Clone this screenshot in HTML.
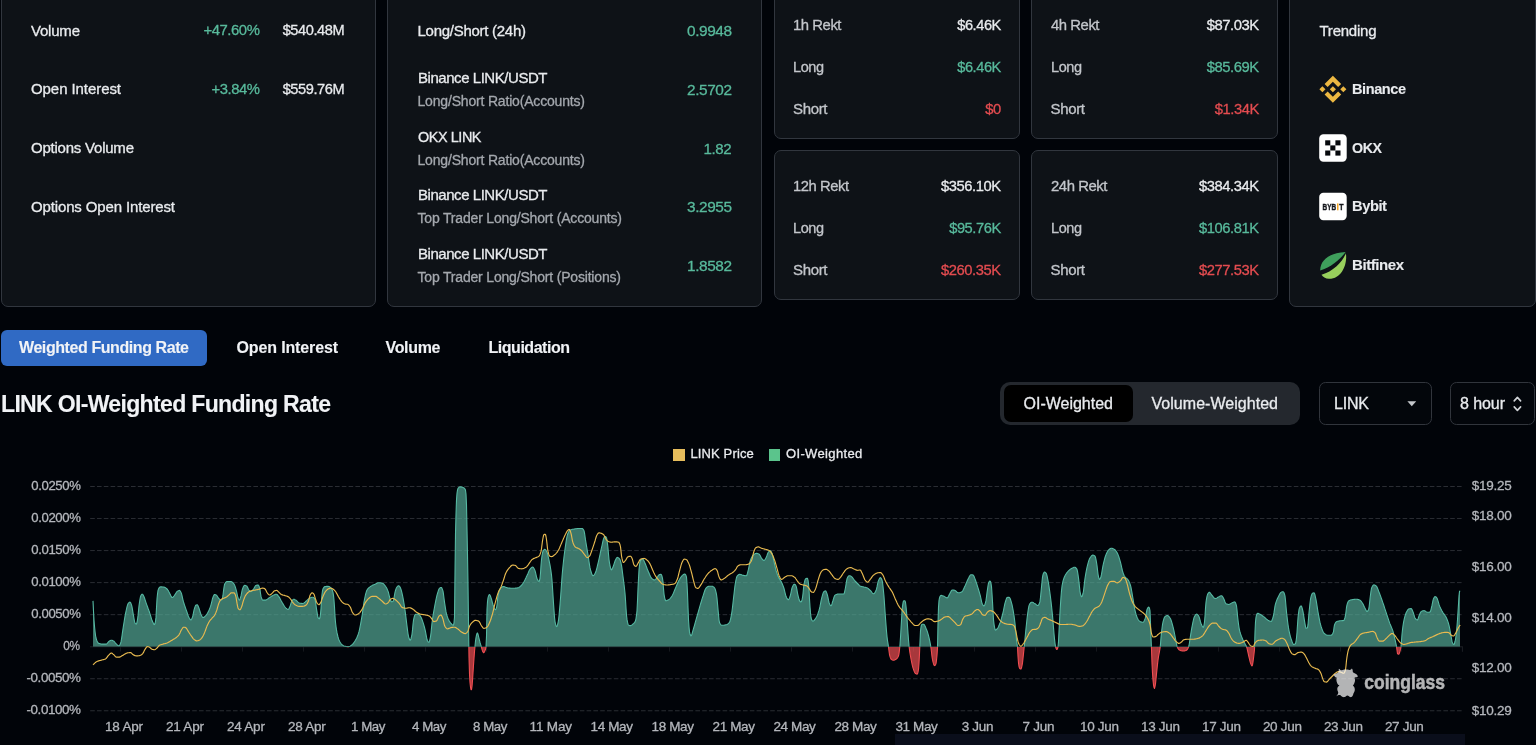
<!DOCTYPE html>
<html>
<head>
<meta charset="utf-8">
<title>LINK OI-Weighted Funding Rate</title>
<style>
html,body{margin:0;padding:0;}
body{width:1536px;height:745px;overflow:hidden;background:#010409;position:relative;
  font-family:"Liberation Sans",sans-serif;color:#e9ebee;}
.card{position:absolute;box-sizing:border-box;background:#0e1217;border:1px solid #31363e;border-radius:7px;}
.t{position:absolute;white-space:nowrap;line-height:20px;height:20px;-webkit-text-stroke:0.3px;}
.b{font-weight:700;-webkit-text-stroke:0.1px;}
.w{color:#f1f3f6;}
.g{color:#58ba9c;}
.r{color:#e34c50;}
.m{color:#a4a8ae;}
.l{color:#c3c6cb;}
.ax{color:#b4b7bc;}
.tab{position:absolute;box-sizing:border-box;border-radius:6px;background:#306ac4;}
svg{position:absolute;left:0;top:0;}
</style>
</head>
<body>

<!-- top cards -->
<div class="card" style="left:1px;top:-40px;width:375px;height:347px;"></div>
<div class="card" style="left:387px;top:-40px;width:375px;height:347px;"></div>
<div class="card" style="left:774px;top:-10px;width:246px;height:149px;"></div>
<div class="card" style="left:1031.4px;top:-10px;width:246.6px;height:149px;"></div>
<div class="card" style="left:774px;top:149.9px;width:246px;height:150.1px;"></div>
<div class="card" style="left:1031.4px;top:149.9px;width:246.6px;height:150.1px;"></div>
<div class="card" style="left:1289px;top:-40px;width:246.5px;height:347px;"></div>

<!-- tab button -->
<div class="tab" style="left:1px;top:329.8px;width:206.3px;height:36px;"></div>

<!-- segmented control -->
<div style="position:absolute;left:1000.4px;top:382.1px;width:300.1px;height:42.9px;border-radius:10px;background:#24282e;"></div>
<div style="position:absolute;left:1003.5px;top:385.2px;width:129.2px;height:36.7px;border-radius:7px;background:#000000;"></div>
<!-- selects -->
<div style="position:absolute;box-sizing:border-box;left:1318.8px;top:382px;width:113px;height:42.9px;border-radius:6.5px;border:1px solid #31353c;background:#03060b;"></div>
<div style="position:absolute;box-sizing:border-box;left:1449.7px;top:382px;width:85.6px;height:42.9px;border-radius:6.5px;border:1px solid #31353c;background:#03060b;"></div>

<!-- legend swatches -->
<div style="position:absolute;left:672.9px;top:448.9px;width:11.7px;height:11.9px;background:#e6bd5c;"></div>
<div style="position:absolute;left:768.6px;top:448.9px;width:11.7px;height:11.9px;background:#5bc48c;"></div>

<!-- bottom slider strip -->
<div style="position:absolute;left:895px;top:734px;width:570.4px;height:11px;background:#0a0e1b;"></div>

<div id="txt" style="position:absolute;left:0;top:0;width:1536px;height:745px;will-change:transform;">
<div class="t" style="font-size:15px;top:20.50px;line-height:20px;height:20px;letter-spacing:-0.209px;left:31.00px;">Volume</div>
<div class="t g" style="font-size:15px;top:20.00px;line-height:20px;height:20px;letter-spacing:-0.450px;transform:scaleX(0.9923);transform-origin:right center;right:1276.45px;">+47.60%</div>
<div class="t" style="font-size:15px;top:20.00px;line-height:20px;height:20px;letter-spacing:-0.450px;transform:scaleX(0.9737);transform-origin:right center;right:1191.44px;">$540.48M</div>
<div class="t" style="font-size:15px;top:79.00px;line-height:20px;height:20px;letter-spacing:-0.074px;left:31.00px;">Open Interest</div>
<div class="t g" style="font-size:15px;top:78.50px;line-height:20px;height:20px;letter-spacing:-0.450px;transform:scaleX(0.9888);transform-origin:right center;right:1276.44px;">+3.84%</div>
<div class="t" style="font-size:15px;top:78.50px;line-height:20px;height:20px;letter-spacing:-0.450px;transform:scaleX(0.9737);transform-origin:right center;right:1191.44px;">$559.76M</div>
<div class="t" style="font-size:15px;top:137.50px;line-height:20px;height:20px;letter-spacing:-0.224px;left:31.00px;">Options Volume</div>
<div class="t" style="font-size:15px;top:196.60px;line-height:20px;height:20px;letter-spacing:-0.138px;left:31.00px;">Options Open Interest</div>
<div class="t" style="font-size:15px;top:20.50px;line-height:20px;height:20px;letter-spacing:-0.272px;left:417.50px;">Long/Short (24h)</div>
<div class="t g" style="font-size:15.4px;top:21.00px;line-height:20px;height:20px;letter-spacing:-0.416px;right:804.42px;">0.9948</div>
<div class="t" style="font-size:15px;top:68.00px;line-height:20px;height:20px;letter-spacing:-0.450px;transform:scaleX(0.9997);transform-origin:left center;left:417.50px;">Binance LINK/USDT</div>
<div class="t m" style="font-size:14px;top:91.00px;line-height:20px;height:20px;letter-spacing:-0.179px;left:417.50px;">Long/Short Ratio(Accounts)</div>
<div class="t g" style="font-size:15.4px;top:80.00px;line-height:20px;height:20px;letter-spacing:-0.416px;right:804.42px;">2.5702</div>
<div class="t" style="font-size:15px;top:126.67px;line-height:20px;height:20px;letter-spacing:-0.450px;transform:scaleX(0.9613);transform-origin:left center;left:417.50px;">OKX LINK</div>
<div class="t m" style="font-size:14px;top:149.67px;line-height:20px;height:20px;letter-spacing:-0.179px;left:417.50px;">Long/Short Ratio(Accounts)</div>
<div class="t g" style="font-size:15.4px;top:138.67px;line-height:20px;height:20px;letter-spacing:-0.462px;transform:scaleX(0.9796);transform-origin:right center;right:804.45px;">1.82</div>
<div class="t" style="font-size:15px;top:185.34px;line-height:20px;height:20px;letter-spacing:-0.450px;transform:scaleX(0.9997);transform-origin:left center;left:417.50px;">Binance LINK/USDT</div>
<div class="t m" style="font-size:14px;top:208.34px;line-height:20px;height:20px;letter-spacing:-0.181px;left:417.50px;">Top Trader Long/Short (Accounts)</div>
<div class="t g" style="font-size:15.4px;top:197.34px;line-height:20px;height:20px;letter-spacing:-0.416px;right:804.42px;">3.2955</div>
<div class="t" style="font-size:15px;top:244.01px;line-height:20px;height:20px;letter-spacing:-0.450px;transform:scaleX(0.9997);transform-origin:left center;left:417.50px;">Binance LINK/USDT</div>
<div class="t m" style="font-size:14px;top:267.01px;line-height:20px;height:20px;letter-spacing:-0.183px;left:417.50px;">Top Trader Long/Short (Positions)</div>
<div class="t g" style="font-size:15.4px;top:256.01px;line-height:20px;height:20px;letter-spacing:-0.416px;right:804.42px;">1.8582</div>
<div class="t l" style="font-size:15px;top:14.50px;line-height:20px;height:20px;letter-spacing:-0.450px;transform:scaleX(0.9897);transform-origin:left center;left:793.00px;">1h Rekt</div>
<div class="t" style="font-size:15px;top:14.50px;line-height:20px;height:20px;letter-spacing:-0.450px;transform:scaleX(0.9714);transform-origin:right center;right:535.44px;">$6.46K</div>
<div class="t l" style="font-size:15px;top:56.50px;line-height:20px;height:20px;letter-spacing:-0.450px;transform:scaleX(0.9680);transform-origin:left center;left:793.00px;">Long</div>
<div class="t g" style="font-size:15px;top:56.50px;line-height:20px;height:20px;letter-spacing:-0.450px;transform:scaleX(0.9714);transform-origin:right center;right:535.44px;">$6.46K</div>
<div class="t l" style="font-size:15px;top:98.50px;line-height:20px;height:20px;letter-spacing:-0.340px;left:793.00px;">Short</div>
<div class="t r" style="font-size:15px;top:98.50px;line-height:20px;height:20px;letter-spacing:-0.450px;transform:scaleX(0.9854);transform-origin:right center;right:535.44px;">$0</div>
<div class="t l" style="font-size:15px;top:14.50px;line-height:20px;height:20px;letter-spacing:-0.450px;transform:scaleX(0.9897);transform-origin:left center;left:1050.50px;">4h Rekt</div>
<div class="t" style="font-size:15px;top:14.50px;line-height:20px;height:20px;letter-spacing:-0.450px;transform:scaleX(0.9870);transform-origin:right center;right:277.44px;">$87.03K</div>
<div class="t l" style="font-size:15px;top:56.50px;line-height:20px;height:20px;letter-spacing:-0.450px;transform:scaleX(0.9680);transform-origin:left center;left:1050.50px;">Long</div>
<div class="t g" style="font-size:15px;top:56.50px;line-height:20px;height:20px;letter-spacing:-0.450px;transform:scaleX(0.9870);transform-origin:right center;right:277.44px;">$85.69K</div>
<div class="t l" style="font-size:15px;top:98.50px;line-height:20px;height:20px;letter-spacing:-0.340px;left:1050.50px;">Short</div>
<div class="t r" style="font-size:15px;top:98.50px;line-height:20px;height:20px;letter-spacing:-0.450px;transform:scaleX(0.9824);transform-origin:right center;right:277.44px;">$1.34K</div>
<div class="t l" style="font-size:15px;top:176.00px;line-height:20px;height:20px;letter-spacing:-0.450px;transform:scaleX(0.9842);transform-origin:left center;left:793.00px;">12h Rekt</div>
<div class="t" style="font-size:15px;top:176.00px;line-height:20px;height:20px;letter-spacing:-0.450px;transform:scaleX(0.9822);transform-origin:right center;right:535.44px;">$356.10K</div>
<div class="t l" style="font-size:15px;top:218.00px;line-height:20px;height:20px;letter-spacing:-0.450px;transform:scaleX(0.9680);transform-origin:left center;left:793.00px;">Long</div>
<div class="t g" style="font-size:15px;top:218.00px;line-height:20px;height:20px;letter-spacing:-0.450px;transform:scaleX(0.9776);transform-origin:right center;right:535.44px;">$95.76K</div>
<div class="t l" style="font-size:15px;top:260.00px;line-height:20px;height:20px;letter-spacing:-0.340px;left:793.00px;">Short</div>
<div class="t r" style="font-size:15px;top:260.00px;line-height:20px;height:20px;letter-spacing:-0.450px;transform:scaleX(0.9822);transform-origin:right center;right:535.44px;">$260.35K</div>
<div class="t l" style="font-size:15px;top:176.00px;line-height:20px;height:20px;letter-spacing:-0.450px;transform:scaleX(0.9930);transform-origin:left center;left:1050.50px;">24h Rekt</div>
<div class="t" style="font-size:15px;top:176.00px;line-height:20px;height:20px;letter-spacing:-0.450px;transform:scaleX(0.9822);transform-origin:right center;right:277.44px;">$384.34K</div>
<div class="t l" style="font-size:15px;top:218.00px;line-height:20px;height:20px;letter-spacing:-0.450px;transform:scaleX(0.9680);transform-origin:left center;left:1050.50px;">Long</div>
<div class="t g" style="font-size:15px;top:218.00px;line-height:20px;height:20px;letter-spacing:-0.450px;transform:scaleX(0.9822);transform-origin:right center;right:277.44px;">$106.81K</div>
<div class="t l" style="font-size:15px;top:260.00px;line-height:20px;height:20px;letter-spacing:-0.340px;left:1050.50px;">Short</div>
<div class="t r" style="font-size:15px;top:260.00px;line-height:20px;height:20px;letter-spacing:-0.450px;transform:scaleX(0.9822);transform-origin:right center;right:277.44px;">$277.53K</div>
<div class="t" style="font-size:15px;top:20.50px;line-height:20px;height:20px;letter-spacing:-0.237px;left:1319.50px;">Trending</div>
<div class="t b" style="font-size:15px;top:79.00px;line-height:20px;height:20px;letter-spacing:-0.450px;transform:scaleX(0.9702);transform-origin:left center;left:1352.00px;">Binance</div>
<div class="t b" style="font-size:15px;top:137.50px;line-height:20px;height:20px;letter-spacing:-0.450px;transform:scaleX(0.9489);transform-origin:left center;left:1352.00px;">OKX</div>
<div class="t b" style="font-size:15px;top:196.00px;line-height:20px;height:20px;letter-spacing:-0.450px;transform:scaleX(0.9804);transform-origin:left center;left:1352.00px;">Bybit</div>
<div class="t b" style="font-size:15px;top:255.00px;line-height:20px;height:20px;letter-spacing:-0.431px;left:1352.00px;">Bitfinex</div>
<div class="t b w" style="font-size:16px;top:337.90px;line-height:20px;height:20px;letter-spacing:-0.418px;left:19.00px;">Weighted Funding Rate</div>
<div class="t b w" style="font-size:16px;top:337.90px;line-height:20px;height:20px;letter-spacing:-0.137px;left:236.50px;">Open Interest</div>
<div class="t b w" style="font-size:16px;top:337.90px;line-height:20px;height:20px;letter-spacing:-0.322px;left:385.50px;">Volume</div>
<div class="t b w" style="font-size:16px;top:337.90px;line-height:20px;height:20px;letter-spacing:-0.470px;left:488.50px;">Liquidation</div>
<div class="t b w" style="font-size:23.3px;top:388.60px;line-height:30px;height:30px;letter-spacing:-0.699px;transform:scaleX(0.9900);transform-origin:left center;left:1.00px;">LINK OI-Weighted Funding Rate</div>
<div class="t" style="font-size:16px;top:393.50px;line-height:20px;height:20px;letter-spacing:-0.003px;left:1023.50px;">OI-Weighted</div>
<div class="t" style="font-size:16px;top:393.50px;line-height:20px;height:20px;letter-spacing:0.036px;left:1151.50px;">Volume-Weighted</div>
<div class="t" style="font-size:16px;top:393.50px;line-height:20px;height:20px;letter-spacing:-0.193px;left:1334.00px;">LINK</div>
<div class="t" style="font-size:16px;top:393.50px;line-height:20px;height:20px;letter-spacing:-0.075px;left:1460.00px;">8 hour</div>
<div class="t" style="font-size:13px;top:444.40px;line-height:20px;height:20px;letter-spacing:0.140px;left:690.40px;">LINK Price</div>
<div class="t" style="font-size:13px;top:444.40px;line-height:20px;height:20px;letter-spacing:0.355px;left:786.00px;">OI-Weighted</div>
<div class="t ax" style="font-size:13.5px;top:475.60px;line-height:20px;height:20px;letter-spacing:-0.405px;transform:scaleX(0.9731);transform-origin:right center;right:1455.89px;">0.0250%</div>
<div class="t ax" style="font-size:13.5px;top:507.70px;line-height:20px;height:20px;letter-spacing:-0.405px;transform:scaleX(0.9731);transform-origin:right center;right:1455.89px;">0.0200%</div>
<div class="t ax" style="font-size:13.5px;top:539.80px;line-height:20px;height:20px;letter-spacing:-0.405px;transform:scaleX(0.9731);transform-origin:right center;right:1455.89px;">0.0150%</div>
<div class="t ax" style="font-size:13.5px;top:571.90px;line-height:20px;height:20px;letter-spacing:-0.405px;transform:scaleX(0.9731);transform-origin:right center;right:1455.89px;">0.0100%</div>
<div class="t ax" style="font-size:13.5px;top:604.00px;line-height:20px;height:20px;letter-spacing:-0.405px;transform:scaleX(0.9731);transform-origin:right center;right:1455.89px;">0.0050%</div>
<div class="t ax" style="font-size:13.5px;top:636.10px;line-height:20px;height:20px;letter-spacing:-0.405px;transform:scaleX(0.8791);transform-origin:right center;right:1455.86px;">0%</div>
<div class="t ax" style="font-size:13.5px;top:668.20px;line-height:20px;height:20px;letter-spacing:-0.405px;transform:scaleX(0.9916);transform-origin:right center;right:1455.90px;">-0.0050%</div>
<div class="t ax" style="font-size:13.5px;top:700.30px;line-height:20px;height:20px;letter-spacing:-0.405px;transform:scaleX(0.9916);transform-origin:right center;right:1455.90px;">-0.0100%</div>
<div class="t ax" style="font-size:13.5px;top:475.60px;line-height:20px;height:20px;letter-spacing:-0.279px;left:1471.80px;">$19.25</div>
<div class="t ax" style="font-size:13.5px;top:506.40px;line-height:20px;height:20px;letter-spacing:-0.279px;left:1471.80px;">$18.00</div>
<div class="t ax" style="font-size:13.5px;top:557.40px;line-height:20px;height:20px;letter-spacing:-0.279px;left:1471.80px;">$16.00</div>
<div class="t ax" style="font-size:13.5px;top:607.70px;line-height:20px;height:20px;letter-spacing:-0.279px;left:1471.80px;">$14.00</div>
<div class="t ax" style="font-size:13.5px;top:657.80px;line-height:20px;height:20px;letter-spacing:-0.279px;left:1471.80px;">$12.00</div>
<div class="t ax" style="font-size:13.5px;top:700.70px;line-height:20px;height:20px;letter-spacing:-0.279px;left:1471.80px;">$10.29</div>
<div class="t ax" style="font-size:13.5px;top:716.50px;line-height:20px;height:20px;letter-spacing:-0.226px;left:123.89px;width:0;display:flex;justify-content:center;"><span>18 Apr</span></div>
<div class="t ax" style="font-size:13.5px;top:716.50px;line-height:20px;height:20px;letter-spacing:-0.226px;left:184.86px;width:0;display:flex;justify-content:center;"><span>21 Apr</span></div>
<div class="t ax" style="font-size:13.5px;top:716.50px;line-height:20px;height:20px;letter-spacing:-0.226px;left:245.83px;width:0;display:flex;justify-content:center;"><span>24 Apr</span></div>
<div class="t ax" style="font-size:13.5px;top:716.50px;line-height:20px;height:20px;letter-spacing:-0.226px;left:306.80px;width:0;display:flex;justify-content:center;"><span>28 Apr</span></div>
<div class="t ax" style="font-size:13.5px;top:716.50px;line-height:20px;height:20px;letter-spacing:-0.405px;transform:scaleX(0.9845);transform-origin:center center;left:367.68px;width:0;display:flex;justify-content:center;"><span>1 May</span></div>
<div class="t ax" style="font-size:13.5px;top:716.50px;line-height:20px;height:20px;letter-spacing:-0.405px;transform:scaleX(0.9845);transform-origin:center center;left:428.65px;width:0;display:flex;justify-content:center;"><span>4 May</span></div>
<div class="t ax" style="font-size:13.5px;top:716.50px;line-height:20px;height:20px;letter-spacing:-0.405px;transform:scaleX(0.9845);transform-origin:center center;left:489.62px;width:0;display:flex;justify-content:center;"><span>8 May</span></div>
<div class="t ax" style="font-size:13.5px;top:716.50px;line-height:20px;height:20px;letter-spacing:-0.176px;left:550.70px;width:0;display:flex;justify-content:center;"><span>11 May</span></div>
<div class="t ax" style="font-size:13.5px;top:716.50px;line-height:20px;height:20px;letter-spacing:-0.376px;left:611.57px;width:0;display:flex;justify-content:center;"><span>14 May</span></div>
<div class="t ax" style="font-size:13.5px;top:716.50px;line-height:20px;height:20px;letter-spacing:-0.376px;left:672.54px;width:0;display:flex;justify-content:center;"><span>18 May</span></div>
<div class="t ax" style="font-size:13.5px;top:716.50px;line-height:20px;height:20px;letter-spacing:-0.376px;left:733.51px;width:0;display:flex;justify-content:center;"><span>21 May</span></div>
<div class="t ax" style="font-size:13.5px;top:716.50px;line-height:20px;height:20px;letter-spacing:-0.376px;left:794.48px;width:0;display:flex;justify-content:center;"><span>24 May</span></div>
<div class="t ax" style="font-size:13.5px;top:716.50px;line-height:20px;height:20px;letter-spacing:-0.376px;left:855.45px;width:0;display:flex;justify-content:center;"><span>28 May</span></div>
<div class="t ax" style="font-size:13.5px;top:716.50px;line-height:20px;height:20px;letter-spacing:-0.376px;left:916.42px;width:0;display:flex;justify-content:center;"><span>31 May</span></div>
<div class="t ax" style="font-size:13.5px;top:716.50px;line-height:20px;height:20px;letter-spacing:-0.283px;left:977.44px;width:0;display:flex;justify-content:center;"><span>3 Jun</span></div>
<div class="t ax" style="font-size:13.5px;top:716.50px;line-height:20px;height:20px;letter-spacing:-0.283px;left:1038.41px;width:0;display:flex;justify-content:center;"><span>7 Jun</span></div>
<div class="t ax" style="font-size:13.5px;top:716.50px;line-height:20px;height:20px;letter-spacing:-0.309px;left:1099.37px;width:0;display:flex;justify-content:center;"><span>10 Jun</span></div>
<div class="t ax" style="font-size:13.5px;top:716.50px;line-height:20px;height:20px;letter-spacing:-0.309px;left:1160.34px;width:0;display:flex;justify-content:center;"><span>13 Jun</span></div>
<div class="t ax" style="font-size:13.5px;top:716.50px;line-height:20px;height:20px;letter-spacing:-0.309px;left:1221.31px;width:0;display:flex;justify-content:center;"><span>17 Jun</span></div>
<div class="t ax" style="font-size:13.5px;top:716.50px;line-height:20px;height:20px;letter-spacing:-0.309px;left:1282.28px;width:0;display:flex;justify-content:center;"><span>20 Jun</span></div>
<div class="t ax" style="font-size:13.5px;top:716.50px;line-height:20px;height:20px;letter-spacing:-0.309px;left:1343.25px;width:0;display:flex;justify-content:center;"><span>23 Jun</span></div>
<div class="t ax" style="font-size:13.5px;top:716.50px;line-height:20px;height:20px;letter-spacing:-0.309px;left:1404.22px;width:0;display:flex;justify-content:center;"><span>27 Jun</span></div>
</div>

<svg width="1536" height="745" viewBox="0 0 1536 745">
  <defs>
    <clipPath id="cpos"><rect x="0" y="0" width="1536" height="646.7"/></clipPath>
    <clipPath id="cneg"><rect x="0" y="647.1" width="1536" height="100"/></clipPath>
  </defs>
  <!-- grid -->
  <g stroke="#2a2d33" stroke-width="1" stroke-dasharray="4.6 2.2" fill="none">
    <path d="M90.2 486.50H1462.4 M90.2 518.54H1462.4 M90.2 550.58H1462.4 M90.2 582.62H1462.4 M90.2 614.66H1462.4 M90.2 678.74H1462.4 M90.2 710.78H1462.4"/>
  </g>
  <path d="M90 646.8H1462" stroke="#1d2025" stroke-width="1" fill="none"/>
  <g stroke="#15181d" stroke-width="1"><path d="M120.5 646.6v5"/><path d="M181.5 646.6v5"/><path d="M242.5 646.6v5"/><path d="M303.5 646.6v5"/><path d="M364.5 646.6v5"/><path d="M425.5 646.6v5"/><path d="M486.5 646.6v5"/><path d="M547.5 646.6v5"/><path d="M608.5 646.6v5"/><path d="M669.5 646.6v5"/><path d="M730.5 646.6v5"/><path d="M791.5 646.6v5"/><path d="M852.5 646.6v5"/><path d="M913.5 646.6v5"/><path d="M974.5 646.6v5"/><path d="M1035.5 646.6v5"/><path d="M1096.5 646.6v5"/><path d="M1157.5 646.6v5"/><path d="M1218.5 646.6v5"/><path d="M1279.5 646.6v5"/><path d="M1340.5 646.6v5"/><path d="M1401.5 646.6v5"/></g>
  <path d="M1462.4 646.3v5.5" stroke="#1d2025" stroke-width="1"/>
  <!-- area -->
  <path d="M93.0 600.9 L93.5 611.3 L94.0 620.0 L94.5 626.2 L95.0 631.3 L95.5 635.3 L96.0 638.0 L96.5 639.6 L97.0 640.9 L97.5 642.0 L98.0 642.8 L98.5 643.2 L99.0 643.4 L99.5 643.6 L100.0 643.8 L100.5 643.9 L101.0 644.0 L101.5 644.1 L102.0 644.1 L102.5 644.1 L103.0 644.1 L103.5 644.1 L104.0 644.1 L104.5 644.1 L105.0 644.1 L105.5 644.1 L106.0 644.1 L106.5 644.0 L107.0 643.6 L107.5 643.0 L108.0 642.3 L108.5 641.8 L109.0 641.4 L109.5 641.0 L110.0 640.7 L110.5 640.4 L111.0 640.2 L111.5 640.2 L112.0 640.3 L112.5 640.5 L113.0 640.8 L113.5 641.0 L114.0 641.3 L114.5 641.8 L115.0 642.5 L115.5 643.1 L116.0 643.7 L116.5 644.2 L117.0 644.7 L117.5 645.1 L118.0 645.5 L118.5 645.7 L119.0 645.8 L119.5 645.4 L120.0 644.5 L120.5 643.5 L121.0 641.9 L121.5 639.2 L122.0 635.8 L122.5 632.2 L123.0 628.8 L123.5 625.7 L124.0 622.5 L124.5 619.3 L125.0 616.3 L125.5 613.6 L126.0 611.3 L126.5 609.0 L127.0 606.8 L127.5 605.1 L128.0 603.8 L128.5 603.1 L129.0 602.6 L129.5 602.2 L130.0 602.1 L130.5 602.6 L131.0 603.6 L131.5 604.9 L132.0 606.8 L132.5 609.7 L133.0 612.8 L133.5 615.7 L134.0 618.7 L134.5 621.4 L135.0 623.0 L135.5 623.6 L136.0 624.0 L136.5 624.0 L137.0 622.3 L137.5 619.7 L138.0 615.9 L138.5 610.8 L139.0 605.9 L139.5 602.4 L140.0 599.2 L140.5 596.7 L141.0 595.4 L141.5 594.7 L142.0 594.2 L142.5 594.2 L143.0 594.8 L143.5 595.8 L144.0 596.8 L144.5 598.0 L145.0 599.6 L145.5 601.2 L146.0 602.7 L146.5 604.1 L147.0 605.4 L147.5 606.8 L148.0 608.2 L148.5 609.5 L149.0 610.9 L149.5 612.3 L150.0 613.9 L150.5 615.5 L151.0 617.2 L151.5 618.8 L152.0 620.3 L152.5 621.6 L153.0 622.6 L153.5 623.6 L154.0 624.4 L154.5 624.6 L155.0 623.6 L155.5 621.3 L156.0 617.4 L156.5 607.7 L157.0 599.1 L157.5 594.0 L158.0 590.5 L158.5 589.1 L159.0 588.1 L159.5 587.4 L160.0 587.0 L160.5 586.9 L161.0 586.9 L161.5 586.9 L162.0 586.9 L162.5 587.0 L163.0 587.0 L163.5 587.0 L164.0 587.1 L164.5 587.2 L165.0 587.5 L165.5 587.8 L166.0 588.1 L166.5 588.5 L167.0 589.0 L167.5 589.5 L168.0 590.2 L168.5 591.1 L169.0 592.1 L169.5 593.0 L170.0 593.9 L170.5 595.0 L171.0 596.1 L171.5 597.0 L172.0 597.5 L172.5 597.5 L173.0 597.2 L173.5 596.6 L174.0 596.0 L174.5 595.3 L175.0 594.7 L175.5 593.9 L176.0 593.0 L176.5 592.2 L177.0 591.5 L177.5 591.2 L178.0 590.9 L178.5 590.7 L179.0 590.5 L179.5 590.4 L180.0 590.7 L180.5 591.5 L181.0 592.4 L181.5 593.6 L182.0 595.6 L182.5 597.9 L183.0 600.1 L183.5 601.9 L184.0 603.5 L184.5 605.1 L185.0 606.5 L185.5 608.0 L186.0 609.4 L186.5 610.8 L187.0 612.2 L187.5 613.7 L188.0 615.2 L188.5 616.5 L189.0 617.6 L189.5 618.5 L190.0 619.2 L190.5 619.8 L191.0 619.9 L191.5 619.3 L192.0 618.3 L192.5 617.1 L193.0 615.3 L193.5 612.7 L194.0 610.2 L194.5 608.5 L195.0 606.9 L195.5 605.7 L196.0 605.1 L196.5 605.0 L197.0 604.8 L197.5 604.9 L198.0 605.8 L198.5 607.0 L199.0 608.2 L199.5 609.8 L200.0 611.5 L200.5 613.2 L201.0 614.5 L201.5 615.5 L202.0 616.5 L202.5 617.2 L203.0 617.5 L203.5 617.4 L204.0 617.2 L204.5 616.8 L205.0 616.4 L205.5 615.9 L206.0 615.4 L206.5 614.7 L207.0 614.0 L207.5 613.1 L208.0 612.3 L208.5 611.3 L209.0 610.3 L209.5 609.1 L210.0 607.8 L210.5 606.4 L211.0 604.8 L211.5 603.0 L212.0 600.8 L212.5 598.6 L213.0 597.2 L213.5 595.9 L214.0 594.9 L214.5 594.5 L215.0 594.6 L215.5 594.7 L216.0 594.9 L216.5 595.2 L217.0 595.8 L217.5 596.5 L218.0 597.4 L218.5 598.1 L219.0 598.6 L219.5 599.2 L220.0 599.6 L220.5 600.0 L221.0 600.1 L221.5 599.9 L222.0 599.3 L222.5 598.4 L223.0 595.2 L223.5 590.8 L224.0 587.4 L224.5 584.6 L225.0 583.5 L225.5 582.7 L226.0 582.1 L226.5 581.7 L227.0 581.5 L227.5 581.5 L228.0 581.5 L228.5 581.5 L229.0 581.5 L229.5 581.5 L230.0 581.5 L230.5 581.5 L231.0 581.5 L231.5 581.7 L232.0 582.0 L232.5 582.4 L233.0 582.9 L233.5 583.4 L234.0 584.0 L234.5 584.9 L235.0 586.1 L235.5 587.6 L236.0 589.3 L236.5 591.1 L237.0 593.4 L237.5 595.8 L238.0 597.8 L238.5 598.9 L239.0 599.8 L239.5 600.1 L240.0 599.2 L240.5 597.6 L241.0 595.9 L241.5 593.4 L242.0 590.9 L242.5 589.0 L243.0 587.7 L243.5 586.5 L244.0 585.7 L244.5 585.4 L245.0 585.4 L245.5 585.5 L246.0 585.7 L246.5 585.9 L247.0 586.3 L247.5 587.2 L248.0 588.3 L248.5 589.3 L249.0 590.1 L249.5 590.6 L250.0 591.1 L250.5 591.5 L251.0 591.6 L251.5 591.4 L252.0 591.0 L252.5 590.4 L253.0 589.7 L253.5 589.1 L254.0 588.3 L254.5 587.4 L255.0 586.5 L255.5 585.7 L256.0 585.4 L256.5 585.2 L257.0 585.1 L257.5 585.1 L258.0 585.0 L258.5 585.3 L259.0 586.3 L259.5 587.6 L260.0 589.5 L260.5 593.2 L261.0 596.4 L261.5 597.9 L262.0 599.2 L262.5 600.0 L263.0 600.1 L263.5 600.1 L264.0 600.1 L264.5 600.1 L265.0 600.1 L265.5 600.1 L266.0 600.0 L266.5 599.8 L267.0 599.4 L267.5 599.1 L268.0 598.7 L268.5 598.3 L269.0 597.9 L269.5 597.6 L270.0 597.3 L270.5 597.0 L271.0 596.6 L271.5 596.3 L272.0 596.0 L272.5 595.7 L273.0 595.4 L273.5 595.1 L274.0 594.9 L274.5 594.7 L275.0 594.5 L275.5 594.3 L276.0 594.2 L276.5 594.2 L277.0 594.4 L277.5 594.9 L278.0 595.6 L278.5 596.2 L279.0 596.9 L279.5 597.6 L280.0 598.5 L280.5 599.4 L281.0 600.4 L281.5 601.3 L282.0 602.2 L282.5 603.0 L283.0 603.9 L283.5 604.7 L284.0 605.6 L284.5 606.3 L285.0 607.0 L285.5 607.6 L286.0 608.1 L286.5 608.5 L287.0 608.9 L287.5 609.2 L288.0 609.4 L288.5 609.3 L289.0 608.6 L289.5 607.6 L290.0 606.6 L290.5 605.0 L291.0 603.3 L291.5 601.9 L292.0 601.0 L292.5 600.2 L293.0 599.5 L293.5 599.3 L294.0 599.3 L294.5 599.4 L295.0 599.7 L295.5 599.9 L296.0 600.2 L296.5 600.6 L297.0 601.1 L297.5 601.7 L298.0 602.2 L298.5 602.6 L299.0 602.9 L299.5 603.1 L300.0 603.2 L300.5 603.3 L301.0 603.4 L301.5 603.4 L302.0 603.5 L302.5 603.5 L303.0 603.4 L303.5 603.2 L304.0 602.9 L304.5 602.5 L305.0 602.1 L305.5 601.6 L306.0 601.2 L306.5 600.8 L307.0 600.4 L307.5 599.9 L308.0 599.4 L308.5 599.0 L309.0 598.6 L309.5 598.3 L310.0 598.1 L310.5 597.8 L311.0 597.6 L311.5 597.4 L312.0 597.3 L312.5 597.2 L313.0 597.3 L313.5 597.5 L314.0 598.0 L314.5 598.6 L315.0 599.4 L315.5 601.7 L316.0 605.3 L316.5 608.8 L317.0 611.8 L317.5 615.1 L318.0 617.6 L318.5 618.3 L319.0 618.6 L319.5 618.7 L320.0 617.3 L320.5 614.1 L321.0 608.6 L321.5 599.9 L322.0 594.5 L322.5 590.6 L323.0 588.8 L323.5 587.9 L324.0 587.2 L324.5 586.8 L325.0 586.6 L325.5 586.5 L326.0 586.5 L326.5 586.4 L327.0 586.4 L327.5 586.4 L328.0 586.4 L328.5 586.4 L329.0 586.6 L329.5 586.8 L330.0 587.1 L330.5 587.5 L331.0 587.9 L331.5 588.5 L332.0 589.5 L332.5 590.8 L333.0 592.4 L333.5 595.4 L334.0 600.3 L334.5 607.0 L335.0 616.4 L335.5 622.3 L336.0 626.6 L336.5 629.9 L337.0 632.7 L337.5 635.0 L338.0 637.0 L338.5 638.7 L339.0 640.0 L339.5 641.1 L340.0 642.0 L340.5 642.8 L341.0 643.5 L341.5 644.1 L342.0 644.6 L342.5 645.0 L343.0 645.4 L343.5 645.7 L344.0 646.0 L344.5 646.2 L345.0 646.3 L345.5 646.4 L346.0 646.5 L346.5 646.5 L347.0 646.6 L347.5 646.6 L348.0 646.6 L348.5 646.6 L349.0 646.6 L349.5 646.4 L350.0 646.2 L350.5 645.9 L351.0 645.5 L351.5 645.2 L352.0 644.8 L352.5 644.4 L353.0 643.8 L353.5 643.2 L354.0 642.5 L354.5 641.8 L355.0 641.0 L355.5 640.2 L356.0 639.3 L356.5 638.4 L357.0 637.3 L357.5 636.1 L358.0 634.8 L358.5 633.4 L359.0 631.7 L359.5 629.6 L360.0 627.2 L360.5 624.6 L361.0 621.8 L361.5 618.9 L362.0 616.0 L362.5 612.8 L363.0 609.2 L363.5 605.5 L364.0 602.1 L364.5 599.3 L365.0 597.0 L365.5 594.7 L366.0 592.8 L366.5 591.2 L367.0 590.0 L367.5 589.3 L368.0 588.6 L368.5 588.1 L369.0 587.6 L369.5 587.2 L370.0 586.9 L370.5 586.5 L371.0 586.2 L371.5 585.9 L372.0 585.6 L372.5 585.3 L373.0 585.1 L373.5 584.9 L374.0 584.6 L374.5 584.4 L375.0 584.2 L375.5 583.9 L376.0 583.7 L376.5 583.4 L377.0 583.2 L377.5 582.9 L378.0 582.8 L378.5 582.7 L379.0 582.7 L379.5 582.7 L380.0 582.7 L380.5 582.8 L381.0 582.9 L381.5 583.0 L382.0 583.1 L382.5 583.2 L383.0 583.5 L383.5 583.9 L384.0 584.4 L384.5 585.0 L385.0 585.6 L385.5 586.3 L386.0 587.0 L386.5 587.8 L387.0 588.8 L387.5 589.9 L388.0 591.1 L388.5 592.6 L389.0 594.8 L389.5 597.0 L390.0 598.7 L390.5 600.0 L391.0 601.2 L391.5 601.8 L392.0 601.7 L392.5 601.5 L393.0 601.2 L393.5 600.5 L394.0 598.1 L394.5 595.0 L395.0 592.4 L395.5 590.5 L396.0 588.9 L396.5 587.7 L397.0 587.0 L397.5 586.4 L398.0 586.0 L398.5 585.7 L399.0 585.8 L399.5 586.3 L400.0 587.1 L400.5 588.1 L401.0 589.3 L401.5 591.1 L402.0 593.2 L402.5 595.4 L403.0 597.8 L403.5 600.6 L404.0 603.6 L404.5 606.8 L405.0 610.2 L405.5 613.8 L406.0 617.9 L406.5 622.1 L407.0 626.0 L407.5 630.0 L408.0 633.8 L408.5 636.4 L409.0 638.0 L409.5 639.4 L410.0 640.1 L410.5 640.0 L411.0 638.7 L411.5 636.7 L412.0 634.3 L412.5 629.9 L413.0 624.4 L413.5 620.1 L414.0 617.8 L414.5 615.9 L415.0 614.7 L415.5 614.4 L416.0 614.3 L416.5 614.2 L417.0 614.2 L417.5 614.1 L418.0 614.2 L418.5 614.3 L419.0 614.7 L419.5 615.2 L420.0 615.7 L420.5 616.3 L421.0 617.2 L421.5 618.3 L422.0 619.5 L422.5 620.9 L423.0 622.4 L423.5 623.9 L424.0 625.6 L424.5 627.5 L425.0 629.5 L425.5 631.6 L426.0 634.3 L426.5 637.2 L427.0 639.5 L427.5 640.7 L428.0 641.6 L428.5 642.3 L429.0 642.3 L429.5 641.2 L430.0 639.1 L430.5 636.6 L431.0 633.0 L431.5 628.0 L432.0 623.0 L432.5 619.3 L433.0 616.0 L433.5 612.9 L434.0 610.1 L434.5 607.4 L435.0 604.7 L435.5 602.1 L436.0 599.6 L436.5 597.3 L437.0 595.2 L437.5 593.5 L438.0 591.8 L438.5 590.2 L439.0 589.0 L439.5 588.2 L440.0 587.9 L440.5 587.6 L441.0 587.4 L441.5 587.6 L442.0 588.4 L442.5 589.6 L443.0 591.2 L443.5 594.2 L444.0 598.3 L444.5 602.1 L445.0 605.4 L445.5 608.7 L446.0 611.7 L446.5 614.1 L447.0 615.7 L447.5 617.2 L448.0 618.5 L448.5 619.6 L449.0 620.6 L449.5 621.4 L450.0 622.1 L450.5 622.8 L451.0 623.4 L451.5 624.0 L452.0 624.5 L452.5 624.9 L453.0 625.1 L453.5 625.1 L454.0 622.8 L454.5 617.2 L455.0 572.5 L455.5 533.3 L456.0 514.6 L456.5 499.7 L457.0 493.3 L457.5 490.1 L458.0 488.4 L458.5 487.8 L459.0 487.3 L459.5 487.0 L460.0 486.9 L460.5 486.9 L461.0 486.9 L461.5 487.0 L462.0 487.1 L462.5 487.3 L463.0 487.5 L463.5 487.7 L464.0 488.0 L464.5 488.4 L465.0 489.0 L465.5 490.3 L466.0 494.1 L466.5 504.9 L467.0 529.5 L467.5 554.4 L468.0 583.7 L468.5 622.6 L469.0 657.2 L469.5 674.2 L470.0 682.5 L470.5 687.1 L471.0 689.7 L471.5 689.6 L472.0 686.4 L472.5 680.4 L473.0 672.8 L473.5 665.2 L474.0 658.1 L474.5 651.7 L475.0 646.0 L475.5 641.0 L476.0 637.6 L476.5 635.2 L477.0 633.5 L477.5 633.0 L478.0 634.2 L478.5 636.3 L479.0 638.4 L479.5 640.4 L480.0 642.4 L480.5 644.2 L481.0 645.7 L481.5 647.3 L482.0 649.3 L482.5 650.9 L483.0 651.9 L483.5 652.6 L484.0 652.6 L484.5 651.7 L485.0 650.6 L485.5 649.3 L486.0 647.0 L486.5 636.6 L487.0 609.5 L487.5 601.5 L488.0 597.9 L488.5 596.1 L489.0 594.9 L489.5 594.5 L490.0 595.1 L490.5 596.3 L491.0 597.7 L491.5 599.2 L492.0 601.1 L492.5 603.0 L493.0 604.7 L493.5 606.1 L494.0 607.5 L494.5 608.7 L495.0 609.5 L495.5 609.7 L496.0 609.0 L496.5 607.8 L497.0 605.0 L497.5 600.1 L498.0 595.5 L498.5 593.1 L499.0 591.3 L499.5 589.9 L500.0 588.8 L500.5 588.2 L501.0 587.7 L501.5 587.3 L502.0 587.0 L502.5 586.7 L503.0 586.6 L503.5 586.6 L504.0 586.6 L504.5 586.8 L505.0 587.0 L505.5 587.2 L506.0 587.4 L506.5 587.6 L507.0 587.8 L507.5 587.9 L508.0 588.0 L508.5 588.0 L509.0 588.1 L509.5 588.1 L510.0 588.1 L510.5 588.2 L511.0 588.2 L511.5 588.2 L512.0 588.2 L512.5 588.2 L513.0 588.2 L513.5 588.2 L514.0 588.2 L514.5 588.2 L515.0 588.2 L515.5 588.1 L516.0 588.1 L516.5 588.0 L517.0 588.0 L517.5 587.9 L518.0 587.8 L518.5 587.7 L519.0 587.4 L519.5 587.0 L520.0 586.7 L520.5 586.2 L521.0 585.8 L521.5 585.3 L522.0 584.7 L522.5 584.0 L523.0 583.3 L523.5 582.5 L524.0 581.7 L524.5 580.8 L525.0 579.8 L525.5 578.7 L526.0 577.7 L526.5 576.6 L527.0 575.6 L527.5 574.5 L528.0 573.4 L528.5 572.2 L529.0 571.1 L529.5 570.1 L530.0 569.3 L530.5 568.7 L531.0 568.1 L531.5 567.6 L532.0 567.3 L532.5 567.1 L533.0 567.2 L533.5 567.7 L534.0 568.5 L534.5 569.4 L535.0 570.6 L535.5 572.4 L536.0 574.7 L536.5 576.8 L537.0 578.5 L537.5 579.6 L538.0 580.6 L538.5 581.3 L539.0 581.4 L539.5 580.3 L540.0 578.3 L540.5 573.3 L541.0 565.2 L541.5 559.5 L542.0 555.9 L542.5 553.0 L543.0 551.2 L543.5 550.4 L544.0 549.7 L544.5 549.4 L545.0 549.4 L545.5 549.7 L546.0 550.4 L546.5 551.3 L547.0 552.2 L547.5 553.7 L548.0 555.7 L548.5 557.9 L549.0 560.2 L549.5 562.6 L550.0 565.1 L550.5 568.0 L551.0 571.2 L551.5 575.1 L552.0 580.4 L552.5 587.6 L553.0 595.6 L553.5 603.2 L554.0 610.3 L554.5 617.3 L555.0 621.6 L555.5 623.9 L556.0 625.7 L556.5 626.6 L557.0 626.3 L557.5 624.9 L558.0 622.8 L558.5 620.2 L559.0 616.0 L559.5 610.4 L560.0 604.5 L560.5 598.3 L561.0 591.3 L561.5 584.1 L562.0 577.1 L562.5 571.1 L563.0 566.0 L563.5 561.2 L564.0 556.8 L564.5 552.8 L565.0 549.1 L565.5 545.7 L566.0 542.3 L566.5 539.2 L567.0 536.6 L567.5 534.6 L568.0 533.3 L568.5 532.2 L569.0 531.3 L569.5 530.6 L570.0 530.1 L570.5 529.9 L571.0 529.7 L571.5 529.6 L572.0 529.4 L572.5 529.3 L573.0 529.3 L573.5 529.2 L574.0 529.1 L574.5 529.0 L575.0 528.9 L575.5 528.8 L576.0 528.7 L576.5 528.7 L577.0 528.6 L577.5 528.5 L578.0 528.5 L578.5 528.5 L579.0 528.5 L579.5 528.5 L580.0 528.5 L580.5 528.5 L581.0 528.5 L581.5 528.5 L582.0 528.5 L582.5 528.6 L583.0 529.1 L583.5 529.8 L584.0 530.7 L584.5 532.8 L585.0 536.4 L585.5 539.9 L586.0 542.9 L586.5 545.9 L587.0 548.9 L587.5 551.9 L588.0 554.9 L588.5 558.1 L589.0 561.5 L589.5 564.8 L590.0 567.7 L590.5 569.8 L591.0 571.5 L591.5 573.1 L592.0 574.4 L592.5 575.3 L593.0 575.7 L593.5 575.5 L594.0 575.1 L594.5 574.4 L595.0 573.6 L595.5 572.6 L596.0 571.3 L596.5 569.5 L597.0 567.6 L597.5 565.5 L598.0 563.4 L598.5 561.4 L599.0 559.2 L599.5 556.9 L600.0 554.6 L600.5 552.2 L601.0 549.9 L601.5 547.7 L602.0 545.5 L602.5 543.1 L603.0 540.8 L603.5 538.9 L604.0 537.7 L604.5 536.9 L605.0 536.5 L605.5 536.5 L606.0 537.0 L606.5 537.7 L607.0 540.0 L607.5 543.9 L608.0 548.4 L608.5 554.1 L609.0 559.5 L609.5 563.0 L610.0 565.6 L610.5 567.9 L611.0 569.4 L611.5 569.8 L612.0 569.2 L612.5 568.2 L613.0 567.0 L613.5 565.8 L614.0 564.2 L614.5 562.6 L615.0 561.1 L615.5 560.0 L616.0 559.0 L616.5 558.1 L617.0 557.5 L617.5 557.4 L618.0 557.6 L618.5 557.9 L619.0 558.3 L619.5 558.8 L620.0 559.6 L620.5 561.1 L621.0 563.0 L621.5 565.3 L622.0 568.7 L622.5 572.6 L623.0 576.5 L623.5 580.3 L624.0 584.2 L624.5 588.5 L625.0 593.3 L625.5 599.7 L626.0 608.0 L626.5 615.3 L627.0 619.4 L627.5 622.2 L628.0 624.2 L628.5 625.1 L629.0 625.4 L629.5 625.5 L630.0 625.6 L630.5 625.6 L631.0 625.5 L631.5 625.3 L632.0 624.9 L632.5 624.4 L633.0 624.0 L633.5 623.6 L634.0 623.1 L634.5 622.6 L635.0 621.9 L635.5 620.8 L636.0 618.5 L636.5 615.2 L637.0 610.7 L637.5 600.8 L638.0 588.5 L638.5 578.7 L639.0 569.9 L639.5 565.1 L640.0 562.1 L640.5 560.4 L641.0 559.8 L641.5 559.5 L642.0 559.2 L642.5 559.1 L643.0 559.2 L643.5 559.9 L644.0 560.9 L644.5 562.1 L645.0 563.2 L645.5 564.3 L646.0 565.6 L646.5 566.9 L647.0 568.3 L647.5 569.6 L648.0 570.8 L648.5 572.0 L649.0 573.1 L649.5 574.3 L650.0 575.4 L650.5 576.5 L651.0 577.4 L651.5 578.1 L652.0 578.6 L652.5 579.0 L653.0 579.4 L653.5 579.8 L654.0 579.9 L654.5 579.9 L655.0 579.7 L655.5 579.4 L656.0 578.9 L656.5 578.5 L657.0 577.9 L657.5 577.1 L658.0 576.1 L658.5 575.3 L659.0 574.8 L659.5 574.6 L660.0 574.5 L660.5 574.4 L661.0 574.3 L661.5 574.9 L662.0 576.3 L662.5 578.3 L663.0 581.8 L663.5 588.6 L664.0 594.1 L664.5 597.0 L665.0 599.3 L665.5 600.6 L666.0 600.7 L666.5 600.7 L667.0 600.5 L667.5 600.3 L668.0 600.1 L668.5 599.8 L669.0 599.5 L669.5 599.1 L670.0 598.6 L670.5 598.0 L671.0 597.4 L671.5 596.7 L672.0 596.0 L672.5 595.1 L673.0 594.1 L673.5 593.0 L674.0 591.7 L674.5 590.5 L675.0 589.3 L675.5 588.1 L676.0 586.9 L676.5 585.7 L677.0 584.5 L677.5 583.4 L678.0 582.3 L678.5 581.3 L679.0 580.3 L679.5 579.5 L680.0 578.6 L680.5 577.8 L681.0 577.0 L681.5 576.4 L682.0 575.8 L682.5 575.4 L683.0 574.9 L683.5 574.5 L684.0 574.2 L684.5 574.0 L685.0 574.1 L685.5 574.6 L686.0 575.6 L686.5 577.2 L687.0 583.5 L687.5 593.2 L688.0 607.2 L688.5 619.6 L689.0 626.9 L689.5 631.9 L690.0 634.0 L690.5 635.2 L691.0 635.8 L691.5 635.4 L692.0 634.1 L692.5 632.2 L693.0 630.3 L693.5 628.7 L694.0 627.0 L694.5 625.3 L695.0 623.5 L695.5 621.7 L696.0 619.9 L696.5 618.1 L697.0 616.4 L697.5 614.6 L698.0 612.8 L698.5 611.1 L699.0 609.3 L699.5 607.6 L700.0 605.9 L700.5 604.2 L701.0 602.5 L701.5 600.8 L702.0 599.2 L702.5 597.6 L703.0 596.1 L703.5 594.6 L704.0 593.0 L704.5 591.5 L705.0 590.0 L705.5 588.9 L706.0 588.2 L706.5 587.6 L707.0 587.1 L707.5 586.7 L708.0 586.5 L708.5 586.4 L709.0 586.3 L709.5 586.3 L710.0 586.2 L710.5 586.2 L711.0 586.2 L711.5 586.2 L712.0 586.2 L712.5 586.3 L713.0 586.6 L713.5 586.9 L714.0 587.3 L714.5 587.8 L715.0 588.7 L715.5 590.2 L716.0 592.1 L716.5 594.3 L717.0 598.1 L717.5 603.5 L718.0 609.3 L718.5 614.5 L719.0 620.0 L719.5 622.5 L720.0 623.5 L720.5 624.3 L721.0 624.9 L721.5 625.2 L722.0 625.3 L722.5 625.3 L723.0 625.3 L723.5 625.2 L724.0 625.2 L724.5 625.1 L725.0 625.0 L725.5 624.9 L726.0 624.8 L726.5 624.7 L727.0 624.5 L727.5 624.2 L728.0 623.9 L728.5 623.4 L729.0 622.9 L729.5 622.3 L730.0 621.2 L730.5 619.4 L731.0 617.0 L731.5 614.3 L732.0 611.3 L732.5 607.4 L733.0 602.9 L733.5 598.3 L734.0 594.1 L734.5 589.6 L735.0 585.5 L735.5 582.3 L736.0 579.8 L736.5 577.7 L737.0 576.3 L737.5 575.6 L738.0 575.2 L738.5 574.8 L739.0 574.5 L739.5 574.4 L740.0 574.4 L740.5 574.5 L741.0 574.6 L741.5 574.8 L742.0 575.0 L742.5 575.2 L743.0 575.4 L743.5 575.4 L744.0 575.5 L744.5 575.6 L745.0 575.6 L745.5 575.7 L746.0 575.7 L746.5 575.7 L747.0 574.9 L747.5 573.2 L748.0 571.2 L748.5 569.2 L749.0 566.7 L749.5 564.0 L750.0 561.7 L750.5 560.1 L751.0 558.8 L751.5 557.7 L752.0 556.7 L752.5 555.9 L753.0 555.3 L753.5 554.8 L754.0 554.5 L754.5 554.1 L755.0 553.8 L755.5 553.6 L756.0 553.4 L756.5 553.4 L757.0 553.4 L757.5 553.5 L758.0 553.6 L758.5 553.9 L759.0 554.1 L759.5 554.5 L760.0 555.3 L760.5 556.3 L761.0 557.3 L761.5 558.2 L762.0 558.8 L762.5 559.4 L763.0 560.0 L763.5 560.4 L764.0 560.5 L764.5 560.1 L765.0 559.5 L765.5 558.7 L766.0 557.8 L766.5 556.7 L767.0 555.4 L767.5 554.0 L768.0 552.8 L768.5 552.0 L769.0 551.4 L769.5 550.9 L770.0 550.7 L770.5 550.8 L771.0 551.3 L771.5 552.2 L772.0 553.2 L772.5 554.9 L773.0 557.2 L773.5 559.4 L774.0 561.6 L774.5 563.9 L775.0 566.2 L775.5 568.4 L776.0 570.3 L776.5 571.9 L777.0 573.4 L777.5 574.8 L778.0 576.0 L778.5 577.1 L779.0 578.1 L779.5 578.9 L780.0 579.7 L780.5 580.5 L781.0 581.3 L781.5 582.3 L782.0 583.3 L782.5 584.5 L783.0 585.7 L783.5 587.0 L784.0 588.5 L784.5 590.5 L785.0 592.6 L785.5 594.6 L786.0 596.3 L786.5 597.4 L787.0 598.4 L787.5 599.2 L788.0 599.7 L788.5 599.7 L789.0 599.0 L789.5 598.0 L790.0 596.8 L790.5 595.0 L791.0 592.5 L791.5 590.0 L792.0 588.0 L792.5 586.8 L793.0 585.7 L793.5 584.9 L794.0 584.3 L794.5 584.2 L795.0 584.5 L795.5 585.0 L796.0 585.8 L796.5 587.3 L797.0 590.2 L797.5 593.1 L798.0 595.3 L798.5 597.4 L799.0 599.3 L799.5 600.7 L800.0 601.3 L800.5 601.7 L801.0 601.9 L801.5 601.5 L802.0 599.9 L802.5 597.7 L803.0 593.7 L803.5 588.3 L804.0 584.2 L804.5 582.0 L805.0 580.1 L805.5 579.0 L806.0 578.6 L806.5 578.4 L807.0 578.3 L807.5 578.3 L808.0 580.1 L808.5 583.5 L809.0 589.5 L809.5 599.1 L810.0 606.9 L810.5 612.9 L811.0 617.5 L811.5 619.3 L812.0 620.3 L812.5 620.9 L813.0 621.1 L813.5 620.9 L814.0 620.5 L814.5 620.0 L815.0 619.3 L815.5 618.6 L816.0 617.8 L816.5 616.9 L817.0 615.9 L817.5 614.7 L818.0 613.4 L818.5 611.9 L819.0 610.4 L819.5 608.6 L820.0 606.4 L820.5 603.8 L821.0 601.2 L821.5 598.8 L822.0 596.9 L822.5 595.1 L823.0 593.4 L823.5 592.2 L824.0 591.6 L824.5 591.3 L825.0 591.0 L825.5 590.9 L826.0 591.3 L826.5 592.4 L827.0 593.8 L827.5 595.3 L828.0 597.6 L828.5 600.2 L829.0 602.4 L829.5 603.8 L830.0 604.7 L830.5 605.5 L831.0 605.8 L831.5 605.4 L832.0 603.9 L832.5 602.0 L833.0 600.5 L833.5 598.8 L834.0 597.2 L834.5 595.9 L835.0 595.2 L835.5 594.9 L836.0 594.6 L836.5 594.4 L837.0 594.2 L837.5 594.1 L838.0 594.0 L838.5 594.0 L839.0 594.0 L839.5 594.0 L840.0 594.0 L840.5 594.0 L841.0 594.0 L841.5 594.0 L842.0 594.0 L842.5 594.0 L843.0 594.0 L843.5 594.0 L844.0 593.8 L844.5 592.3 L845.0 590.0 L845.5 587.5 L846.0 584.6 L846.5 581.3 L847.0 578.8 L847.5 577.6 L848.0 576.7 L848.5 576.1 L849.0 575.7 L849.5 575.7 L850.0 575.8 L850.5 576.1 L851.0 576.3 L851.5 576.6 L852.0 577.0 L852.5 577.6 L853.0 578.3 L853.5 579.0 L854.0 579.7 L854.5 580.4 L855.0 581.0 L855.5 581.5 L856.0 582.0 L856.5 582.5 L857.0 583.0 L857.5 583.5 L858.0 584.0 L858.5 584.5 L859.0 585.0 L859.5 585.6 L860.0 586.1 L860.5 586.3 L861.0 586.4 L861.5 586.5 L862.0 586.6 L862.5 586.7 L863.0 586.8 L863.5 586.9 L864.0 587.1 L864.5 587.2 L865.0 587.3 L865.5 587.4 L866.0 587.5 L866.5 587.7 L867.0 587.8 L867.5 588.1 L868.0 588.4 L868.5 588.8 L869.0 589.3 L869.5 589.7 L870.0 590.1 L870.5 590.6 L871.0 591.2 L871.5 591.8 L872.0 592.5 L872.5 593.1 L873.0 593.5 L873.5 593.7 L874.0 593.6 L874.5 593.1 L875.0 592.4 L875.5 591.6 L876.0 590.6 L876.5 589.2 L877.0 586.9 L877.5 584.3 L878.0 582.0 L878.5 580.6 L879.0 579.4 L879.5 578.4 L880.0 577.8 L880.5 577.6 L881.0 578.1 L881.5 578.9 L882.0 580.0 L882.5 582.2 L883.0 586.2 L883.5 591.2 L884.0 596.6 L884.5 603.6 L885.0 611.2 L885.5 618.2 L886.0 624.9 L886.5 631.2 L887.0 636.6 L887.5 640.5 L888.0 643.6 L888.5 646.8 L889.0 650.9 L889.5 654.7 L890.0 656.6 L890.5 658.0 L891.0 659.0 L891.5 659.5 L892.0 659.8 L892.5 660.0 L893.0 660.2 L893.5 660.2 L894.0 660.2 L894.5 660.0 L895.0 659.8 L895.5 659.5 L896.0 659.2 L896.5 658.8 L897.0 658.4 L897.5 657.8 L898.0 657.0 L898.5 655.8 L899.0 653.8 L899.5 649.8 L900.0 644.7 L900.5 637.2 L901.0 628.7 L901.5 620.3 L902.0 611.5 L902.5 606.2 L903.0 603.0 L903.5 601.0 L904.0 600.8 L904.5 600.8 L905.0 600.8 L905.5 602.3 L906.0 606.4 L906.5 611.4 L907.0 618.1 L907.5 626.0 L908.0 633.3 L908.5 639.8 L909.0 645.4 L909.5 649.7 L910.0 653.2 L910.5 656.2 L911.0 658.9 L911.5 661.5 L912.0 663.9 L912.5 666.1 L913.0 667.9 L913.5 669.4 L914.0 670.8 L914.5 672.0 L915.0 673.0 L915.5 673.6 L916.0 673.8 L916.5 674.0 L917.0 674.1 L917.5 673.9 L918.0 672.2 L918.5 669.5 L919.0 663.0 L919.5 653.6 L920.0 641.9 L920.5 630.8 L921.0 627.0 L921.5 625.0 L922.0 624.4 L922.5 624.3 L923.0 624.2 L923.5 624.2 L924.0 624.4 L924.5 625.1 L925.0 626.0 L925.5 627.1 L926.0 628.3 L926.5 629.4 L927.0 630.7 L927.5 632.2 L928.0 633.9 L928.5 635.6 L929.0 637.6 L929.5 639.8 L930.0 642.2 L930.5 644.9 L931.0 648.0 L931.5 652.2 L932.0 656.6 L932.5 659.7 L933.0 661.9 L933.5 663.7 L934.0 665.1 L934.5 665.6 L935.0 665.4 L935.5 664.7 L936.0 663.6 L936.5 660.3 L937.0 655.3 L937.5 648.2 L938.0 623.6 L938.5 607.3 L939.0 600.5 L939.5 597.9 L940.0 596.5 L940.5 595.7 L941.0 595.4 L941.5 595.4 L942.0 595.6 L942.5 595.7 L943.0 595.9 L943.5 596.1 L944.0 596.3 L944.5 596.6 L945.0 596.9 L945.5 597.2 L946.0 597.5 L946.5 597.8 L947.0 597.9 L947.5 597.8 L948.0 597.2 L948.5 596.3 L949.0 595.2 L949.5 594.1 L950.0 593.3 L950.5 592.3 L951.0 591.4 L951.5 590.6 L952.0 590.1 L952.5 590.0 L953.0 590.0 L953.5 590.1 L954.0 590.1 L954.5 590.2 L955.0 590.4 L955.5 590.7 L956.0 591.1 L956.5 591.6 L957.0 592.2 L957.5 592.6 L958.0 592.8 L958.5 592.8 L959.0 592.8 L959.5 592.7 L960.0 592.6 L960.5 592.4 L961.0 592.3 L961.5 592.1 L962.0 591.7 L962.5 591.1 L963.0 590.3 L963.5 589.3 L964.0 588.2 L964.5 587.1 L965.0 586.1 L965.5 585.0 L966.0 583.8 L966.5 582.6 L967.0 581.4 L967.5 580.2 L968.0 579.2 L968.5 578.2 L969.0 577.3 L969.5 576.3 L970.0 575.5 L970.5 574.9 L971.0 574.7 L971.5 574.8 L972.0 574.8 L972.5 574.9 L973.0 575.0 L973.5 575.4 L974.0 576.3 L974.5 577.6 L975.0 578.9 L975.5 580.2 L976.0 581.6 L976.5 583.1 L977.0 584.7 L977.5 586.3 L978.0 587.9 L978.5 589.5 L979.0 591.1 L979.5 592.8 L980.0 594.6 L980.5 596.5 L981.0 598.9 L981.5 601.3 L982.0 603.2 L982.5 604.3 L983.0 605.1 L983.5 605.7 L984.0 605.9 L984.5 605.4 L985.0 604.2 L985.5 602.6 L986.0 600.4 L986.5 596.8 L987.0 592.7 L987.5 589.3 L988.0 585.9 L988.5 583.2 L989.0 582.1 L989.5 581.3 L990.0 581.0 L990.5 581.6 L991.0 583.4 L991.5 586.6 L992.0 593.8 L992.5 601.8 L993.0 611.0 L993.5 619.6 L994.0 624.1 L994.5 627.2 L995.0 629.4 L995.5 630.1 L996.0 629.9 L996.5 629.5 L997.0 629.0 L997.5 628.4 L998.0 627.7 L998.5 626.7 L999.0 625.6 L999.5 624.3 L1000.0 623.0 L1000.5 621.6 L1001.0 620.1 L1001.5 618.4 L1002.0 616.5 L1002.5 614.6 L1003.0 612.6 L1003.5 610.4 L1004.0 607.9 L1004.5 605.4 L1005.0 603.1 L1005.5 601.5 L1006.0 599.9 L1006.5 598.5 L1007.0 597.6 L1007.5 597.4 L1008.0 597.4 L1008.5 597.4 L1009.0 597.4 L1009.5 597.5 L1010.0 598.2 L1010.5 599.5 L1011.0 601.1 L1011.5 602.9 L1012.0 604.7 L1012.5 607.0 L1013.0 609.6 L1013.5 612.5 L1014.0 615.7 L1014.5 619.4 L1015.0 623.6 L1015.5 628.2 L1016.0 634.2 L1016.5 640.0 L1017.0 643.5 L1017.5 647.0 L1018.0 656.5 L1018.5 663.0 L1019.0 666.5 L1019.5 668.2 L1020.0 668.7 L1020.5 669.0 L1021.0 668.9 L1021.5 667.8 L1022.0 665.7 L1022.5 662.9 L1023.0 658.4 L1023.5 653.6 L1024.0 649.0 L1024.5 644.0 L1025.0 638.8 L1025.5 633.5 L1026.0 628.6 L1026.5 623.7 L1027.0 619.0 L1027.5 614.9 L1028.0 611.4 L1028.5 608.1 L1029.0 605.6 L1029.5 604.4 L1030.0 603.6 L1030.5 603.0 L1031.0 602.5 L1031.5 602.2 L1032.0 602.2 L1032.5 602.3 L1033.0 602.5 L1033.5 602.7 L1034.0 603.1 L1034.5 603.4 L1035.0 603.7 L1035.5 604.0 L1036.0 604.4 L1036.5 604.9 L1037.0 605.3 L1037.5 605.5 L1038.0 605.5 L1038.5 605.0 L1039.0 604.2 L1039.5 603.0 L1040.0 601.4 L1040.5 597.4 L1041.0 592.1 L1041.5 587.0 L1042.0 581.9 L1042.5 577.1 L1043.0 574.6 L1043.5 573.3 L1044.0 572.4 L1044.5 572.0 L1045.0 572.2 L1045.5 572.5 L1046.0 573.1 L1046.5 573.9 L1047.0 575.6 L1047.5 578.0 L1048.0 580.5 L1048.5 583.2 L1049.0 586.3 L1049.5 589.8 L1050.0 593.5 L1050.5 597.3 L1051.0 601.4 L1051.5 605.8 L1052.0 610.6 L1052.5 615.6 L1053.0 621.1 L1053.5 627.6 L1054.0 633.8 L1054.5 638.9 L1055.0 643.3 L1055.5 646.5 L1056.0 648.2 L1056.5 649.4 L1057.0 649.4 L1057.5 648.6 L1058.0 647.0 L1058.5 641.6 L1059.0 631.6 L1059.5 622.0 L1060.0 612.2 L1060.5 604.1 L1061.0 596.8 L1061.5 590.6 L1062.0 586.2 L1062.5 583.5 L1063.0 581.2 L1063.5 579.4 L1064.0 578.0 L1064.5 576.7 L1065.0 575.7 L1065.5 574.8 L1066.0 574.0 L1066.5 573.2 L1067.0 572.6 L1067.5 572.0 L1068.0 571.4 L1068.5 570.9 L1069.0 570.4 L1069.5 570.0 L1070.0 569.5 L1070.5 569.1 L1071.0 568.8 L1071.5 568.5 L1072.0 568.2 L1072.5 568.0 L1073.0 567.7 L1073.5 567.5 L1074.0 567.3 L1074.5 567.3 L1075.0 567.3 L1075.5 567.5 L1076.0 568.0 L1076.5 568.6 L1077.0 569.4 L1077.5 571.3 L1078.0 574.5 L1078.5 578.1 L1079.0 582.1 L1079.5 587.1 L1080.0 591.6 L1080.5 594.1 L1081.0 595.8 L1081.5 596.8 L1082.0 596.6 L1082.5 595.4 L1083.0 593.5 L1083.5 591.0 L1084.0 586.9 L1084.5 582.2 L1085.0 578.4 L1085.5 575.3 L1086.0 572.4 L1086.5 569.8 L1087.0 567.4 L1087.5 565.3 L1088.0 563.4 L1088.5 561.7 L1089.0 560.1 L1089.5 558.8 L1090.0 557.9 L1090.5 557.2 L1091.0 556.5 L1091.5 555.9 L1092.0 555.4 L1092.5 555.1 L1093.0 555.1 L1093.5 555.2 L1094.0 555.4 L1094.5 555.7 L1095.0 556.2 L1095.5 557.3 L1096.0 559.6 L1096.5 562.4 L1097.0 565.5 L1097.5 569.8 L1098.0 574.0 L1098.5 576.8 L1099.0 578.4 L1099.5 579.4 L1100.0 579.1 L1100.5 578.0 L1101.0 576.5 L1101.5 574.4 L1102.0 571.4 L1102.5 568.3 L1103.0 565.6 L1103.5 563.4 L1104.0 561.3 L1104.5 559.3 L1105.0 557.5 L1105.5 556.0 L1106.0 554.7 L1106.5 553.5 L1107.0 552.4 L1107.5 551.5 L1108.0 550.7 L1108.5 550.1 L1109.0 549.6 L1109.5 549.2 L1110.0 548.8 L1110.5 548.5 L1111.0 548.3 L1111.5 548.3 L1112.0 548.3 L1112.5 548.5 L1113.0 548.6 L1113.5 548.9 L1114.0 549.2 L1114.5 549.5 L1115.0 549.8 L1115.5 550.4 L1116.0 551.0 L1116.5 551.8 L1117.0 552.6 L1117.5 553.6 L1118.0 554.6 L1118.5 555.9 L1119.0 557.3 L1119.5 558.9 L1120.0 560.6 L1120.5 562.3 L1121.0 564.4 L1121.5 566.7 L1122.0 569.0 L1122.5 571.0 L1123.0 572.6 L1123.5 574.0 L1124.0 575.3 L1124.5 576.3 L1125.0 577.0 L1125.5 577.5 L1126.0 578.0 L1126.5 578.4 L1127.0 578.8 L1127.5 579.2 L1128.0 579.8 L1128.5 580.6 L1129.0 581.6 L1129.5 582.7 L1130.0 584.0 L1130.5 585.5 L1131.0 587.4 L1131.5 590.0 L1132.0 592.9 L1132.5 595.9 L1133.0 598.8 L1133.5 601.9 L1134.0 605.1 L1134.5 607.9 L1135.0 610.3 L1135.5 612.3 L1136.0 614.2 L1136.5 615.8 L1137.0 617.2 L1137.5 618.3 L1138.0 619.2 L1138.5 620.0 L1139.0 620.6 L1139.5 621.1 L1140.0 621.4 L1140.5 621.7 L1141.0 621.9 L1141.5 622.0 L1142.0 622.2 L1142.5 622.2 L1143.0 622.3 L1143.5 622.0 L1144.0 621.2 L1144.5 620.2 L1145.0 618.9 L1145.5 617.4 L1146.0 614.8 L1146.5 611.8 L1147.0 609.6 L1147.5 608.5 L1148.0 607.6 L1148.5 607.1 L1149.0 607.2 L1149.5 608.4 L1150.0 610.8 L1150.5 623.2 L1151.0 637.4 L1151.5 648.9 L1152.0 663.6 L1152.5 673.3 L1153.0 679.9 L1153.5 684.8 L1154.0 687.4 L1154.5 688.4 L1155.0 686.7 L1155.5 683.7 L1156.0 679.0 L1156.5 673.9 L1157.0 669.2 L1157.5 664.4 L1158.0 660.1 L1158.5 656.7 L1159.0 654.0 L1159.5 651.5 L1160.0 648.5 L1160.5 644.0 L1161.0 637.6 L1161.5 632.6 L1162.0 628.2 L1162.5 624.5 L1163.0 622.0 L1163.5 620.1 L1164.0 618.5 L1164.5 617.3 L1165.0 616.6 L1165.5 616.2 L1166.0 615.9 L1166.5 615.7 L1167.0 615.5 L1167.5 615.5 L1168.0 615.7 L1168.5 616.1 L1169.0 616.6 L1169.5 617.3 L1170.0 618.0 L1170.5 618.8 L1171.0 620.0 L1171.5 621.5 L1172.0 623.2 L1172.5 625.0 L1173.0 626.8 L1173.5 628.8 L1174.0 631.1 L1174.5 633.5 L1175.0 636.1 L1175.5 638.5 L1176.0 641.3 L1176.5 644.2 L1177.0 646.4 L1177.5 647.5 L1178.0 648.4 L1178.5 649.1 L1179.0 649.7 L1179.5 650.1 L1180.0 650.3 L1180.5 650.5 L1181.0 650.7 L1181.5 650.8 L1182.0 650.9 L1182.5 651.0 L1183.0 651.0 L1183.5 651.0 L1184.0 651.0 L1184.5 650.9 L1185.0 650.7 L1185.5 650.6 L1186.0 650.4 L1186.5 650.2 L1187.0 649.8 L1187.5 649.2 L1188.0 648.3 L1188.5 647.2 L1189.0 645.5 L1189.5 642.5 L1190.0 639.0 L1190.5 635.8 L1191.0 632.7 L1191.5 629.6 L1192.0 626.8 L1192.5 624.3 L1193.0 621.8 L1193.5 619.6 L1194.0 617.7 L1194.5 616.5 L1195.0 615.7 L1195.5 614.9 L1196.0 614.4 L1196.5 614.1 L1197.0 614.2 L1197.5 614.6 L1198.0 615.1 L1198.5 615.8 L1199.0 616.7 L1199.5 618.1 L1200.0 620.0 L1200.5 621.9 L1201.0 623.5 L1201.5 624.6 L1202.0 625.7 L1202.5 626.6 L1203.0 627.2 L1203.5 627.3 L1204.0 625.3 L1204.5 622.0 L1205.0 616.3 L1205.5 608.0 L1206.0 602.3 L1206.5 598.9 L1207.0 596.3 L1207.5 594.6 L1208.0 593.6 L1208.5 592.9 L1209.0 592.4 L1209.5 592.3 L1210.0 592.7 L1210.5 593.3 L1211.0 594.0 L1211.5 594.7 L1212.0 595.3 L1212.5 595.9 L1213.0 596.6 L1213.5 597.3 L1214.0 597.8 L1214.5 598.3 L1215.0 598.5 L1215.5 598.5 L1216.0 598.4 L1216.5 598.2 L1217.0 597.9 L1217.5 597.5 L1218.0 597.2 L1218.5 596.9 L1219.0 596.7 L1219.5 596.4 L1220.0 596.1 L1220.5 595.9 L1221.0 595.7 L1221.5 595.7 L1222.0 595.9 L1222.5 596.5 L1223.0 597.3 L1223.5 598.2 L1224.0 599.2 L1224.5 600.5 L1225.0 602.0 L1225.5 603.1 L1226.0 603.7 L1226.5 603.9 L1227.0 604.1 L1227.5 604.3 L1228.0 604.4 L1228.5 604.5 L1229.0 604.5 L1229.5 604.3 L1230.0 604.1 L1230.5 603.8 L1231.0 603.4 L1231.5 603.1 L1232.0 602.9 L1232.5 602.6 L1233.0 602.4 L1233.5 602.2 L1234.0 602.0 L1234.5 601.9 L1235.0 602.1 L1235.5 602.8 L1236.0 604.1 L1236.5 605.8 L1237.0 610.0 L1237.5 615.6 L1238.0 620.0 L1238.5 624.0 L1239.0 627.5 L1239.5 630.1 L1240.0 632.0 L1240.5 633.7 L1241.0 635.1 L1241.5 636.4 L1242.0 637.6 L1242.5 638.8 L1243.0 639.9 L1243.5 640.9 L1244.0 641.9 L1244.5 642.8 L1245.0 643.7 L1245.5 644.7 L1246.0 645.6 L1246.5 646.7 L1247.0 648.2 L1247.5 650.3 L1248.0 652.7 L1248.5 654.9 L1249.0 657.0 L1249.5 659.2 L1250.0 661.3 L1250.5 663.0 L1251.0 664.2 L1251.5 665.3 L1252.0 665.9 L1252.5 664.9 L1253.0 662.0 L1253.5 658.2 L1254.0 653.9 L1254.5 649.5 L1255.0 632.1 L1255.5 621.7 L1256.0 617.3 L1256.5 615.2 L1257.0 613.8 L1257.5 613.3 L1258.0 613.3 L1258.5 613.5 L1259.0 613.7 L1259.5 614.0 L1260.0 614.2 L1260.5 614.5 L1261.0 614.8 L1261.5 615.1 L1262.0 615.5 L1262.5 615.8 L1263.0 616.2 L1263.5 616.6 L1264.0 616.9 L1264.5 617.3 L1265.0 617.7 L1265.5 618.2 L1266.0 618.6 L1266.5 619.1 L1267.0 619.5 L1267.5 619.9 L1268.0 620.3 L1268.5 620.5 L1269.0 620.8 L1269.5 621.0 L1270.0 621.2 L1270.5 621.3 L1271.0 621.4 L1271.5 621.2 L1272.0 620.3 L1272.5 618.9 L1273.0 617.3 L1273.5 615.5 L1274.0 612.7 L1274.5 609.3 L1275.0 606.1 L1275.5 603.8 L1276.0 602.3 L1276.5 600.9 L1277.0 599.6 L1277.5 598.5 L1278.0 597.4 L1278.5 596.4 L1279.0 595.4 L1279.5 594.5 L1280.0 593.6 L1280.5 592.9 L1281.0 592.4 L1281.5 592.1 L1282.0 591.9 L1282.5 591.8 L1283.0 591.7 L1283.5 591.9 L1284.0 592.8 L1284.5 594.2 L1285.0 596.1 L1285.5 600.5 L1286.0 606.5 L1286.5 612.0 L1287.0 616.3 L1287.5 620.6 L1288.0 624.5 L1288.5 627.9 L1289.0 630.6 L1289.5 633.0 L1290.0 635.1 L1290.5 637.0 L1291.0 638.6 L1291.5 640.0 L1292.0 641.4 L1292.5 642.7 L1293.0 643.7 L1293.5 644.4 L1294.0 644.5 L1294.5 644.3 L1295.0 644.1 L1295.5 643.6 L1296.0 641.7 L1296.5 637.7 L1297.0 632.5 L1297.5 624.7 L1298.0 617.9 L1298.5 613.4 L1299.0 609.7 L1299.5 607.9 L1300.0 606.9 L1300.5 606.2 L1301.0 605.9 L1301.5 606.3 L1302.0 607.6 L1302.5 609.5 L1303.0 611.6 L1303.5 614.5 L1304.0 617.9 L1304.5 620.9 L1305.0 623.8 L1305.5 626.6 L1306.0 628.3 L1306.5 628.3 L1307.0 628.1 L1307.5 627.6 L1308.0 624.7 L1308.5 618.8 L1309.0 612.8 L1309.5 608.0 L1310.0 603.1 L1310.5 599.2 L1311.0 596.9 L1311.5 595.2 L1312.0 593.9 L1312.5 593.3 L1313.0 593.1 L1313.5 592.9 L1314.0 592.9 L1314.5 593.3 L1315.0 595.0 L1315.5 597.3 L1316.0 599.6 L1316.5 602.3 L1317.0 605.5 L1317.5 608.8 L1318.0 612.0 L1318.5 614.7 L1319.0 617.4 L1319.5 620.0 L1320.0 622.4 L1320.5 624.5 L1321.0 626.2 L1321.5 627.7 L1322.0 629.1 L1322.5 630.4 L1323.0 631.5 L1323.5 632.5 L1324.0 633.2 L1324.5 633.6 L1325.0 634.0 L1325.5 634.4 L1326.0 634.7 L1326.5 634.9 L1327.0 635.1 L1327.5 635.2 L1328.0 635.2 L1328.5 635.2 L1329.0 635.2 L1329.5 635.2 L1330.0 635.2 L1330.5 635.2 L1331.0 635.2 L1331.5 635.1 L1332.0 634.7 L1332.5 634.0 L1333.0 633.1 L1333.5 631.6 L1334.0 627.7 L1334.5 624.9 L1335.0 623.7 L1335.5 622.8 L1336.0 622.1 L1336.5 621.7 L1337.0 621.5 L1337.5 621.3 L1338.0 621.2 L1338.5 621.1 L1339.0 621.0 L1339.5 620.9 L1340.0 620.8 L1340.5 620.8 L1341.0 620.7 L1341.5 620.7 L1342.0 620.6 L1342.5 620.6 L1343.0 620.6 L1343.5 620.5 L1344.0 620.3 L1344.5 619.2 L1345.0 617.5 L1345.5 615.5 L1346.0 611.7 L1346.5 607.3 L1347.0 604.8 L1347.5 603.2 L1348.0 602.0 L1348.5 601.1 L1349.0 600.7 L1349.5 600.4 L1350.0 600.2 L1350.5 600.0 L1351.0 599.9 L1351.5 599.7 L1352.0 599.7 L1352.5 599.6 L1353.0 599.5 L1353.5 599.5 L1354.0 599.4 L1354.5 599.4 L1355.0 599.3 L1355.5 599.3 L1356.0 599.3 L1356.5 599.3 L1357.0 599.3 L1357.5 599.4 L1358.0 599.5 L1358.5 599.6 L1359.0 599.8 L1359.5 600.0 L1360.0 600.2 L1360.5 600.6 L1361.0 601.1 L1361.5 601.8 L1362.0 602.5 L1362.5 603.2 L1363.0 604.1 L1363.5 605.1 L1364.0 606.2 L1364.5 607.3 L1365.0 608.2 L1365.5 609.2 L1366.0 610.2 L1366.5 611.0 L1367.0 611.5 L1367.5 611.3 L1368.0 610.7 L1368.5 609.7 L1369.0 608.0 L1369.5 603.5 L1370.0 598.7 L1370.5 594.8 L1371.0 591.0 L1371.5 588.3 L1372.0 587.1 L1372.5 586.2 L1373.0 585.4 L1373.5 585.0 L1374.0 584.9 L1374.5 585.0 L1375.0 585.2 L1375.5 585.5 L1376.0 585.9 L1376.5 586.3 L1377.0 587.1 L1377.5 588.2 L1378.0 589.4 L1378.5 590.8 L1379.0 592.1 L1379.5 593.3 L1380.0 594.6 L1380.5 596.0 L1381.0 597.4 L1381.5 598.8 L1382.0 600.2 L1382.5 601.6 L1383.0 603.1 L1383.5 604.5 L1384.0 606.0 L1384.5 607.6 L1385.0 609.1 L1385.5 610.6 L1386.0 612.1 L1386.5 613.6 L1387.0 615.2 L1387.5 616.7 L1388.0 618.2 L1388.5 619.7 L1389.0 621.2 L1389.5 622.6 L1390.0 623.9 L1390.5 625.1 L1391.0 626.2 L1391.5 627.4 L1392.0 628.6 L1392.5 629.9 L1393.0 631.4 L1393.5 633.2 L1394.0 635.2 L1394.5 637.3 L1395.0 639.4 L1395.5 641.6 L1396.0 643.8 L1396.5 646.3 L1397.0 650.2 L1397.5 653.6 L1398.0 654.1 L1398.5 654.3 L1399.0 654.1 L1399.5 652.8 L1400.0 651.1 L1400.5 649.2 L1401.0 646.4 L1401.5 640.8 L1402.0 634.2 L1402.5 629.6 L1403.0 625.8 L1403.5 622.6 L1404.0 620.1 L1404.5 617.9 L1405.0 616.1 L1405.5 614.5 L1406.0 613.1 L1406.5 612.1 L1407.0 611.2 L1407.5 610.3 L1408.0 609.6 L1408.5 609.1 L1409.0 608.9 L1409.5 608.8 L1410.0 608.7 L1410.5 608.6 L1411.0 608.6 L1411.5 608.8 L1412.0 609.6 L1412.5 610.7 L1413.0 612.0 L1413.5 613.3 L1414.0 614.9 L1414.5 616.7 L1415.0 618.0 L1415.5 618.6 L1416.0 619.2 L1416.5 619.6 L1417.0 619.9 L1417.5 619.9 L1418.0 619.0 L1418.5 617.4 L1419.0 615.9 L1419.5 614.7 L1420.0 613.5 L1420.5 612.5 L1421.0 611.7 L1421.5 611.4 L1422.0 611.1 L1422.5 610.9 L1423.0 610.8 L1423.5 610.7 L1424.0 610.6 L1424.5 610.7 L1425.0 610.9 L1425.5 611.2 L1426.0 611.6 L1426.5 611.9 L1427.0 612.2 L1427.5 612.3 L1428.0 612.3 L1428.5 612.3 L1429.0 612.2 L1429.5 612.1 L1430.0 612.0 L1430.5 611.4 L1431.0 609.6 L1431.5 607.5 L1432.0 605.4 L1432.5 602.8 L1433.0 600.3 L1433.5 598.7 L1434.0 597.8 L1434.5 597.0 L1435.0 596.6 L1435.5 596.7 L1436.0 597.0 L1436.5 597.5 L1437.0 598.1 L1437.5 599.3 L1438.0 600.9 L1438.5 602.7 L1439.0 604.4 L1439.5 605.8 L1440.0 607.0 L1440.5 608.0 L1441.0 609.1 L1441.5 610.0 L1442.0 611.0 L1442.5 611.8 L1443.0 612.7 L1443.5 613.4 L1444.0 614.1 L1444.5 614.8 L1445.0 615.5 L1445.5 616.2 L1446.0 617.1 L1446.5 618.1 L1447.0 619.2 L1447.5 620.5 L1448.0 621.9 L1448.5 623.5 L1449.0 625.3 L1449.5 627.7 L1450.0 630.4 L1450.5 633.1 L1451.0 635.8 L1451.5 638.7 L1452.0 641.4 L1452.5 642.9 L1453.0 643.8 L1453.5 644.4 L1454.0 644.4 L1454.5 643.3 L1455.0 641.5 L1455.5 639.3 L1456.0 636.0 L1456.5 631.4 L1457.0 626.0 L1457.5 619.8 L1458.0 612.0 L1458.5 604.1 L1459.0 595.8 L1459.5 591.6 L1460.0 590.7 L1460.0 590.7 L1460.0 646.7 L93.0 646.7 Z" fill="#54a895" fill-opacity="0.7" clip-path="url(#cpos)"/>
  <path d="M93.0 600.9 L93.5 611.3 L94.0 620.0 L94.5 626.2 L95.0 631.3 L95.5 635.3 L96.0 638.0 L96.5 639.6 L97.0 640.9 L97.5 642.0 L98.0 642.8 L98.5 643.2 L99.0 643.4 L99.5 643.6 L100.0 643.8 L100.5 643.9 L101.0 644.0 L101.5 644.1 L102.0 644.1 L102.5 644.1 L103.0 644.1 L103.5 644.1 L104.0 644.1 L104.5 644.1 L105.0 644.1 L105.5 644.1 L106.0 644.1 L106.5 644.0 L107.0 643.6 L107.5 643.0 L108.0 642.3 L108.5 641.8 L109.0 641.4 L109.5 641.0 L110.0 640.7 L110.5 640.4 L111.0 640.2 L111.5 640.2 L112.0 640.3 L112.5 640.5 L113.0 640.8 L113.5 641.0 L114.0 641.3 L114.5 641.8 L115.0 642.5 L115.5 643.1 L116.0 643.7 L116.5 644.2 L117.0 644.7 L117.5 645.1 L118.0 645.5 L118.5 645.7 L119.0 645.8 L119.5 645.4 L120.0 644.5 L120.5 643.5 L121.0 641.9 L121.5 639.2 L122.0 635.8 L122.5 632.2 L123.0 628.8 L123.5 625.7 L124.0 622.5 L124.5 619.3 L125.0 616.3 L125.5 613.6 L126.0 611.3 L126.5 609.0 L127.0 606.8 L127.5 605.1 L128.0 603.8 L128.5 603.1 L129.0 602.6 L129.5 602.2 L130.0 602.1 L130.5 602.6 L131.0 603.6 L131.5 604.9 L132.0 606.8 L132.5 609.7 L133.0 612.8 L133.5 615.7 L134.0 618.7 L134.5 621.4 L135.0 623.0 L135.5 623.6 L136.0 624.0 L136.5 624.0 L137.0 622.3 L137.5 619.7 L138.0 615.9 L138.5 610.8 L139.0 605.9 L139.5 602.4 L140.0 599.2 L140.5 596.7 L141.0 595.4 L141.5 594.7 L142.0 594.2 L142.5 594.2 L143.0 594.8 L143.5 595.8 L144.0 596.8 L144.5 598.0 L145.0 599.6 L145.5 601.2 L146.0 602.7 L146.5 604.1 L147.0 605.4 L147.5 606.8 L148.0 608.2 L148.5 609.5 L149.0 610.9 L149.5 612.3 L150.0 613.9 L150.5 615.5 L151.0 617.2 L151.5 618.8 L152.0 620.3 L152.5 621.6 L153.0 622.6 L153.5 623.6 L154.0 624.4 L154.5 624.6 L155.0 623.6 L155.5 621.3 L156.0 617.4 L156.5 607.7 L157.0 599.1 L157.5 594.0 L158.0 590.5 L158.5 589.1 L159.0 588.1 L159.5 587.4 L160.0 587.0 L160.5 586.9 L161.0 586.9 L161.5 586.9 L162.0 586.9 L162.5 587.0 L163.0 587.0 L163.5 587.0 L164.0 587.1 L164.5 587.2 L165.0 587.5 L165.5 587.8 L166.0 588.1 L166.5 588.5 L167.0 589.0 L167.5 589.5 L168.0 590.2 L168.5 591.1 L169.0 592.1 L169.5 593.0 L170.0 593.9 L170.5 595.0 L171.0 596.1 L171.5 597.0 L172.0 597.5 L172.5 597.5 L173.0 597.2 L173.5 596.6 L174.0 596.0 L174.5 595.3 L175.0 594.7 L175.5 593.9 L176.0 593.0 L176.5 592.2 L177.0 591.5 L177.5 591.2 L178.0 590.9 L178.5 590.7 L179.0 590.5 L179.5 590.4 L180.0 590.7 L180.5 591.5 L181.0 592.4 L181.5 593.6 L182.0 595.6 L182.5 597.9 L183.0 600.1 L183.5 601.9 L184.0 603.5 L184.5 605.1 L185.0 606.5 L185.5 608.0 L186.0 609.4 L186.5 610.8 L187.0 612.2 L187.5 613.7 L188.0 615.2 L188.5 616.5 L189.0 617.6 L189.5 618.5 L190.0 619.2 L190.5 619.8 L191.0 619.9 L191.5 619.3 L192.0 618.3 L192.5 617.1 L193.0 615.3 L193.5 612.7 L194.0 610.2 L194.5 608.5 L195.0 606.9 L195.5 605.7 L196.0 605.1 L196.5 605.0 L197.0 604.8 L197.5 604.9 L198.0 605.8 L198.5 607.0 L199.0 608.2 L199.5 609.8 L200.0 611.5 L200.5 613.2 L201.0 614.5 L201.5 615.5 L202.0 616.5 L202.5 617.2 L203.0 617.5 L203.5 617.4 L204.0 617.2 L204.5 616.8 L205.0 616.4 L205.5 615.9 L206.0 615.4 L206.5 614.7 L207.0 614.0 L207.5 613.1 L208.0 612.3 L208.5 611.3 L209.0 610.3 L209.5 609.1 L210.0 607.8 L210.5 606.4 L211.0 604.8 L211.5 603.0 L212.0 600.8 L212.5 598.6 L213.0 597.2 L213.5 595.9 L214.0 594.9 L214.5 594.5 L215.0 594.6 L215.5 594.7 L216.0 594.9 L216.5 595.2 L217.0 595.8 L217.5 596.5 L218.0 597.4 L218.5 598.1 L219.0 598.6 L219.5 599.2 L220.0 599.6 L220.5 600.0 L221.0 600.1 L221.5 599.9 L222.0 599.3 L222.5 598.4 L223.0 595.2 L223.5 590.8 L224.0 587.4 L224.5 584.6 L225.0 583.5 L225.5 582.7 L226.0 582.1 L226.5 581.7 L227.0 581.5 L227.5 581.5 L228.0 581.5 L228.5 581.5 L229.0 581.5 L229.5 581.5 L230.0 581.5 L230.5 581.5 L231.0 581.5 L231.5 581.7 L232.0 582.0 L232.5 582.4 L233.0 582.9 L233.5 583.4 L234.0 584.0 L234.5 584.9 L235.0 586.1 L235.5 587.6 L236.0 589.3 L236.5 591.1 L237.0 593.4 L237.5 595.8 L238.0 597.8 L238.5 598.9 L239.0 599.8 L239.5 600.1 L240.0 599.2 L240.5 597.6 L241.0 595.9 L241.5 593.4 L242.0 590.9 L242.5 589.0 L243.0 587.7 L243.5 586.5 L244.0 585.7 L244.5 585.4 L245.0 585.4 L245.5 585.5 L246.0 585.7 L246.5 585.9 L247.0 586.3 L247.5 587.2 L248.0 588.3 L248.5 589.3 L249.0 590.1 L249.5 590.6 L250.0 591.1 L250.5 591.5 L251.0 591.6 L251.5 591.4 L252.0 591.0 L252.5 590.4 L253.0 589.7 L253.5 589.1 L254.0 588.3 L254.5 587.4 L255.0 586.5 L255.5 585.7 L256.0 585.4 L256.5 585.2 L257.0 585.1 L257.5 585.1 L258.0 585.0 L258.5 585.3 L259.0 586.3 L259.5 587.6 L260.0 589.5 L260.5 593.2 L261.0 596.4 L261.5 597.9 L262.0 599.2 L262.5 600.0 L263.0 600.1 L263.5 600.1 L264.0 600.1 L264.5 600.1 L265.0 600.1 L265.5 600.1 L266.0 600.0 L266.5 599.8 L267.0 599.4 L267.5 599.1 L268.0 598.7 L268.5 598.3 L269.0 597.9 L269.5 597.6 L270.0 597.3 L270.5 597.0 L271.0 596.6 L271.5 596.3 L272.0 596.0 L272.5 595.7 L273.0 595.4 L273.5 595.1 L274.0 594.9 L274.5 594.7 L275.0 594.5 L275.5 594.3 L276.0 594.2 L276.5 594.2 L277.0 594.4 L277.5 594.9 L278.0 595.6 L278.5 596.2 L279.0 596.9 L279.5 597.6 L280.0 598.5 L280.5 599.4 L281.0 600.4 L281.5 601.3 L282.0 602.2 L282.5 603.0 L283.0 603.9 L283.5 604.7 L284.0 605.6 L284.5 606.3 L285.0 607.0 L285.5 607.6 L286.0 608.1 L286.5 608.5 L287.0 608.9 L287.5 609.2 L288.0 609.4 L288.5 609.3 L289.0 608.6 L289.5 607.6 L290.0 606.6 L290.5 605.0 L291.0 603.3 L291.5 601.9 L292.0 601.0 L292.5 600.2 L293.0 599.5 L293.5 599.3 L294.0 599.3 L294.5 599.4 L295.0 599.7 L295.5 599.9 L296.0 600.2 L296.5 600.6 L297.0 601.1 L297.5 601.7 L298.0 602.2 L298.5 602.6 L299.0 602.9 L299.5 603.1 L300.0 603.2 L300.5 603.3 L301.0 603.4 L301.5 603.4 L302.0 603.5 L302.5 603.5 L303.0 603.4 L303.5 603.2 L304.0 602.9 L304.5 602.5 L305.0 602.1 L305.5 601.6 L306.0 601.2 L306.5 600.8 L307.0 600.4 L307.5 599.9 L308.0 599.4 L308.5 599.0 L309.0 598.6 L309.5 598.3 L310.0 598.1 L310.5 597.8 L311.0 597.6 L311.5 597.4 L312.0 597.3 L312.5 597.2 L313.0 597.3 L313.5 597.5 L314.0 598.0 L314.5 598.6 L315.0 599.4 L315.5 601.7 L316.0 605.3 L316.5 608.8 L317.0 611.8 L317.5 615.1 L318.0 617.6 L318.5 618.3 L319.0 618.6 L319.5 618.7 L320.0 617.3 L320.5 614.1 L321.0 608.6 L321.5 599.9 L322.0 594.5 L322.5 590.6 L323.0 588.8 L323.5 587.9 L324.0 587.2 L324.5 586.8 L325.0 586.6 L325.5 586.5 L326.0 586.5 L326.5 586.4 L327.0 586.4 L327.5 586.4 L328.0 586.4 L328.5 586.4 L329.0 586.6 L329.5 586.8 L330.0 587.1 L330.5 587.5 L331.0 587.9 L331.5 588.5 L332.0 589.5 L332.5 590.8 L333.0 592.4 L333.5 595.4 L334.0 600.3 L334.5 607.0 L335.0 616.4 L335.5 622.3 L336.0 626.6 L336.5 629.9 L337.0 632.7 L337.5 635.0 L338.0 637.0 L338.5 638.7 L339.0 640.0 L339.5 641.1 L340.0 642.0 L340.5 642.8 L341.0 643.5 L341.5 644.1 L342.0 644.6 L342.5 645.0 L343.0 645.4 L343.5 645.7 L344.0 646.0 L344.5 646.2 L345.0 646.3 L345.5 646.4 L346.0 646.5 L346.5 646.5 L347.0 646.6 L347.5 646.6 L348.0 646.6 L348.5 646.6 L349.0 646.6 L349.5 646.4 L350.0 646.2 L350.5 645.9 L351.0 645.5 L351.5 645.2 L352.0 644.8 L352.5 644.4 L353.0 643.8 L353.5 643.2 L354.0 642.5 L354.5 641.8 L355.0 641.0 L355.5 640.2 L356.0 639.3 L356.5 638.4 L357.0 637.3 L357.5 636.1 L358.0 634.8 L358.5 633.4 L359.0 631.7 L359.5 629.6 L360.0 627.2 L360.5 624.6 L361.0 621.8 L361.5 618.9 L362.0 616.0 L362.5 612.8 L363.0 609.2 L363.5 605.5 L364.0 602.1 L364.5 599.3 L365.0 597.0 L365.5 594.7 L366.0 592.8 L366.5 591.2 L367.0 590.0 L367.5 589.3 L368.0 588.6 L368.5 588.1 L369.0 587.6 L369.5 587.2 L370.0 586.9 L370.5 586.5 L371.0 586.2 L371.5 585.9 L372.0 585.6 L372.5 585.3 L373.0 585.1 L373.5 584.9 L374.0 584.6 L374.5 584.4 L375.0 584.2 L375.5 583.9 L376.0 583.7 L376.5 583.4 L377.0 583.2 L377.5 582.9 L378.0 582.8 L378.5 582.7 L379.0 582.7 L379.5 582.7 L380.0 582.7 L380.5 582.8 L381.0 582.9 L381.5 583.0 L382.0 583.1 L382.5 583.2 L383.0 583.5 L383.5 583.9 L384.0 584.4 L384.5 585.0 L385.0 585.6 L385.5 586.3 L386.0 587.0 L386.5 587.8 L387.0 588.8 L387.5 589.9 L388.0 591.1 L388.5 592.6 L389.0 594.8 L389.5 597.0 L390.0 598.7 L390.5 600.0 L391.0 601.2 L391.5 601.8 L392.0 601.7 L392.5 601.5 L393.0 601.2 L393.5 600.5 L394.0 598.1 L394.5 595.0 L395.0 592.4 L395.5 590.5 L396.0 588.9 L396.5 587.7 L397.0 587.0 L397.5 586.4 L398.0 586.0 L398.5 585.7 L399.0 585.8 L399.5 586.3 L400.0 587.1 L400.5 588.1 L401.0 589.3 L401.5 591.1 L402.0 593.2 L402.5 595.4 L403.0 597.8 L403.5 600.6 L404.0 603.6 L404.5 606.8 L405.0 610.2 L405.5 613.8 L406.0 617.9 L406.5 622.1 L407.0 626.0 L407.5 630.0 L408.0 633.8 L408.5 636.4 L409.0 638.0 L409.5 639.4 L410.0 640.1 L410.5 640.0 L411.0 638.7 L411.5 636.7 L412.0 634.3 L412.5 629.9 L413.0 624.4 L413.5 620.1 L414.0 617.8 L414.5 615.9 L415.0 614.7 L415.5 614.4 L416.0 614.3 L416.5 614.2 L417.0 614.2 L417.5 614.1 L418.0 614.2 L418.5 614.3 L419.0 614.7 L419.5 615.2 L420.0 615.7 L420.5 616.3 L421.0 617.2 L421.5 618.3 L422.0 619.5 L422.5 620.9 L423.0 622.4 L423.5 623.9 L424.0 625.6 L424.5 627.5 L425.0 629.5 L425.5 631.6 L426.0 634.3 L426.5 637.2 L427.0 639.5 L427.5 640.7 L428.0 641.6 L428.5 642.3 L429.0 642.3 L429.5 641.2 L430.0 639.1 L430.5 636.6 L431.0 633.0 L431.5 628.0 L432.0 623.0 L432.5 619.3 L433.0 616.0 L433.5 612.9 L434.0 610.1 L434.5 607.4 L435.0 604.7 L435.5 602.1 L436.0 599.6 L436.5 597.3 L437.0 595.2 L437.5 593.5 L438.0 591.8 L438.5 590.2 L439.0 589.0 L439.5 588.2 L440.0 587.9 L440.5 587.6 L441.0 587.4 L441.5 587.6 L442.0 588.4 L442.5 589.6 L443.0 591.2 L443.5 594.2 L444.0 598.3 L444.5 602.1 L445.0 605.4 L445.5 608.7 L446.0 611.7 L446.5 614.1 L447.0 615.7 L447.5 617.2 L448.0 618.5 L448.5 619.6 L449.0 620.6 L449.5 621.4 L450.0 622.1 L450.5 622.8 L451.0 623.4 L451.5 624.0 L452.0 624.5 L452.5 624.9 L453.0 625.1 L453.5 625.1 L454.0 622.8 L454.5 617.2 L455.0 572.5 L455.5 533.3 L456.0 514.6 L456.5 499.7 L457.0 493.3 L457.5 490.1 L458.0 488.4 L458.5 487.8 L459.0 487.3 L459.5 487.0 L460.0 486.9 L460.5 486.9 L461.0 486.9 L461.5 487.0 L462.0 487.1 L462.5 487.3 L463.0 487.5 L463.5 487.7 L464.0 488.0 L464.5 488.4 L465.0 489.0 L465.5 490.3 L466.0 494.1 L466.5 504.9 L467.0 529.5 L467.5 554.4 L468.0 583.7 L468.5 622.6 L469.0 657.2 L469.5 674.2 L470.0 682.5 L470.5 687.1 L471.0 689.7 L471.5 689.6 L472.0 686.4 L472.5 680.4 L473.0 672.8 L473.5 665.2 L474.0 658.1 L474.5 651.7 L475.0 646.0 L475.5 641.0 L476.0 637.6 L476.5 635.2 L477.0 633.5 L477.5 633.0 L478.0 634.2 L478.5 636.3 L479.0 638.4 L479.5 640.4 L480.0 642.4 L480.5 644.2 L481.0 645.7 L481.5 647.3 L482.0 649.3 L482.5 650.9 L483.0 651.9 L483.5 652.6 L484.0 652.6 L484.5 651.7 L485.0 650.6 L485.5 649.3 L486.0 647.0 L486.5 636.6 L487.0 609.5 L487.5 601.5 L488.0 597.9 L488.5 596.1 L489.0 594.9 L489.5 594.5 L490.0 595.1 L490.5 596.3 L491.0 597.7 L491.5 599.2 L492.0 601.1 L492.5 603.0 L493.0 604.7 L493.5 606.1 L494.0 607.5 L494.5 608.7 L495.0 609.5 L495.5 609.7 L496.0 609.0 L496.5 607.8 L497.0 605.0 L497.5 600.1 L498.0 595.5 L498.5 593.1 L499.0 591.3 L499.5 589.9 L500.0 588.8 L500.5 588.2 L501.0 587.7 L501.5 587.3 L502.0 587.0 L502.5 586.7 L503.0 586.6 L503.5 586.6 L504.0 586.6 L504.5 586.8 L505.0 587.0 L505.5 587.2 L506.0 587.4 L506.5 587.6 L507.0 587.8 L507.5 587.9 L508.0 588.0 L508.5 588.0 L509.0 588.1 L509.5 588.1 L510.0 588.1 L510.5 588.2 L511.0 588.2 L511.5 588.2 L512.0 588.2 L512.5 588.2 L513.0 588.2 L513.5 588.2 L514.0 588.2 L514.5 588.2 L515.0 588.2 L515.5 588.1 L516.0 588.1 L516.5 588.0 L517.0 588.0 L517.5 587.9 L518.0 587.8 L518.5 587.7 L519.0 587.4 L519.5 587.0 L520.0 586.7 L520.5 586.2 L521.0 585.8 L521.5 585.3 L522.0 584.7 L522.5 584.0 L523.0 583.3 L523.5 582.5 L524.0 581.7 L524.5 580.8 L525.0 579.8 L525.5 578.7 L526.0 577.7 L526.5 576.6 L527.0 575.6 L527.5 574.5 L528.0 573.4 L528.5 572.2 L529.0 571.1 L529.5 570.1 L530.0 569.3 L530.5 568.7 L531.0 568.1 L531.5 567.6 L532.0 567.3 L532.5 567.1 L533.0 567.2 L533.5 567.7 L534.0 568.5 L534.5 569.4 L535.0 570.6 L535.5 572.4 L536.0 574.7 L536.5 576.8 L537.0 578.5 L537.5 579.6 L538.0 580.6 L538.5 581.3 L539.0 581.4 L539.5 580.3 L540.0 578.3 L540.5 573.3 L541.0 565.2 L541.5 559.5 L542.0 555.9 L542.5 553.0 L543.0 551.2 L543.5 550.4 L544.0 549.7 L544.5 549.4 L545.0 549.4 L545.5 549.7 L546.0 550.4 L546.5 551.3 L547.0 552.2 L547.5 553.7 L548.0 555.7 L548.5 557.9 L549.0 560.2 L549.5 562.6 L550.0 565.1 L550.5 568.0 L551.0 571.2 L551.5 575.1 L552.0 580.4 L552.5 587.6 L553.0 595.6 L553.5 603.2 L554.0 610.3 L554.5 617.3 L555.0 621.6 L555.5 623.9 L556.0 625.7 L556.5 626.6 L557.0 626.3 L557.5 624.9 L558.0 622.8 L558.5 620.2 L559.0 616.0 L559.5 610.4 L560.0 604.5 L560.5 598.3 L561.0 591.3 L561.5 584.1 L562.0 577.1 L562.5 571.1 L563.0 566.0 L563.5 561.2 L564.0 556.8 L564.5 552.8 L565.0 549.1 L565.5 545.7 L566.0 542.3 L566.5 539.2 L567.0 536.6 L567.5 534.6 L568.0 533.3 L568.5 532.2 L569.0 531.3 L569.5 530.6 L570.0 530.1 L570.5 529.9 L571.0 529.7 L571.5 529.6 L572.0 529.4 L572.5 529.3 L573.0 529.3 L573.5 529.2 L574.0 529.1 L574.5 529.0 L575.0 528.9 L575.5 528.8 L576.0 528.7 L576.5 528.7 L577.0 528.6 L577.5 528.5 L578.0 528.5 L578.5 528.5 L579.0 528.5 L579.5 528.5 L580.0 528.5 L580.5 528.5 L581.0 528.5 L581.5 528.5 L582.0 528.5 L582.5 528.6 L583.0 529.1 L583.5 529.8 L584.0 530.7 L584.5 532.8 L585.0 536.4 L585.5 539.9 L586.0 542.9 L586.5 545.9 L587.0 548.9 L587.5 551.9 L588.0 554.9 L588.5 558.1 L589.0 561.5 L589.5 564.8 L590.0 567.7 L590.5 569.8 L591.0 571.5 L591.5 573.1 L592.0 574.4 L592.5 575.3 L593.0 575.7 L593.5 575.5 L594.0 575.1 L594.5 574.4 L595.0 573.6 L595.5 572.6 L596.0 571.3 L596.5 569.5 L597.0 567.6 L597.5 565.5 L598.0 563.4 L598.5 561.4 L599.0 559.2 L599.5 556.9 L600.0 554.6 L600.5 552.2 L601.0 549.9 L601.5 547.7 L602.0 545.5 L602.5 543.1 L603.0 540.8 L603.5 538.9 L604.0 537.7 L604.5 536.9 L605.0 536.5 L605.5 536.5 L606.0 537.0 L606.5 537.7 L607.0 540.0 L607.5 543.9 L608.0 548.4 L608.5 554.1 L609.0 559.5 L609.5 563.0 L610.0 565.6 L610.5 567.9 L611.0 569.4 L611.5 569.8 L612.0 569.2 L612.5 568.2 L613.0 567.0 L613.5 565.8 L614.0 564.2 L614.5 562.6 L615.0 561.1 L615.5 560.0 L616.0 559.0 L616.5 558.1 L617.0 557.5 L617.5 557.4 L618.0 557.6 L618.5 557.9 L619.0 558.3 L619.5 558.8 L620.0 559.6 L620.5 561.1 L621.0 563.0 L621.5 565.3 L622.0 568.7 L622.5 572.6 L623.0 576.5 L623.5 580.3 L624.0 584.2 L624.5 588.5 L625.0 593.3 L625.5 599.7 L626.0 608.0 L626.5 615.3 L627.0 619.4 L627.5 622.2 L628.0 624.2 L628.5 625.1 L629.0 625.4 L629.5 625.5 L630.0 625.6 L630.5 625.6 L631.0 625.5 L631.5 625.3 L632.0 624.9 L632.5 624.4 L633.0 624.0 L633.5 623.6 L634.0 623.1 L634.5 622.6 L635.0 621.9 L635.5 620.8 L636.0 618.5 L636.5 615.2 L637.0 610.7 L637.5 600.8 L638.0 588.5 L638.5 578.7 L639.0 569.9 L639.5 565.1 L640.0 562.1 L640.5 560.4 L641.0 559.8 L641.5 559.5 L642.0 559.2 L642.5 559.1 L643.0 559.2 L643.5 559.9 L644.0 560.9 L644.5 562.1 L645.0 563.2 L645.5 564.3 L646.0 565.6 L646.5 566.9 L647.0 568.3 L647.5 569.6 L648.0 570.8 L648.5 572.0 L649.0 573.1 L649.5 574.3 L650.0 575.4 L650.5 576.5 L651.0 577.4 L651.5 578.1 L652.0 578.6 L652.5 579.0 L653.0 579.4 L653.5 579.8 L654.0 579.9 L654.5 579.9 L655.0 579.7 L655.5 579.4 L656.0 578.9 L656.5 578.5 L657.0 577.9 L657.5 577.1 L658.0 576.1 L658.5 575.3 L659.0 574.8 L659.5 574.6 L660.0 574.5 L660.5 574.4 L661.0 574.3 L661.5 574.9 L662.0 576.3 L662.5 578.3 L663.0 581.8 L663.5 588.6 L664.0 594.1 L664.5 597.0 L665.0 599.3 L665.5 600.6 L666.0 600.7 L666.5 600.7 L667.0 600.5 L667.5 600.3 L668.0 600.1 L668.5 599.8 L669.0 599.5 L669.5 599.1 L670.0 598.6 L670.5 598.0 L671.0 597.4 L671.5 596.7 L672.0 596.0 L672.5 595.1 L673.0 594.1 L673.5 593.0 L674.0 591.7 L674.5 590.5 L675.0 589.3 L675.5 588.1 L676.0 586.9 L676.5 585.7 L677.0 584.5 L677.5 583.4 L678.0 582.3 L678.5 581.3 L679.0 580.3 L679.5 579.5 L680.0 578.6 L680.5 577.8 L681.0 577.0 L681.5 576.4 L682.0 575.8 L682.5 575.4 L683.0 574.9 L683.5 574.5 L684.0 574.2 L684.5 574.0 L685.0 574.1 L685.5 574.6 L686.0 575.6 L686.5 577.2 L687.0 583.5 L687.5 593.2 L688.0 607.2 L688.5 619.6 L689.0 626.9 L689.5 631.9 L690.0 634.0 L690.5 635.2 L691.0 635.8 L691.5 635.4 L692.0 634.1 L692.5 632.2 L693.0 630.3 L693.5 628.7 L694.0 627.0 L694.5 625.3 L695.0 623.5 L695.5 621.7 L696.0 619.9 L696.5 618.1 L697.0 616.4 L697.5 614.6 L698.0 612.8 L698.5 611.1 L699.0 609.3 L699.5 607.6 L700.0 605.9 L700.5 604.2 L701.0 602.5 L701.5 600.8 L702.0 599.2 L702.5 597.6 L703.0 596.1 L703.5 594.6 L704.0 593.0 L704.5 591.5 L705.0 590.0 L705.5 588.9 L706.0 588.2 L706.5 587.6 L707.0 587.1 L707.5 586.7 L708.0 586.5 L708.5 586.4 L709.0 586.3 L709.5 586.3 L710.0 586.2 L710.5 586.2 L711.0 586.2 L711.5 586.2 L712.0 586.2 L712.5 586.3 L713.0 586.6 L713.5 586.9 L714.0 587.3 L714.5 587.8 L715.0 588.7 L715.5 590.2 L716.0 592.1 L716.5 594.3 L717.0 598.1 L717.5 603.5 L718.0 609.3 L718.5 614.5 L719.0 620.0 L719.5 622.5 L720.0 623.5 L720.5 624.3 L721.0 624.9 L721.5 625.2 L722.0 625.3 L722.5 625.3 L723.0 625.3 L723.5 625.2 L724.0 625.2 L724.5 625.1 L725.0 625.0 L725.5 624.9 L726.0 624.8 L726.5 624.7 L727.0 624.5 L727.5 624.2 L728.0 623.9 L728.5 623.4 L729.0 622.9 L729.5 622.3 L730.0 621.2 L730.5 619.4 L731.0 617.0 L731.5 614.3 L732.0 611.3 L732.5 607.4 L733.0 602.9 L733.5 598.3 L734.0 594.1 L734.5 589.6 L735.0 585.5 L735.5 582.3 L736.0 579.8 L736.5 577.7 L737.0 576.3 L737.5 575.6 L738.0 575.2 L738.5 574.8 L739.0 574.5 L739.5 574.4 L740.0 574.4 L740.5 574.5 L741.0 574.6 L741.5 574.8 L742.0 575.0 L742.5 575.2 L743.0 575.4 L743.5 575.4 L744.0 575.5 L744.5 575.6 L745.0 575.6 L745.5 575.7 L746.0 575.7 L746.5 575.7 L747.0 574.9 L747.5 573.2 L748.0 571.2 L748.5 569.2 L749.0 566.7 L749.5 564.0 L750.0 561.7 L750.5 560.1 L751.0 558.8 L751.5 557.7 L752.0 556.7 L752.5 555.9 L753.0 555.3 L753.5 554.8 L754.0 554.5 L754.5 554.1 L755.0 553.8 L755.5 553.6 L756.0 553.4 L756.5 553.4 L757.0 553.4 L757.5 553.5 L758.0 553.6 L758.5 553.9 L759.0 554.1 L759.5 554.5 L760.0 555.3 L760.5 556.3 L761.0 557.3 L761.5 558.2 L762.0 558.8 L762.5 559.4 L763.0 560.0 L763.5 560.4 L764.0 560.5 L764.5 560.1 L765.0 559.5 L765.5 558.7 L766.0 557.8 L766.5 556.7 L767.0 555.4 L767.5 554.0 L768.0 552.8 L768.5 552.0 L769.0 551.4 L769.5 550.9 L770.0 550.7 L770.5 550.8 L771.0 551.3 L771.5 552.2 L772.0 553.2 L772.5 554.9 L773.0 557.2 L773.5 559.4 L774.0 561.6 L774.5 563.9 L775.0 566.2 L775.5 568.4 L776.0 570.3 L776.5 571.9 L777.0 573.4 L777.5 574.8 L778.0 576.0 L778.5 577.1 L779.0 578.1 L779.5 578.9 L780.0 579.7 L780.5 580.5 L781.0 581.3 L781.5 582.3 L782.0 583.3 L782.5 584.5 L783.0 585.7 L783.5 587.0 L784.0 588.5 L784.5 590.5 L785.0 592.6 L785.5 594.6 L786.0 596.3 L786.5 597.4 L787.0 598.4 L787.5 599.2 L788.0 599.7 L788.5 599.7 L789.0 599.0 L789.5 598.0 L790.0 596.8 L790.5 595.0 L791.0 592.5 L791.5 590.0 L792.0 588.0 L792.5 586.8 L793.0 585.7 L793.5 584.9 L794.0 584.3 L794.5 584.2 L795.0 584.5 L795.5 585.0 L796.0 585.8 L796.5 587.3 L797.0 590.2 L797.5 593.1 L798.0 595.3 L798.5 597.4 L799.0 599.3 L799.5 600.7 L800.0 601.3 L800.5 601.7 L801.0 601.9 L801.5 601.5 L802.0 599.9 L802.5 597.7 L803.0 593.7 L803.5 588.3 L804.0 584.2 L804.5 582.0 L805.0 580.1 L805.5 579.0 L806.0 578.6 L806.5 578.4 L807.0 578.3 L807.5 578.3 L808.0 580.1 L808.5 583.5 L809.0 589.5 L809.5 599.1 L810.0 606.9 L810.5 612.9 L811.0 617.5 L811.5 619.3 L812.0 620.3 L812.5 620.9 L813.0 621.1 L813.5 620.9 L814.0 620.5 L814.5 620.0 L815.0 619.3 L815.5 618.6 L816.0 617.8 L816.5 616.9 L817.0 615.9 L817.5 614.7 L818.0 613.4 L818.5 611.9 L819.0 610.4 L819.5 608.6 L820.0 606.4 L820.5 603.8 L821.0 601.2 L821.5 598.8 L822.0 596.9 L822.5 595.1 L823.0 593.4 L823.5 592.2 L824.0 591.6 L824.5 591.3 L825.0 591.0 L825.5 590.9 L826.0 591.3 L826.5 592.4 L827.0 593.8 L827.5 595.3 L828.0 597.6 L828.5 600.2 L829.0 602.4 L829.5 603.8 L830.0 604.7 L830.5 605.5 L831.0 605.8 L831.5 605.4 L832.0 603.9 L832.5 602.0 L833.0 600.5 L833.5 598.8 L834.0 597.2 L834.5 595.9 L835.0 595.2 L835.5 594.9 L836.0 594.6 L836.5 594.4 L837.0 594.2 L837.5 594.1 L838.0 594.0 L838.5 594.0 L839.0 594.0 L839.5 594.0 L840.0 594.0 L840.5 594.0 L841.0 594.0 L841.5 594.0 L842.0 594.0 L842.5 594.0 L843.0 594.0 L843.5 594.0 L844.0 593.8 L844.5 592.3 L845.0 590.0 L845.5 587.5 L846.0 584.6 L846.5 581.3 L847.0 578.8 L847.5 577.6 L848.0 576.7 L848.5 576.1 L849.0 575.7 L849.5 575.7 L850.0 575.8 L850.5 576.1 L851.0 576.3 L851.5 576.6 L852.0 577.0 L852.5 577.6 L853.0 578.3 L853.5 579.0 L854.0 579.7 L854.5 580.4 L855.0 581.0 L855.5 581.5 L856.0 582.0 L856.5 582.5 L857.0 583.0 L857.5 583.5 L858.0 584.0 L858.5 584.5 L859.0 585.0 L859.5 585.6 L860.0 586.1 L860.5 586.3 L861.0 586.4 L861.5 586.5 L862.0 586.6 L862.5 586.7 L863.0 586.8 L863.5 586.9 L864.0 587.1 L864.5 587.2 L865.0 587.3 L865.5 587.4 L866.0 587.5 L866.5 587.7 L867.0 587.8 L867.5 588.1 L868.0 588.4 L868.5 588.8 L869.0 589.3 L869.5 589.7 L870.0 590.1 L870.5 590.6 L871.0 591.2 L871.5 591.8 L872.0 592.5 L872.5 593.1 L873.0 593.5 L873.5 593.7 L874.0 593.6 L874.5 593.1 L875.0 592.4 L875.5 591.6 L876.0 590.6 L876.5 589.2 L877.0 586.9 L877.5 584.3 L878.0 582.0 L878.5 580.6 L879.0 579.4 L879.5 578.4 L880.0 577.8 L880.5 577.6 L881.0 578.1 L881.5 578.9 L882.0 580.0 L882.5 582.2 L883.0 586.2 L883.5 591.2 L884.0 596.6 L884.5 603.6 L885.0 611.2 L885.5 618.2 L886.0 624.9 L886.5 631.2 L887.0 636.6 L887.5 640.5 L888.0 643.6 L888.5 646.8 L889.0 650.9 L889.5 654.7 L890.0 656.6 L890.5 658.0 L891.0 659.0 L891.5 659.5 L892.0 659.8 L892.5 660.0 L893.0 660.2 L893.5 660.2 L894.0 660.2 L894.5 660.0 L895.0 659.8 L895.5 659.5 L896.0 659.2 L896.5 658.8 L897.0 658.4 L897.5 657.8 L898.0 657.0 L898.5 655.8 L899.0 653.8 L899.5 649.8 L900.0 644.7 L900.5 637.2 L901.0 628.7 L901.5 620.3 L902.0 611.5 L902.5 606.2 L903.0 603.0 L903.5 601.0 L904.0 600.8 L904.5 600.8 L905.0 600.8 L905.5 602.3 L906.0 606.4 L906.5 611.4 L907.0 618.1 L907.5 626.0 L908.0 633.3 L908.5 639.8 L909.0 645.4 L909.5 649.7 L910.0 653.2 L910.5 656.2 L911.0 658.9 L911.5 661.5 L912.0 663.9 L912.5 666.1 L913.0 667.9 L913.5 669.4 L914.0 670.8 L914.5 672.0 L915.0 673.0 L915.5 673.6 L916.0 673.8 L916.5 674.0 L917.0 674.1 L917.5 673.9 L918.0 672.2 L918.5 669.5 L919.0 663.0 L919.5 653.6 L920.0 641.9 L920.5 630.8 L921.0 627.0 L921.5 625.0 L922.0 624.4 L922.5 624.3 L923.0 624.2 L923.5 624.2 L924.0 624.4 L924.5 625.1 L925.0 626.0 L925.5 627.1 L926.0 628.3 L926.5 629.4 L927.0 630.7 L927.5 632.2 L928.0 633.9 L928.5 635.6 L929.0 637.6 L929.5 639.8 L930.0 642.2 L930.5 644.9 L931.0 648.0 L931.5 652.2 L932.0 656.6 L932.5 659.7 L933.0 661.9 L933.5 663.7 L934.0 665.1 L934.5 665.6 L935.0 665.4 L935.5 664.7 L936.0 663.6 L936.5 660.3 L937.0 655.3 L937.5 648.2 L938.0 623.6 L938.5 607.3 L939.0 600.5 L939.5 597.9 L940.0 596.5 L940.5 595.7 L941.0 595.4 L941.5 595.4 L942.0 595.6 L942.5 595.7 L943.0 595.9 L943.5 596.1 L944.0 596.3 L944.5 596.6 L945.0 596.9 L945.5 597.2 L946.0 597.5 L946.5 597.8 L947.0 597.9 L947.5 597.8 L948.0 597.2 L948.5 596.3 L949.0 595.2 L949.5 594.1 L950.0 593.3 L950.5 592.3 L951.0 591.4 L951.5 590.6 L952.0 590.1 L952.5 590.0 L953.0 590.0 L953.5 590.1 L954.0 590.1 L954.5 590.2 L955.0 590.4 L955.5 590.7 L956.0 591.1 L956.5 591.6 L957.0 592.2 L957.5 592.6 L958.0 592.8 L958.5 592.8 L959.0 592.8 L959.5 592.7 L960.0 592.6 L960.5 592.4 L961.0 592.3 L961.5 592.1 L962.0 591.7 L962.5 591.1 L963.0 590.3 L963.5 589.3 L964.0 588.2 L964.5 587.1 L965.0 586.1 L965.5 585.0 L966.0 583.8 L966.5 582.6 L967.0 581.4 L967.5 580.2 L968.0 579.2 L968.5 578.2 L969.0 577.3 L969.5 576.3 L970.0 575.5 L970.5 574.9 L971.0 574.7 L971.5 574.8 L972.0 574.8 L972.5 574.9 L973.0 575.0 L973.5 575.4 L974.0 576.3 L974.5 577.6 L975.0 578.9 L975.5 580.2 L976.0 581.6 L976.5 583.1 L977.0 584.7 L977.5 586.3 L978.0 587.9 L978.5 589.5 L979.0 591.1 L979.5 592.8 L980.0 594.6 L980.5 596.5 L981.0 598.9 L981.5 601.3 L982.0 603.2 L982.5 604.3 L983.0 605.1 L983.5 605.7 L984.0 605.9 L984.5 605.4 L985.0 604.2 L985.5 602.6 L986.0 600.4 L986.5 596.8 L987.0 592.7 L987.5 589.3 L988.0 585.9 L988.5 583.2 L989.0 582.1 L989.5 581.3 L990.0 581.0 L990.5 581.6 L991.0 583.4 L991.5 586.6 L992.0 593.8 L992.5 601.8 L993.0 611.0 L993.5 619.6 L994.0 624.1 L994.5 627.2 L995.0 629.4 L995.5 630.1 L996.0 629.9 L996.5 629.5 L997.0 629.0 L997.5 628.4 L998.0 627.7 L998.5 626.7 L999.0 625.6 L999.5 624.3 L1000.0 623.0 L1000.5 621.6 L1001.0 620.1 L1001.5 618.4 L1002.0 616.5 L1002.5 614.6 L1003.0 612.6 L1003.5 610.4 L1004.0 607.9 L1004.5 605.4 L1005.0 603.1 L1005.5 601.5 L1006.0 599.9 L1006.5 598.5 L1007.0 597.6 L1007.5 597.4 L1008.0 597.4 L1008.5 597.4 L1009.0 597.4 L1009.5 597.5 L1010.0 598.2 L1010.5 599.5 L1011.0 601.1 L1011.5 602.9 L1012.0 604.7 L1012.5 607.0 L1013.0 609.6 L1013.5 612.5 L1014.0 615.7 L1014.5 619.4 L1015.0 623.6 L1015.5 628.2 L1016.0 634.2 L1016.5 640.0 L1017.0 643.5 L1017.5 647.0 L1018.0 656.5 L1018.5 663.0 L1019.0 666.5 L1019.5 668.2 L1020.0 668.7 L1020.5 669.0 L1021.0 668.9 L1021.5 667.8 L1022.0 665.7 L1022.5 662.9 L1023.0 658.4 L1023.5 653.6 L1024.0 649.0 L1024.5 644.0 L1025.0 638.8 L1025.5 633.5 L1026.0 628.6 L1026.5 623.7 L1027.0 619.0 L1027.5 614.9 L1028.0 611.4 L1028.5 608.1 L1029.0 605.6 L1029.5 604.4 L1030.0 603.6 L1030.5 603.0 L1031.0 602.5 L1031.5 602.2 L1032.0 602.2 L1032.5 602.3 L1033.0 602.5 L1033.5 602.7 L1034.0 603.1 L1034.5 603.4 L1035.0 603.7 L1035.5 604.0 L1036.0 604.4 L1036.5 604.9 L1037.0 605.3 L1037.5 605.5 L1038.0 605.5 L1038.5 605.0 L1039.0 604.2 L1039.5 603.0 L1040.0 601.4 L1040.5 597.4 L1041.0 592.1 L1041.5 587.0 L1042.0 581.9 L1042.5 577.1 L1043.0 574.6 L1043.5 573.3 L1044.0 572.4 L1044.5 572.0 L1045.0 572.2 L1045.5 572.5 L1046.0 573.1 L1046.5 573.9 L1047.0 575.6 L1047.5 578.0 L1048.0 580.5 L1048.5 583.2 L1049.0 586.3 L1049.5 589.8 L1050.0 593.5 L1050.5 597.3 L1051.0 601.4 L1051.5 605.8 L1052.0 610.6 L1052.5 615.6 L1053.0 621.1 L1053.5 627.6 L1054.0 633.8 L1054.5 638.9 L1055.0 643.3 L1055.5 646.5 L1056.0 648.2 L1056.5 649.4 L1057.0 649.4 L1057.5 648.6 L1058.0 647.0 L1058.5 641.6 L1059.0 631.6 L1059.5 622.0 L1060.0 612.2 L1060.5 604.1 L1061.0 596.8 L1061.5 590.6 L1062.0 586.2 L1062.5 583.5 L1063.0 581.2 L1063.5 579.4 L1064.0 578.0 L1064.5 576.7 L1065.0 575.7 L1065.5 574.8 L1066.0 574.0 L1066.5 573.2 L1067.0 572.6 L1067.5 572.0 L1068.0 571.4 L1068.5 570.9 L1069.0 570.4 L1069.5 570.0 L1070.0 569.5 L1070.5 569.1 L1071.0 568.8 L1071.5 568.5 L1072.0 568.2 L1072.5 568.0 L1073.0 567.7 L1073.5 567.5 L1074.0 567.3 L1074.5 567.3 L1075.0 567.3 L1075.5 567.5 L1076.0 568.0 L1076.5 568.6 L1077.0 569.4 L1077.5 571.3 L1078.0 574.5 L1078.5 578.1 L1079.0 582.1 L1079.5 587.1 L1080.0 591.6 L1080.5 594.1 L1081.0 595.8 L1081.5 596.8 L1082.0 596.6 L1082.5 595.4 L1083.0 593.5 L1083.5 591.0 L1084.0 586.9 L1084.5 582.2 L1085.0 578.4 L1085.5 575.3 L1086.0 572.4 L1086.5 569.8 L1087.0 567.4 L1087.5 565.3 L1088.0 563.4 L1088.5 561.7 L1089.0 560.1 L1089.5 558.8 L1090.0 557.9 L1090.5 557.2 L1091.0 556.5 L1091.5 555.9 L1092.0 555.4 L1092.5 555.1 L1093.0 555.1 L1093.5 555.2 L1094.0 555.4 L1094.5 555.7 L1095.0 556.2 L1095.5 557.3 L1096.0 559.6 L1096.5 562.4 L1097.0 565.5 L1097.5 569.8 L1098.0 574.0 L1098.5 576.8 L1099.0 578.4 L1099.5 579.4 L1100.0 579.1 L1100.5 578.0 L1101.0 576.5 L1101.5 574.4 L1102.0 571.4 L1102.5 568.3 L1103.0 565.6 L1103.5 563.4 L1104.0 561.3 L1104.5 559.3 L1105.0 557.5 L1105.5 556.0 L1106.0 554.7 L1106.5 553.5 L1107.0 552.4 L1107.5 551.5 L1108.0 550.7 L1108.5 550.1 L1109.0 549.6 L1109.5 549.2 L1110.0 548.8 L1110.5 548.5 L1111.0 548.3 L1111.5 548.3 L1112.0 548.3 L1112.5 548.5 L1113.0 548.6 L1113.5 548.9 L1114.0 549.2 L1114.5 549.5 L1115.0 549.8 L1115.5 550.4 L1116.0 551.0 L1116.5 551.8 L1117.0 552.6 L1117.5 553.6 L1118.0 554.6 L1118.5 555.9 L1119.0 557.3 L1119.5 558.9 L1120.0 560.6 L1120.5 562.3 L1121.0 564.4 L1121.5 566.7 L1122.0 569.0 L1122.5 571.0 L1123.0 572.6 L1123.5 574.0 L1124.0 575.3 L1124.5 576.3 L1125.0 577.0 L1125.5 577.5 L1126.0 578.0 L1126.5 578.4 L1127.0 578.8 L1127.5 579.2 L1128.0 579.8 L1128.5 580.6 L1129.0 581.6 L1129.5 582.7 L1130.0 584.0 L1130.5 585.5 L1131.0 587.4 L1131.5 590.0 L1132.0 592.9 L1132.5 595.9 L1133.0 598.8 L1133.5 601.9 L1134.0 605.1 L1134.5 607.9 L1135.0 610.3 L1135.5 612.3 L1136.0 614.2 L1136.5 615.8 L1137.0 617.2 L1137.5 618.3 L1138.0 619.2 L1138.5 620.0 L1139.0 620.6 L1139.5 621.1 L1140.0 621.4 L1140.5 621.7 L1141.0 621.9 L1141.5 622.0 L1142.0 622.2 L1142.5 622.2 L1143.0 622.3 L1143.5 622.0 L1144.0 621.2 L1144.5 620.2 L1145.0 618.9 L1145.5 617.4 L1146.0 614.8 L1146.5 611.8 L1147.0 609.6 L1147.5 608.5 L1148.0 607.6 L1148.5 607.1 L1149.0 607.2 L1149.5 608.4 L1150.0 610.8 L1150.5 623.2 L1151.0 637.4 L1151.5 648.9 L1152.0 663.6 L1152.5 673.3 L1153.0 679.9 L1153.5 684.8 L1154.0 687.4 L1154.5 688.4 L1155.0 686.7 L1155.5 683.7 L1156.0 679.0 L1156.5 673.9 L1157.0 669.2 L1157.5 664.4 L1158.0 660.1 L1158.5 656.7 L1159.0 654.0 L1159.5 651.5 L1160.0 648.5 L1160.5 644.0 L1161.0 637.6 L1161.5 632.6 L1162.0 628.2 L1162.5 624.5 L1163.0 622.0 L1163.5 620.1 L1164.0 618.5 L1164.5 617.3 L1165.0 616.6 L1165.5 616.2 L1166.0 615.9 L1166.5 615.7 L1167.0 615.5 L1167.5 615.5 L1168.0 615.7 L1168.5 616.1 L1169.0 616.6 L1169.5 617.3 L1170.0 618.0 L1170.5 618.8 L1171.0 620.0 L1171.5 621.5 L1172.0 623.2 L1172.5 625.0 L1173.0 626.8 L1173.5 628.8 L1174.0 631.1 L1174.5 633.5 L1175.0 636.1 L1175.5 638.5 L1176.0 641.3 L1176.5 644.2 L1177.0 646.4 L1177.5 647.5 L1178.0 648.4 L1178.5 649.1 L1179.0 649.7 L1179.5 650.1 L1180.0 650.3 L1180.5 650.5 L1181.0 650.7 L1181.5 650.8 L1182.0 650.9 L1182.5 651.0 L1183.0 651.0 L1183.5 651.0 L1184.0 651.0 L1184.5 650.9 L1185.0 650.7 L1185.5 650.6 L1186.0 650.4 L1186.5 650.2 L1187.0 649.8 L1187.5 649.2 L1188.0 648.3 L1188.5 647.2 L1189.0 645.5 L1189.5 642.5 L1190.0 639.0 L1190.5 635.8 L1191.0 632.7 L1191.5 629.6 L1192.0 626.8 L1192.5 624.3 L1193.0 621.8 L1193.5 619.6 L1194.0 617.7 L1194.5 616.5 L1195.0 615.7 L1195.5 614.9 L1196.0 614.4 L1196.5 614.1 L1197.0 614.2 L1197.5 614.6 L1198.0 615.1 L1198.5 615.8 L1199.0 616.7 L1199.5 618.1 L1200.0 620.0 L1200.5 621.9 L1201.0 623.5 L1201.5 624.6 L1202.0 625.7 L1202.5 626.6 L1203.0 627.2 L1203.5 627.3 L1204.0 625.3 L1204.5 622.0 L1205.0 616.3 L1205.5 608.0 L1206.0 602.3 L1206.5 598.9 L1207.0 596.3 L1207.5 594.6 L1208.0 593.6 L1208.5 592.9 L1209.0 592.4 L1209.5 592.3 L1210.0 592.7 L1210.5 593.3 L1211.0 594.0 L1211.5 594.7 L1212.0 595.3 L1212.5 595.9 L1213.0 596.6 L1213.5 597.3 L1214.0 597.8 L1214.5 598.3 L1215.0 598.5 L1215.5 598.5 L1216.0 598.4 L1216.5 598.2 L1217.0 597.9 L1217.5 597.5 L1218.0 597.2 L1218.5 596.9 L1219.0 596.7 L1219.5 596.4 L1220.0 596.1 L1220.5 595.9 L1221.0 595.7 L1221.5 595.7 L1222.0 595.9 L1222.5 596.5 L1223.0 597.3 L1223.5 598.2 L1224.0 599.2 L1224.5 600.5 L1225.0 602.0 L1225.5 603.1 L1226.0 603.7 L1226.5 603.9 L1227.0 604.1 L1227.5 604.3 L1228.0 604.4 L1228.5 604.5 L1229.0 604.5 L1229.5 604.3 L1230.0 604.1 L1230.5 603.8 L1231.0 603.4 L1231.5 603.1 L1232.0 602.9 L1232.5 602.6 L1233.0 602.4 L1233.5 602.2 L1234.0 602.0 L1234.5 601.9 L1235.0 602.1 L1235.5 602.8 L1236.0 604.1 L1236.5 605.8 L1237.0 610.0 L1237.5 615.6 L1238.0 620.0 L1238.5 624.0 L1239.0 627.5 L1239.5 630.1 L1240.0 632.0 L1240.5 633.7 L1241.0 635.1 L1241.5 636.4 L1242.0 637.6 L1242.5 638.8 L1243.0 639.9 L1243.5 640.9 L1244.0 641.9 L1244.5 642.8 L1245.0 643.7 L1245.5 644.7 L1246.0 645.6 L1246.5 646.7 L1247.0 648.2 L1247.5 650.3 L1248.0 652.7 L1248.5 654.9 L1249.0 657.0 L1249.5 659.2 L1250.0 661.3 L1250.5 663.0 L1251.0 664.2 L1251.5 665.3 L1252.0 665.9 L1252.5 664.9 L1253.0 662.0 L1253.5 658.2 L1254.0 653.9 L1254.5 649.5 L1255.0 632.1 L1255.5 621.7 L1256.0 617.3 L1256.5 615.2 L1257.0 613.8 L1257.5 613.3 L1258.0 613.3 L1258.5 613.5 L1259.0 613.7 L1259.5 614.0 L1260.0 614.2 L1260.5 614.5 L1261.0 614.8 L1261.5 615.1 L1262.0 615.5 L1262.5 615.8 L1263.0 616.2 L1263.5 616.6 L1264.0 616.9 L1264.5 617.3 L1265.0 617.7 L1265.5 618.2 L1266.0 618.6 L1266.5 619.1 L1267.0 619.5 L1267.5 619.9 L1268.0 620.3 L1268.5 620.5 L1269.0 620.8 L1269.5 621.0 L1270.0 621.2 L1270.5 621.3 L1271.0 621.4 L1271.5 621.2 L1272.0 620.3 L1272.5 618.9 L1273.0 617.3 L1273.5 615.5 L1274.0 612.7 L1274.5 609.3 L1275.0 606.1 L1275.5 603.8 L1276.0 602.3 L1276.5 600.9 L1277.0 599.6 L1277.5 598.5 L1278.0 597.4 L1278.5 596.4 L1279.0 595.4 L1279.5 594.5 L1280.0 593.6 L1280.5 592.9 L1281.0 592.4 L1281.5 592.1 L1282.0 591.9 L1282.5 591.8 L1283.0 591.7 L1283.5 591.9 L1284.0 592.8 L1284.5 594.2 L1285.0 596.1 L1285.5 600.5 L1286.0 606.5 L1286.5 612.0 L1287.0 616.3 L1287.5 620.6 L1288.0 624.5 L1288.5 627.9 L1289.0 630.6 L1289.5 633.0 L1290.0 635.1 L1290.5 637.0 L1291.0 638.6 L1291.5 640.0 L1292.0 641.4 L1292.5 642.7 L1293.0 643.7 L1293.5 644.4 L1294.0 644.5 L1294.5 644.3 L1295.0 644.1 L1295.5 643.6 L1296.0 641.7 L1296.5 637.7 L1297.0 632.5 L1297.5 624.7 L1298.0 617.9 L1298.5 613.4 L1299.0 609.7 L1299.5 607.9 L1300.0 606.9 L1300.5 606.2 L1301.0 605.9 L1301.5 606.3 L1302.0 607.6 L1302.5 609.5 L1303.0 611.6 L1303.5 614.5 L1304.0 617.9 L1304.5 620.9 L1305.0 623.8 L1305.5 626.6 L1306.0 628.3 L1306.5 628.3 L1307.0 628.1 L1307.5 627.6 L1308.0 624.7 L1308.5 618.8 L1309.0 612.8 L1309.5 608.0 L1310.0 603.1 L1310.5 599.2 L1311.0 596.9 L1311.5 595.2 L1312.0 593.9 L1312.5 593.3 L1313.0 593.1 L1313.5 592.9 L1314.0 592.9 L1314.5 593.3 L1315.0 595.0 L1315.5 597.3 L1316.0 599.6 L1316.5 602.3 L1317.0 605.5 L1317.5 608.8 L1318.0 612.0 L1318.5 614.7 L1319.0 617.4 L1319.5 620.0 L1320.0 622.4 L1320.5 624.5 L1321.0 626.2 L1321.5 627.7 L1322.0 629.1 L1322.5 630.4 L1323.0 631.5 L1323.5 632.5 L1324.0 633.2 L1324.5 633.6 L1325.0 634.0 L1325.5 634.4 L1326.0 634.7 L1326.5 634.9 L1327.0 635.1 L1327.5 635.2 L1328.0 635.2 L1328.5 635.2 L1329.0 635.2 L1329.5 635.2 L1330.0 635.2 L1330.5 635.2 L1331.0 635.2 L1331.5 635.1 L1332.0 634.7 L1332.5 634.0 L1333.0 633.1 L1333.5 631.6 L1334.0 627.7 L1334.5 624.9 L1335.0 623.7 L1335.5 622.8 L1336.0 622.1 L1336.5 621.7 L1337.0 621.5 L1337.5 621.3 L1338.0 621.2 L1338.5 621.1 L1339.0 621.0 L1339.5 620.9 L1340.0 620.8 L1340.5 620.8 L1341.0 620.7 L1341.5 620.7 L1342.0 620.6 L1342.5 620.6 L1343.0 620.6 L1343.5 620.5 L1344.0 620.3 L1344.5 619.2 L1345.0 617.5 L1345.5 615.5 L1346.0 611.7 L1346.5 607.3 L1347.0 604.8 L1347.5 603.2 L1348.0 602.0 L1348.5 601.1 L1349.0 600.7 L1349.5 600.4 L1350.0 600.2 L1350.5 600.0 L1351.0 599.9 L1351.5 599.7 L1352.0 599.7 L1352.5 599.6 L1353.0 599.5 L1353.5 599.5 L1354.0 599.4 L1354.5 599.4 L1355.0 599.3 L1355.5 599.3 L1356.0 599.3 L1356.5 599.3 L1357.0 599.3 L1357.5 599.4 L1358.0 599.5 L1358.5 599.6 L1359.0 599.8 L1359.5 600.0 L1360.0 600.2 L1360.5 600.6 L1361.0 601.1 L1361.5 601.8 L1362.0 602.5 L1362.5 603.2 L1363.0 604.1 L1363.5 605.1 L1364.0 606.2 L1364.5 607.3 L1365.0 608.2 L1365.5 609.2 L1366.0 610.2 L1366.5 611.0 L1367.0 611.5 L1367.5 611.3 L1368.0 610.7 L1368.5 609.7 L1369.0 608.0 L1369.5 603.5 L1370.0 598.7 L1370.5 594.8 L1371.0 591.0 L1371.5 588.3 L1372.0 587.1 L1372.5 586.2 L1373.0 585.4 L1373.5 585.0 L1374.0 584.9 L1374.5 585.0 L1375.0 585.2 L1375.5 585.5 L1376.0 585.9 L1376.5 586.3 L1377.0 587.1 L1377.5 588.2 L1378.0 589.4 L1378.5 590.8 L1379.0 592.1 L1379.5 593.3 L1380.0 594.6 L1380.5 596.0 L1381.0 597.4 L1381.5 598.8 L1382.0 600.2 L1382.5 601.6 L1383.0 603.1 L1383.5 604.5 L1384.0 606.0 L1384.5 607.6 L1385.0 609.1 L1385.5 610.6 L1386.0 612.1 L1386.5 613.6 L1387.0 615.2 L1387.5 616.7 L1388.0 618.2 L1388.5 619.7 L1389.0 621.2 L1389.5 622.6 L1390.0 623.9 L1390.5 625.1 L1391.0 626.2 L1391.5 627.4 L1392.0 628.6 L1392.5 629.9 L1393.0 631.4 L1393.5 633.2 L1394.0 635.2 L1394.5 637.3 L1395.0 639.4 L1395.5 641.6 L1396.0 643.8 L1396.5 646.3 L1397.0 650.2 L1397.5 653.6 L1398.0 654.1 L1398.5 654.3 L1399.0 654.1 L1399.5 652.8 L1400.0 651.1 L1400.5 649.2 L1401.0 646.4 L1401.5 640.8 L1402.0 634.2 L1402.5 629.6 L1403.0 625.8 L1403.5 622.6 L1404.0 620.1 L1404.5 617.9 L1405.0 616.1 L1405.5 614.5 L1406.0 613.1 L1406.5 612.1 L1407.0 611.2 L1407.5 610.3 L1408.0 609.6 L1408.5 609.1 L1409.0 608.9 L1409.5 608.8 L1410.0 608.7 L1410.5 608.6 L1411.0 608.6 L1411.5 608.8 L1412.0 609.6 L1412.5 610.7 L1413.0 612.0 L1413.5 613.3 L1414.0 614.9 L1414.5 616.7 L1415.0 618.0 L1415.5 618.6 L1416.0 619.2 L1416.5 619.6 L1417.0 619.9 L1417.5 619.9 L1418.0 619.0 L1418.5 617.4 L1419.0 615.9 L1419.5 614.7 L1420.0 613.5 L1420.5 612.5 L1421.0 611.7 L1421.5 611.4 L1422.0 611.1 L1422.5 610.9 L1423.0 610.8 L1423.5 610.7 L1424.0 610.6 L1424.5 610.7 L1425.0 610.9 L1425.5 611.2 L1426.0 611.6 L1426.5 611.9 L1427.0 612.2 L1427.5 612.3 L1428.0 612.3 L1428.5 612.3 L1429.0 612.2 L1429.5 612.1 L1430.0 612.0 L1430.5 611.4 L1431.0 609.6 L1431.5 607.5 L1432.0 605.4 L1432.5 602.8 L1433.0 600.3 L1433.5 598.7 L1434.0 597.8 L1434.5 597.0 L1435.0 596.6 L1435.5 596.7 L1436.0 597.0 L1436.5 597.5 L1437.0 598.1 L1437.5 599.3 L1438.0 600.9 L1438.5 602.7 L1439.0 604.4 L1439.5 605.8 L1440.0 607.0 L1440.5 608.0 L1441.0 609.1 L1441.5 610.0 L1442.0 611.0 L1442.5 611.8 L1443.0 612.7 L1443.5 613.4 L1444.0 614.1 L1444.5 614.8 L1445.0 615.5 L1445.5 616.2 L1446.0 617.1 L1446.5 618.1 L1447.0 619.2 L1447.5 620.5 L1448.0 621.9 L1448.5 623.5 L1449.0 625.3 L1449.5 627.7 L1450.0 630.4 L1450.5 633.1 L1451.0 635.8 L1451.5 638.7 L1452.0 641.4 L1452.5 642.9 L1453.0 643.8 L1453.5 644.4 L1454.0 644.4 L1454.5 643.3 L1455.0 641.5 L1455.5 639.3 L1456.0 636.0 L1456.5 631.4 L1457.0 626.0 L1457.5 619.8 L1458.0 612.0 L1458.5 604.1 L1459.0 595.8 L1459.5 591.6 L1460.0 590.7 L1460.0 590.7 L1460.0 646.7 L93.0 646.7 Z" fill="#f04e52" fill-opacity="0.7" clip-path="url(#cneg)"/>
  <path d="M93.0 600.9 L93.5 611.3 L94.0 620.0 L94.5 626.2 L95.0 631.3 L95.5 635.3 L96.0 638.0 L96.5 639.6 L97.0 640.9 L97.5 642.0 L98.0 642.8 L98.5 643.2 L99.0 643.4 L99.5 643.6 L100.0 643.8 L100.5 643.9 L101.0 644.0 L101.5 644.1 L102.0 644.1 L102.5 644.1 L103.0 644.1 L103.5 644.1 L104.0 644.1 L104.5 644.1 L105.0 644.1 L105.5 644.1 L106.0 644.1 L106.5 644.0 L107.0 643.6 L107.5 643.0 L108.0 642.3 L108.5 641.8 L109.0 641.4 L109.5 641.0 L110.0 640.7 L110.5 640.4 L111.0 640.2 L111.5 640.2 L112.0 640.3 L112.5 640.5 L113.0 640.8 L113.5 641.0 L114.0 641.3 L114.5 641.8 L115.0 642.5 L115.5 643.1 L116.0 643.7 L116.5 644.2 L117.0 644.7 L117.5 645.1 L118.0 645.5 L118.5 645.7 L119.0 645.8 L119.5 645.4 L120.0 644.5 L120.5 643.5 L121.0 641.9 L121.5 639.2 L122.0 635.8 L122.5 632.2 L123.0 628.8 L123.5 625.7 L124.0 622.5 L124.5 619.3 L125.0 616.3 L125.5 613.6 L126.0 611.3 L126.5 609.0 L127.0 606.8 L127.5 605.1 L128.0 603.8 L128.5 603.1 L129.0 602.6 L129.5 602.2 L130.0 602.1 L130.5 602.6 L131.0 603.6 L131.5 604.9 L132.0 606.8 L132.5 609.7 L133.0 612.8 L133.5 615.7 L134.0 618.7 L134.5 621.4 L135.0 623.0 L135.5 623.6 L136.0 624.0 L136.5 624.0 L137.0 622.3 L137.5 619.7 L138.0 615.9 L138.5 610.8 L139.0 605.9 L139.5 602.4 L140.0 599.2 L140.5 596.7 L141.0 595.4 L141.5 594.7 L142.0 594.2 L142.5 594.2 L143.0 594.8 L143.5 595.8 L144.0 596.8 L144.5 598.0 L145.0 599.6 L145.5 601.2 L146.0 602.7 L146.5 604.1 L147.0 605.4 L147.5 606.8 L148.0 608.2 L148.5 609.5 L149.0 610.9 L149.5 612.3 L150.0 613.9 L150.5 615.5 L151.0 617.2 L151.5 618.8 L152.0 620.3 L152.5 621.6 L153.0 622.6 L153.5 623.6 L154.0 624.4 L154.5 624.6 L155.0 623.6 L155.5 621.3 L156.0 617.4 L156.5 607.7 L157.0 599.1 L157.5 594.0 L158.0 590.5 L158.5 589.1 L159.0 588.1 L159.5 587.4 L160.0 587.0 L160.5 586.9 L161.0 586.9 L161.5 586.9 L162.0 586.9 L162.5 587.0 L163.0 587.0 L163.5 587.0 L164.0 587.1 L164.5 587.2 L165.0 587.5 L165.5 587.8 L166.0 588.1 L166.5 588.5 L167.0 589.0 L167.5 589.5 L168.0 590.2 L168.5 591.1 L169.0 592.1 L169.5 593.0 L170.0 593.9 L170.5 595.0 L171.0 596.1 L171.5 597.0 L172.0 597.5 L172.5 597.5 L173.0 597.2 L173.5 596.6 L174.0 596.0 L174.5 595.3 L175.0 594.7 L175.5 593.9 L176.0 593.0 L176.5 592.2 L177.0 591.5 L177.5 591.2 L178.0 590.9 L178.5 590.7 L179.0 590.5 L179.5 590.4 L180.0 590.7 L180.5 591.5 L181.0 592.4 L181.5 593.6 L182.0 595.6 L182.5 597.9 L183.0 600.1 L183.5 601.9 L184.0 603.5 L184.5 605.1 L185.0 606.5 L185.5 608.0 L186.0 609.4 L186.5 610.8 L187.0 612.2 L187.5 613.7 L188.0 615.2 L188.5 616.5 L189.0 617.6 L189.5 618.5 L190.0 619.2 L190.5 619.8 L191.0 619.9 L191.5 619.3 L192.0 618.3 L192.5 617.1 L193.0 615.3 L193.5 612.7 L194.0 610.2 L194.5 608.5 L195.0 606.9 L195.5 605.7 L196.0 605.1 L196.5 605.0 L197.0 604.8 L197.5 604.9 L198.0 605.8 L198.5 607.0 L199.0 608.2 L199.5 609.8 L200.0 611.5 L200.5 613.2 L201.0 614.5 L201.5 615.5 L202.0 616.5 L202.5 617.2 L203.0 617.5 L203.5 617.4 L204.0 617.2 L204.5 616.8 L205.0 616.4 L205.5 615.9 L206.0 615.4 L206.5 614.7 L207.0 614.0 L207.5 613.1 L208.0 612.3 L208.5 611.3 L209.0 610.3 L209.5 609.1 L210.0 607.8 L210.5 606.4 L211.0 604.8 L211.5 603.0 L212.0 600.8 L212.5 598.6 L213.0 597.2 L213.5 595.9 L214.0 594.9 L214.5 594.5 L215.0 594.6 L215.5 594.7 L216.0 594.9 L216.5 595.2 L217.0 595.8 L217.5 596.5 L218.0 597.4 L218.5 598.1 L219.0 598.6 L219.5 599.2 L220.0 599.6 L220.5 600.0 L221.0 600.1 L221.5 599.9 L222.0 599.3 L222.5 598.4 L223.0 595.2 L223.5 590.8 L224.0 587.4 L224.5 584.6 L225.0 583.5 L225.5 582.7 L226.0 582.1 L226.5 581.7 L227.0 581.5 L227.5 581.5 L228.0 581.5 L228.5 581.5 L229.0 581.5 L229.5 581.5 L230.0 581.5 L230.5 581.5 L231.0 581.5 L231.5 581.7 L232.0 582.0 L232.5 582.4 L233.0 582.9 L233.5 583.4 L234.0 584.0 L234.5 584.9 L235.0 586.1 L235.5 587.6 L236.0 589.3 L236.5 591.1 L237.0 593.4 L237.5 595.8 L238.0 597.8 L238.5 598.9 L239.0 599.8 L239.5 600.1 L240.0 599.2 L240.5 597.6 L241.0 595.9 L241.5 593.4 L242.0 590.9 L242.5 589.0 L243.0 587.7 L243.5 586.5 L244.0 585.7 L244.5 585.4 L245.0 585.4 L245.5 585.5 L246.0 585.7 L246.5 585.9 L247.0 586.3 L247.5 587.2 L248.0 588.3 L248.5 589.3 L249.0 590.1 L249.5 590.6 L250.0 591.1 L250.5 591.5 L251.0 591.6 L251.5 591.4 L252.0 591.0 L252.5 590.4 L253.0 589.7 L253.5 589.1 L254.0 588.3 L254.5 587.4 L255.0 586.5 L255.5 585.7 L256.0 585.4 L256.5 585.2 L257.0 585.1 L257.5 585.1 L258.0 585.0 L258.5 585.3 L259.0 586.3 L259.5 587.6 L260.0 589.5 L260.5 593.2 L261.0 596.4 L261.5 597.9 L262.0 599.2 L262.5 600.0 L263.0 600.1 L263.5 600.1 L264.0 600.1 L264.5 600.1 L265.0 600.1 L265.5 600.1 L266.0 600.0 L266.5 599.8 L267.0 599.4 L267.5 599.1 L268.0 598.7 L268.5 598.3 L269.0 597.9 L269.5 597.6 L270.0 597.3 L270.5 597.0 L271.0 596.6 L271.5 596.3 L272.0 596.0 L272.5 595.7 L273.0 595.4 L273.5 595.1 L274.0 594.9 L274.5 594.7 L275.0 594.5 L275.5 594.3 L276.0 594.2 L276.5 594.2 L277.0 594.4 L277.5 594.9 L278.0 595.6 L278.5 596.2 L279.0 596.9 L279.5 597.6 L280.0 598.5 L280.5 599.4 L281.0 600.4 L281.5 601.3 L282.0 602.2 L282.5 603.0 L283.0 603.9 L283.5 604.7 L284.0 605.6 L284.5 606.3 L285.0 607.0 L285.5 607.6 L286.0 608.1 L286.5 608.5 L287.0 608.9 L287.5 609.2 L288.0 609.4 L288.5 609.3 L289.0 608.6 L289.5 607.6 L290.0 606.6 L290.5 605.0 L291.0 603.3 L291.5 601.9 L292.0 601.0 L292.5 600.2 L293.0 599.5 L293.5 599.3 L294.0 599.3 L294.5 599.4 L295.0 599.7 L295.5 599.9 L296.0 600.2 L296.5 600.6 L297.0 601.1 L297.5 601.7 L298.0 602.2 L298.5 602.6 L299.0 602.9 L299.5 603.1 L300.0 603.2 L300.5 603.3 L301.0 603.4 L301.5 603.4 L302.0 603.5 L302.5 603.5 L303.0 603.4 L303.5 603.2 L304.0 602.9 L304.5 602.5 L305.0 602.1 L305.5 601.6 L306.0 601.2 L306.5 600.8 L307.0 600.4 L307.5 599.9 L308.0 599.4 L308.5 599.0 L309.0 598.6 L309.5 598.3 L310.0 598.1 L310.5 597.8 L311.0 597.6 L311.5 597.4 L312.0 597.3 L312.5 597.2 L313.0 597.3 L313.5 597.5 L314.0 598.0 L314.5 598.6 L315.0 599.4 L315.5 601.7 L316.0 605.3 L316.5 608.8 L317.0 611.8 L317.5 615.1 L318.0 617.6 L318.5 618.3 L319.0 618.6 L319.5 618.7 L320.0 617.3 L320.5 614.1 L321.0 608.6 L321.5 599.9 L322.0 594.5 L322.5 590.6 L323.0 588.8 L323.5 587.9 L324.0 587.2 L324.5 586.8 L325.0 586.6 L325.5 586.5 L326.0 586.5 L326.5 586.4 L327.0 586.4 L327.5 586.4 L328.0 586.4 L328.5 586.4 L329.0 586.6 L329.5 586.8 L330.0 587.1 L330.5 587.5 L331.0 587.9 L331.5 588.5 L332.0 589.5 L332.5 590.8 L333.0 592.4 L333.5 595.4 L334.0 600.3 L334.5 607.0 L335.0 616.4 L335.5 622.3 L336.0 626.6 L336.5 629.9 L337.0 632.7 L337.5 635.0 L338.0 637.0 L338.5 638.7 L339.0 640.0 L339.5 641.1 L340.0 642.0 L340.5 642.8 L341.0 643.5 L341.5 644.1 L342.0 644.6 L342.5 645.0 L343.0 645.4 L343.5 645.7 L344.0 646.0 L344.5 646.2 L345.0 646.3 L345.5 646.4 L346.0 646.5 L346.5 646.5 L347.0 646.6 L347.5 646.6 L348.0 646.6 L348.5 646.6 L349.0 646.6 L349.5 646.4 L350.0 646.2 L350.5 645.9 L351.0 645.5 L351.5 645.2 L352.0 644.8 L352.5 644.4 L353.0 643.8 L353.5 643.2 L354.0 642.5 L354.5 641.8 L355.0 641.0 L355.5 640.2 L356.0 639.3 L356.5 638.4 L357.0 637.3 L357.5 636.1 L358.0 634.8 L358.5 633.4 L359.0 631.7 L359.5 629.6 L360.0 627.2 L360.5 624.6 L361.0 621.8 L361.5 618.9 L362.0 616.0 L362.5 612.8 L363.0 609.2 L363.5 605.5 L364.0 602.1 L364.5 599.3 L365.0 597.0 L365.5 594.7 L366.0 592.8 L366.5 591.2 L367.0 590.0 L367.5 589.3 L368.0 588.6 L368.5 588.1 L369.0 587.6 L369.5 587.2 L370.0 586.9 L370.5 586.5 L371.0 586.2 L371.5 585.9 L372.0 585.6 L372.5 585.3 L373.0 585.1 L373.5 584.9 L374.0 584.6 L374.5 584.4 L375.0 584.2 L375.5 583.9 L376.0 583.7 L376.5 583.4 L377.0 583.2 L377.5 582.9 L378.0 582.8 L378.5 582.7 L379.0 582.7 L379.5 582.7 L380.0 582.7 L380.5 582.8 L381.0 582.9 L381.5 583.0 L382.0 583.1 L382.5 583.2 L383.0 583.5 L383.5 583.9 L384.0 584.4 L384.5 585.0 L385.0 585.6 L385.5 586.3 L386.0 587.0 L386.5 587.8 L387.0 588.8 L387.5 589.9 L388.0 591.1 L388.5 592.6 L389.0 594.8 L389.5 597.0 L390.0 598.7 L390.5 600.0 L391.0 601.2 L391.5 601.8 L392.0 601.7 L392.5 601.5 L393.0 601.2 L393.5 600.5 L394.0 598.1 L394.5 595.0 L395.0 592.4 L395.5 590.5 L396.0 588.9 L396.5 587.7 L397.0 587.0 L397.5 586.4 L398.0 586.0 L398.5 585.7 L399.0 585.8 L399.5 586.3 L400.0 587.1 L400.5 588.1 L401.0 589.3 L401.5 591.1 L402.0 593.2 L402.5 595.4 L403.0 597.8 L403.5 600.6 L404.0 603.6 L404.5 606.8 L405.0 610.2 L405.5 613.8 L406.0 617.9 L406.5 622.1 L407.0 626.0 L407.5 630.0 L408.0 633.8 L408.5 636.4 L409.0 638.0 L409.5 639.4 L410.0 640.1 L410.5 640.0 L411.0 638.7 L411.5 636.7 L412.0 634.3 L412.5 629.9 L413.0 624.4 L413.5 620.1 L414.0 617.8 L414.5 615.9 L415.0 614.7 L415.5 614.4 L416.0 614.3 L416.5 614.2 L417.0 614.2 L417.5 614.1 L418.0 614.2 L418.5 614.3 L419.0 614.7 L419.5 615.2 L420.0 615.7 L420.5 616.3 L421.0 617.2 L421.5 618.3 L422.0 619.5 L422.5 620.9 L423.0 622.4 L423.5 623.9 L424.0 625.6 L424.5 627.5 L425.0 629.5 L425.5 631.6 L426.0 634.3 L426.5 637.2 L427.0 639.5 L427.5 640.7 L428.0 641.6 L428.5 642.3 L429.0 642.3 L429.5 641.2 L430.0 639.1 L430.5 636.6 L431.0 633.0 L431.5 628.0 L432.0 623.0 L432.5 619.3 L433.0 616.0 L433.5 612.9 L434.0 610.1 L434.5 607.4 L435.0 604.7 L435.5 602.1 L436.0 599.6 L436.5 597.3 L437.0 595.2 L437.5 593.5 L438.0 591.8 L438.5 590.2 L439.0 589.0 L439.5 588.2 L440.0 587.9 L440.5 587.6 L441.0 587.4 L441.5 587.6 L442.0 588.4 L442.5 589.6 L443.0 591.2 L443.5 594.2 L444.0 598.3 L444.5 602.1 L445.0 605.4 L445.5 608.7 L446.0 611.7 L446.5 614.1 L447.0 615.7 L447.5 617.2 L448.0 618.5 L448.5 619.6 L449.0 620.6 L449.5 621.4 L450.0 622.1 L450.5 622.8 L451.0 623.4 L451.5 624.0 L452.0 624.5 L452.5 624.9 L453.0 625.1 L453.5 625.1 L454.0 622.8 L454.5 617.2 L455.0 572.5 L455.5 533.3 L456.0 514.6 L456.5 499.7 L457.0 493.3 L457.5 490.1 L458.0 488.4 L458.5 487.8 L459.0 487.3 L459.5 487.0 L460.0 486.9 L460.5 486.9 L461.0 486.9 L461.5 487.0 L462.0 487.1 L462.5 487.3 L463.0 487.5 L463.5 487.7 L464.0 488.0 L464.5 488.4 L465.0 489.0 L465.5 490.3 L466.0 494.1 L466.5 504.9 L467.0 529.5 L467.5 554.4 L468.0 583.7 L468.5 622.6 L469.0 657.2 L469.5 674.2 L470.0 682.5 L470.5 687.1 L471.0 689.7 L471.5 689.6 L472.0 686.4 L472.5 680.4 L473.0 672.8 L473.5 665.2 L474.0 658.1 L474.5 651.7 L475.0 646.0 L475.5 641.0 L476.0 637.6 L476.5 635.2 L477.0 633.5 L477.5 633.0 L478.0 634.2 L478.5 636.3 L479.0 638.4 L479.5 640.4 L480.0 642.4 L480.5 644.2 L481.0 645.7 L481.5 647.3 L482.0 649.3 L482.5 650.9 L483.0 651.9 L483.5 652.6 L484.0 652.6 L484.5 651.7 L485.0 650.6 L485.5 649.3 L486.0 647.0 L486.5 636.6 L487.0 609.5 L487.5 601.5 L488.0 597.9 L488.5 596.1 L489.0 594.9 L489.5 594.5 L490.0 595.1 L490.5 596.3 L491.0 597.7 L491.5 599.2 L492.0 601.1 L492.5 603.0 L493.0 604.7 L493.5 606.1 L494.0 607.5 L494.5 608.7 L495.0 609.5 L495.5 609.7 L496.0 609.0 L496.5 607.8 L497.0 605.0 L497.5 600.1 L498.0 595.5 L498.5 593.1 L499.0 591.3 L499.5 589.9 L500.0 588.8 L500.5 588.2 L501.0 587.7 L501.5 587.3 L502.0 587.0 L502.5 586.7 L503.0 586.6 L503.5 586.6 L504.0 586.6 L504.5 586.8 L505.0 587.0 L505.5 587.2 L506.0 587.4 L506.5 587.6 L507.0 587.8 L507.5 587.9 L508.0 588.0 L508.5 588.0 L509.0 588.1 L509.5 588.1 L510.0 588.1 L510.5 588.2 L511.0 588.2 L511.5 588.2 L512.0 588.2 L512.5 588.2 L513.0 588.2 L513.5 588.2 L514.0 588.2 L514.5 588.2 L515.0 588.2 L515.5 588.1 L516.0 588.1 L516.5 588.0 L517.0 588.0 L517.5 587.9 L518.0 587.8 L518.5 587.7 L519.0 587.4 L519.5 587.0 L520.0 586.7 L520.5 586.2 L521.0 585.8 L521.5 585.3 L522.0 584.7 L522.5 584.0 L523.0 583.3 L523.5 582.5 L524.0 581.7 L524.5 580.8 L525.0 579.8 L525.5 578.7 L526.0 577.7 L526.5 576.6 L527.0 575.6 L527.5 574.5 L528.0 573.4 L528.5 572.2 L529.0 571.1 L529.5 570.1 L530.0 569.3 L530.5 568.7 L531.0 568.1 L531.5 567.6 L532.0 567.3 L532.5 567.1 L533.0 567.2 L533.5 567.7 L534.0 568.5 L534.5 569.4 L535.0 570.6 L535.5 572.4 L536.0 574.7 L536.5 576.8 L537.0 578.5 L537.5 579.6 L538.0 580.6 L538.5 581.3 L539.0 581.4 L539.5 580.3 L540.0 578.3 L540.5 573.3 L541.0 565.2 L541.5 559.5 L542.0 555.9 L542.5 553.0 L543.0 551.2 L543.5 550.4 L544.0 549.7 L544.5 549.4 L545.0 549.4 L545.5 549.7 L546.0 550.4 L546.5 551.3 L547.0 552.2 L547.5 553.7 L548.0 555.7 L548.5 557.9 L549.0 560.2 L549.5 562.6 L550.0 565.1 L550.5 568.0 L551.0 571.2 L551.5 575.1 L552.0 580.4 L552.5 587.6 L553.0 595.6 L553.5 603.2 L554.0 610.3 L554.5 617.3 L555.0 621.6 L555.5 623.9 L556.0 625.7 L556.5 626.6 L557.0 626.3 L557.5 624.9 L558.0 622.8 L558.5 620.2 L559.0 616.0 L559.5 610.4 L560.0 604.5 L560.5 598.3 L561.0 591.3 L561.5 584.1 L562.0 577.1 L562.5 571.1 L563.0 566.0 L563.5 561.2 L564.0 556.8 L564.5 552.8 L565.0 549.1 L565.5 545.7 L566.0 542.3 L566.5 539.2 L567.0 536.6 L567.5 534.6 L568.0 533.3 L568.5 532.2 L569.0 531.3 L569.5 530.6 L570.0 530.1 L570.5 529.9 L571.0 529.7 L571.5 529.6 L572.0 529.4 L572.5 529.3 L573.0 529.3 L573.5 529.2 L574.0 529.1 L574.5 529.0 L575.0 528.9 L575.5 528.8 L576.0 528.7 L576.5 528.7 L577.0 528.6 L577.5 528.5 L578.0 528.5 L578.5 528.5 L579.0 528.5 L579.5 528.5 L580.0 528.5 L580.5 528.5 L581.0 528.5 L581.5 528.5 L582.0 528.5 L582.5 528.6 L583.0 529.1 L583.5 529.8 L584.0 530.7 L584.5 532.8 L585.0 536.4 L585.5 539.9 L586.0 542.9 L586.5 545.9 L587.0 548.9 L587.5 551.9 L588.0 554.9 L588.5 558.1 L589.0 561.5 L589.5 564.8 L590.0 567.7 L590.5 569.8 L591.0 571.5 L591.5 573.1 L592.0 574.4 L592.5 575.3 L593.0 575.7 L593.5 575.5 L594.0 575.1 L594.5 574.4 L595.0 573.6 L595.5 572.6 L596.0 571.3 L596.5 569.5 L597.0 567.6 L597.5 565.5 L598.0 563.4 L598.5 561.4 L599.0 559.2 L599.5 556.9 L600.0 554.6 L600.5 552.2 L601.0 549.9 L601.5 547.7 L602.0 545.5 L602.5 543.1 L603.0 540.8 L603.5 538.9 L604.0 537.7 L604.5 536.9 L605.0 536.5 L605.5 536.5 L606.0 537.0 L606.5 537.7 L607.0 540.0 L607.5 543.9 L608.0 548.4 L608.5 554.1 L609.0 559.5 L609.5 563.0 L610.0 565.6 L610.5 567.9 L611.0 569.4 L611.5 569.8 L612.0 569.2 L612.5 568.2 L613.0 567.0 L613.5 565.8 L614.0 564.2 L614.5 562.6 L615.0 561.1 L615.5 560.0 L616.0 559.0 L616.5 558.1 L617.0 557.5 L617.5 557.4 L618.0 557.6 L618.5 557.9 L619.0 558.3 L619.5 558.8 L620.0 559.6 L620.5 561.1 L621.0 563.0 L621.5 565.3 L622.0 568.7 L622.5 572.6 L623.0 576.5 L623.5 580.3 L624.0 584.2 L624.5 588.5 L625.0 593.3 L625.5 599.7 L626.0 608.0 L626.5 615.3 L627.0 619.4 L627.5 622.2 L628.0 624.2 L628.5 625.1 L629.0 625.4 L629.5 625.5 L630.0 625.6 L630.5 625.6 L631.0 625.5 L631.5 625.3 L632.0 624.9 L632.5 624.4 L633.0 624.0 L633.5 623.6 L634.0 623.1 L634.5 622.6 L635.0 621.9 L635.5 620.8 L636.0 618.5 L636.5 615.2 L637.0 610.7 L637.5 600.8 L638.0 588.5 L638.5 578.7 L639.0 569.9 L639.5 565.1 L640.0 562.1 L640.5 560.4 L641.0 559.8 L641.5 559.5 L642.0 559.2 L642.5 559.1 L643.0 559.2 L643.5 559.9 L644.0 560.9 L644.5 562.1 L645.0 563.2 L645.5 564.3 L646.0 565.6 L646.5 566.9 L647.0 568.3 L647.5 569.6 L648.0 570.8 L648.5 572.0 L649.0 573.1 L649.5 574.3 L650.0 575.4 L650.5 576.5 L651.0 577.4 L651.5 578.1 L652.0 578.6 L652.5 579.0 L653.0 579.4 L653.5 579.8 L654.0 579.9 L654.5 579.9 L655.0 579.7 L655.5 579.4 L656.0 578.9 L656.5 578.5 L657.0 577.9 L657.5 577.1 L658.0 576.1 L658.5 575.3 L659.0 574.8 L659.5 574.6 L660.0 574.5 L660.5 574.4 L661.0 574.3 L661.5 574.9 L662.0 576.3 L662.5 578.3 L663.0 581.8 L663.5 588.6 L664.0 594.1 L664.5 597.0 L665.0 599.3 L665.5 600.6 L666.0 600.7 L666.5 600.7 L667.0 600.5 L667.5 600.3 L668.0 600.1 L668.5 599.8 L669.0 599.5 L669.5 599.1 L670.0 598.6 L670.5 598.0 L671.0 597.4 L671.5 596.7 L672.0 596.0 L672.5 595.1 L673.0 594.1 L673.5 593.0 L674.0 591.7 L674.5 590.5 L675.0 589.3 L675.5 588.1 L676.0 586.9 L676.5 585.7 L677.0 584.5 L677.5 583.4 L678.0 582.3 L678.5 581.3 L679.0 580.3 L679.5 579.5 L680.0 578.6 L680.5 577.8 L681.0 577.0 L681.5 576.4 L682.0 575.8 L682.5 575.4 L683.0 574.9 L683.5 574.5 L684.0 574.2 L684.5 574.0 L685.0 574.1 L685.5 574.6 L686.0 575.6 L686.5 577.2 L687.0 583.5 L687.5 593.2 L688.0 607.2 L688.5 619.6 L689.0 626.9 L689.5 631.9 L690.0 634.0 L690.5 635.2 L691.0 635.8 L691.5 635.4 L692.0 634.1 L692.5 632.2 L693.0 630.3 L693.5 628.7 L694.0 627.0 L694.5 625.3 L695.0 623.5 L695.5 621.7 L696.0 619.9 L696.5 618.1 L697.0 616.4 L697.5 614.6 L698.0 612.8 L698.5 611.1 L699.0 609.3 L699.5 607.6 L700.0 605.9 L700.5 604.2 L701.0 602.5 L701.5 600.8 L702.0 599.2 L702.5 597.6 L703.0 596.1 L703.5 594.6 L704.0 593.0 L704.5 591.5 L705.0 590.0 L705.5 588.9 L706.0 588.2 L706.5 587.6 L707.0 587.1 L707.5 586.7 L708.0 586.5 L708.5 586.4 L709.0 586.3 L709.5 586.3 L710.0 586.2 L710.5 586.2 L711.0 586.2 L711.5 586.2 L712.0 586.2 L712.5 586.3 L713.0 586.6 L713.5 586.9 L714.0 587.3 L714.5 587.8 L715.0 588.7 L715.5 590.2 L716.0 592.1 L716.5 594.3 L717.0 598.1 L717.5 603.5 L718.0 609.3 L718.5 614.5 L719.0 620.0 L719.5 622.5 L720.0 623.5 L720.5 624.3 L721.0 624.9 L721.5 625.2 L722.0 625.3 L722.5 625.3 L723.0 625.3 L723.5 625.2 L724.0 625.2 L724.5 625.1 L725.0 625.0 L725.5 624.9 L726.0 624.8 L726.5 624.7 L727.0 624.5 L727.5 624.2 L728.0 623.9 L728.5 623.4 L729.0 622.9 L729.5 622.3 L730.0 621.2 L730.5 619.4 L731.0 617.0 L731.5 614.3 L732.0 611.3 L732.5 607.4 L733.0 602.9 L733.5 598.3 L734.0 594.1 L734.5 589.6 L735.0 585.5 L735.5 582.3 L736.0 579.8 L736.5 577.7 L737.0 576.3 L737.5 575.6 L738.0 575.2 L738.5 574.8 L739.0 574.5 L739.5 574.4 L740.0 574.4 L740.5 574.5 L741.0 574.6 L741.5 574.8 L742.0 575.0 L742.5 575.2 L743.0 575.4 L743.5 575.4 L744.0 575.5 L744.5 575.6 L745.0 575.6 L745.5 575.7 L746.0 575.7 L746.5 575.7 L747.0 574.9 L747.5 573.2 L748.0 571.2 L748.5 569.2 L749.0 566.7 L749.5 564.0 L750.0 561.7 L750.5 560.1 L751.0 558.8 L751.5 557.7 L752.0 556.7 L752.5 555.9 L753.0 555.3 L753.5 554.8 L754.0 554.5 L754.5 554.1 L755.0 553.8 L755.5 553.6 L756.0 553.4 L756.5 553.4 L757.0 553.4 L757.5 553.5 L758.0 553.6 L758.5 553.9 L759.0 554.1 L759.5 554.5 L760.0 555.3 L760.5 556.3 L761.0 557.3 L761.5 558.2 L762.0 558.8 L762.5 559.4 L763.0 560.0 L763.5 560.4 L764.0 560.5 L764.5 560.1 L765.0 559.5 L765.5 558.7 L766.0 557.8 L766.5 556.7 L767.0 555.4 L767.5 554.0 L768.0 552.8 L768.5 552.0 L769.0 551.4 L769.5 550.9 L770.0 550.7 L770.5 550.8 L771.0 551.3 L771.5 552.2 L772.0 553.2 L772.5 554.9 L773.0 557.2 L773.5 559.4 L774.0 561.6 L774.5 563.9 L775.0 566.2 L775.5 568.4 L776.0 570.3 L776.5 571.9 L777.0 573.4 L777.5 574.8 L778.0 576.0 L778.5 577.1 L779.0 578.1 L779.5 578.9 L780.0 579.7 L780.5 580.5 L781.0 581.3 L781.5 582.3 L782.0 583.3 L782.5 584.5 L783.0 585.7 L783.5 587.0 L784.0 588.5 L784.5 590.5 L785.0 592.6 L785.5 594.6 L786.0 596.3 L786.5 597.4 L787.0 598.4 L787.5 599.2 L788.0 599.7 L788.5 599.7 L789.0 599.0 L789.5 598.0 L790.0 596.8 L790.5 595.0 L791.0 592.5 L791.5 590.0 L792.0 588.0 L792.5 586.8 L793.0 585.7 L793.5 584.9 L794.0 584.3 L794.5 584.2 L795.0 584.5 L795.5 585.0 L796.0 585.8 L796.5 587.3 L797.0 590.2 L797.5 593.1 L798.0 595.3 L798.5 597.4 L799.0 599.3 L799.5 600.7 L800.0 601.3 L800.5 601.7 L801.0 601.9 L801.5 601.5 L802.0 599.9 L802.5 597.7 L803.0 593.7 L803.5 588.3 L804.0 584.2 L804.5 582.0 L805.0 580.1 L805.5 579.0 L806.0 578.6 L806.5 578.4 L807.0 578.3 L807.5 578.3 L808.0 580.1 L808.5 583.5 L809.0 589.5 L809.5 599.1 L810.0 606.9 L810.5 612.9 L811.0 617.5 L811.5 619.3 L812.0 620.3 L812.5 620.9 L813.0 621.1 L813.5 620.9 L814.0 620.5 L814.5 620.0 L815.0 619.3 L815.5 618.6 L816.0 617.8 L816.5 616.9 L817.0 615.9 L817.5 614.7 L818.0 613.4 L818.5 611.9 L819.0 610.4 L819.5 608.6 L820.0 606.4 L820.5 603.8 L821.0 601.2 L821.5 598.8 L822.0 596.9 L822.5 595.1 L823.0 593.4 L823.5 592.2 L824.0 591.6 L824.5 591.3 L825.0 591.0 L825.5 590.9 L826.0 591.3 L826.5 592.4 L827.0 593.8 L827.5 595.3 L828.0 597.6 L828.5 600.2 L829.0 602.4 L829.5 603.8 L830.0 604.7 L830.5 605.5 L831.0 605.8 L831.5 605.4 L832.0 603.9 L832.5 602.0 L833.0 600.5 L833.5 598.8 L834.0 597.2 L834.5 595.9 L835.0 595.2 L835.5 594.9 L836.0 594.6 L836.5 594.4 L837.0 594.2 L837.5 594.1 L838.0 594.0 L838.5 594.0 L839.0 594.0 L839.5 594.0 L840.0 594.0 L840.5 594.0 L841.0 594.0 L841.5 594.0 L842.0 594.0 L842.5 594.0 L843.0 594.0 L843.5 594.0 L844.0 593.8 L844.5 592.3 L845.0 590.0 L845.5 587.5 L846.0 584.6 L846.5 581.3 L847.0 578.8 L847.5 577.6 L848.0 576.7 L848.5 576.1 L849.0 575.7 L849.5 575.7 L850.0 575.8 L850.5 576.1 L851.0 576.3 L851.5 576.6 L852.0 577.0 L852.5 577.6 L853.0 578.3 L853.5 579.0 L854.0 579.7 L854.5 580.4 L855.0 581.0 L855.5 581.5 L856.0 582.0 L856.5 582.5 L857.0 583.0 L857.5 583.5 L858.0 584.0 L858.5 584.5 L859.0 585.0 L859.5 585.6 L860.0 586.1 L860.5 586.3 L861.0 586.4 L861.5 586.5 L862.0 586.6 L862.5 586.7 L863.0 586.8 L863.5 586.9 L864.0 587.1 L864.5 587.2 L865.0 587.3 L865.5 587.4 L866.0 587.5 L866.5 587.7 L867.0 587.8 L867.5 588.1 L868.0 588.4 L868.5 588.8 L869.0 589.3 L869.5 589.7 L870.0 590.1 L870.5 590.6 L871.0 591.2 L871.5 591.8 L872.0 592.5 L872.5 593.1 L873.0 593.5 L873.5 593.7 L874.0 593.6 L874.5 593.1 L875.0 592.4 L875.5 591.6 L876.0 590.6 L876.5 589.2 L877.0 586.9 L877.5 584.3 L878.0 582.0 L878.5 580.6 L879.0 579.4 L879.5 578.4 L880.0 577.8 L880.5 577.6 L881.0 578.1 L881.5 578.9 L882.0 580.0 L882.5 582.2 L883.0 586.2 L883.5 591.2 L884.0 596.6 L884.5 603.6 L885.0 611.2 L885.5 618.2 L886.0 624.9 L886.5 631.2 L887.0 636.6 L887.5 640.5 L888.0 643.6 L888.5 646.8 L889.0 650.9 L889.5 654.7 L890.0 656.6 L890.5 658.0 L891.0 659.0 L891.5 659.5 L892.0 659.8 L892.5 660.0 L893.0 660.2 L893.5 660.2 L894.0 660.2 L894.5 660.0 L895.0 659.8 L895.5 659.5 L896.0 659.2 L896.5 658.8 L897.0 658.4 L897.5 657.8 L898.0 657.0 L898.5 655.8 L899.0 653.8 L899.5 649.8 L900.0 644.7 L900.5 637.2 L901.0 628.7 L901.5 620.3 L902.0 611.5 L902.5 606.2 L903.0 603.0 L903.5 601.0 L904.0 600.8 L904.5 600.8 L905.0 600.8 L905.5 602.3 L906.0 606.4 L906.5 611.4 L907.0 618.1 L907.5 626.0 L908.0 633.3 L908.5 639.8 L909.0 645.4 L909.5 649.7 L910.0 653.2 L910.5 656.2 L911.0 658.9 L911.5 661.5 L912.0 663.9 L912.5 666.1 L913.0 667.9 L913.5 669.4 L914.0 670.8 L914.5 672.0 L915.0 673.0 L915.5 673.6 L916.0 673.8 L916.5 674.0 L917.0 674.1 L917.5 673.9 L918.0 672.2 L918.5 669.5 L919.0 663.0 L919.5 653.6 L920.0 641.9 L920.5 630.8 L921.0 627.0 L921.5 625.0 L922.0 624.4 L922.5 624.3 L923.0 624.2 L923.5 624.2 L924.0 624.4 L924.5 625.1 L925.0 626.0 L925.5 627.1 L926.0 628.3 L926.5 629.4 L927.0 630.7 L927.5 632.2 L928.0 633.9 L928.5 635.6 L929.0 637.6 L929.5 639.8 L930.0 642.2 L930.5 644.9 L931.0 648.0 L931.5 652.2 L932.0 656.6 L932.5 659.7 L933.0 661.9 L933.5 663.7 L934.0 665.1 L934.5 665.6 L935.0 665.4 L935.5 664.7 L936.0 663.6 L936.5 660.3 L937.0 655.3 L937.5 648.2 L938.0 623.6 L938.5 607.3 L939.0 600.5 L939.5 597.9 L940.0 596.5 L940.5 595.7 L941.0 595.4 L941.5 595.4 L942.0 595.6 L942.5 595.7 L943.0 595.9 L943.5 596.1 L944.0 596.3 L944.5 596.6 L945.0 596.9 L945.5 597.2 L946.0 597.5 L946.5 597.8 L947.0 597.9 L947.5 597.8 L948.0 597.2 L948.5 596.3 L949.0 595.2 L949.5 594.1 L950.0 593.3 L950.5 592.3 L951.0 591.4 L951.5 590.6 L952.0 590.1 L952.5 590.0 L953.0 590.0 L953.5 590.1 L954.0 590.1 L954.5 590.2 L955.0 590.4 L955.5 590.7 L956.0 591.1 L956.5 591.6 L957.0 592.2 L957.5 592.6 L958.0 592.8 L958.5 592.8 L959.0 592.8 L959.5 592.7 L960.0 592.6 L960.5 592.4 L961.0 592.3 L961.5 592.1 L962.0 591.7 L962.5 591.1 L963.0 590.3 L963.5 589.3 L964.0 588.2 L964.5 587.1 L965.0 586.1 L965.5 585.0 L966.0 583.8 L966.5 582.6 L967.0 581.4 L967.5 580.2 L968.0 579.2 L968.5 578.2 L969.0 577.3 L969.5 576.3 L970.0 575.5 L970.5 574.9 L971.0 574.7 L971.5 574.8 L972.0 574.8 L972.5 574.9 L973.0 575.0 L973.5 575.4 L974.0 576.3 L974.5 577.6 L975.0 578.9 L975.5 580.2 L976.0 581.6 L976.5 583.1 L977.0 584.7 L977.5 586.3 L978.0 587.9 L978.5 589.5 L979.0 591.1 L979.5 592.8 L980.0 594.6 L980.5 596.5 L981.0 598.9 L981.5 601.3 L982.0 603.2 L982.5 604.3 L983.0 605.1 L983.5 605.7 L984.0 605.9 L984.5 605.4 L985.0 604.2 L985.5 602.6 L986.0 600.4 L986.5 596.8 L987.0 592.7 L987.5 589.3 L988.0 585.9 L988.5 583.2 L989.0 582.1 L989.5 581.3 L990.0 581.0 L990.5 581.6 L991.0 583.4 L991.5 586.6 L992.0 593.8 L992.5 601.8 L993.0 611.0 L993.5 619.6 L994.0 624.1 L994.5 627.2 L995.0 629.4 L995.5 630.1 L996.0 629.9 L996.5 629.5 L997.0 629.0 L997.5 628.4 L998.0 627.7 L998.5 626.7 L999.0 625.6 L999.5 624.3 L1000.0 623.0 L1000.5 621.6 L1001.0 620.1 L1001.5 618.4 L1002.0 616.5 L1002.5 614.6 L1003.0 612.6 L1003.5 610.4 L1004.0 607.9 L1004.5 605.4 L1005.0 603.1 L1005.5 601.5 L1006.0 599.9 L1006.5 598.5 L1007.0 597.6 L1007.5 597.4 L1008.0 597.4 L1008.5 597.4 L1009.0 597.4 L1009.5 597.5 L1010.0 598.2 L1010.5 599.5 L1011.0 601.1 L1011.5 602.9 L1012.0 604.7 L1012.5 607.0 L1013.0 609.6 L1013.5 612.5 L1014.0 615.7 L1014.5 619.4 L1015.0 623.6 L1015.5 628.2 L1016.0 634.2 L1016.5 640.0 L1017.0 643.5 L1017.5 647.0 L1018.0 656.5 L1018.5 663.0 L1019.0 666.5 L1019.5 668.2 L1020.0 668.7 L1020.5 669.0 L1021.0 668.9 L1021.5 667.8 L1022.0 665.7 L1022.5 662.9 L1023.0 658.4 L1023.5 653.6 L1024.0 649.0 L1024.5 644.0 L1025.0 638.8 L1025.5 633.5 L1026.0 628.6 L1026.5 623.7 L1027.0 619.0 L1027.5 614.9 L1028.0 611.4 L1028.5 608.1 L1029.0 605.6 L1029.5 604.4 L1030.0 603.6 L1030.5 603.0 L1031.0 602.5 L1031.5 602.2 L1032.0 602.2 L1032.5 602.3 L1033.0 602.5 L1033.5 602.7 L1034.0 603.1 L1034.5 603.4 L1035.0 603.7 L1035.5 604.0 L1036.0 604.4 L1036.5 604.9 L1037.0 605.3 L1037.5 605.5 L1038.0 605.5 L1038.5 605.0 L1039.0 604.2 L1039.5 603.0 L1040.0 601.4 L1040.5 597.4 L1041.0 592.1 L1041.5 587.0 L1042.0 581.9 L1042.5 577.1 L1043.0 574.6 L1043.5 573.3 L1044.0 572.4 L1044.5 572.0 L1045.0 572.2 L1045.5 572.5 L1046.0 573.1 L1046.5 573.9 L1047.0 575.6 L1047.5 578.0 L1048.0 580.5 L1048.5 583.2 L1049.0 586.3 L1049.5 589.8 L1050.0 593.5 L1050.5 597.3 L1051.0 601.4 L1051.5 605.8 L1052.0 610.6 L1052.5 615.6 L1053.0 621.1 L1053.5 627.6 L1054.0 633.8 L1054.5 638.9 L1055.0 643.3 L1055.5 646.5 L1056.0 648.2 L1056.5 649.4 L1057.0 649.4 L1057.5 648.6 L1058.0 647.0 L1058.5 641.6 L1059.0 631.6 L1059.5 622.0 L1060.0 612.2 L1060.5 604.1 L1061.0 596.8 L1061.5 590.6 L1062.0 586.2 L1062.5 583.5 L1063.0 581.2 L1063.5 579.4 L1064.0 578.0 L1064.5 576.7 L1065.0 575.7 L1065.5 574.8 L1066.0 574.0 L1066.5 573.2 L1067.0 572.6 L1067.5 572.0 L1068.0 571.4 L1068.5 570.9 L1069.0 570.4 L1069.5 570.0 L1070.0 569.5 L1070.5 569.1 L1071.0 568.8 L1071.5 568.5 L1072.0 568.2 L1072.5 568.0 L1073.0 567.7 L1073.5 567.5 L1074.0 567.3 L1074.5 567.3 L1075.0 567.3 L1075.5 567.5 L1076.0 568.0 L1076.5 568.6 L1077.0 569.4 L1077.5 571.3 L1078.0 574.5 L1078.5 578.1 L1079.0 582.1 L1079.5 587.1 L1080.0 591.6 L1080.5 594.1 L1081.0 595.8 L1081.5 596.8 L1082.0 596.6 L1082.5 595.4 L1083.0 593.5 L1083.5 591.0 L1084.0 586.9 L1084.5 582.2 L1085.0 578.4 L1085.5 575.3 L1086.0 572.4 L1086.5 569.8 L1087.0 567.4 L1087.5 565.3 L1088.0 563.4 L1088.5 561.7 L1089.0 560.1 L1089.5 558.8 L1090.0 557.9 L1090.5 557.2 L1091.0 556.5 L1091.5 555.9 L1092.0 555.4 L1092.5 555.1 L1093.0 555.1 L1093.5 555.2 L1094.0 555.4 L1094.5 555.7 L1095.0 556.2 L1095.5 557.3 L1096.0 559.6 L1096.5 562.4 L1097.0 565.5 L1097.5 569.8 L1098.0 574.0 L1098.5 576.8 L1099.0 578.4 L1099.5 579.4 L1100.0 579.1 L1100.5 578.0 L1101.0 576.5 L1101.5 574.4 L1102.0 571.4 L1102.5 568.3 L1103.0 565.6 L1103.5 563.4 L1104.0 561.3 L1104.5 559.3 L1105.0 557.5 L1105.5 556.0 L1106.0 554.7 L1106.5 553.5 L1107.0 552.4 L1107.5 551.5 L1108.0 550.7 L1108.5 550.1 L1109.0 549.6 L1109.5 549.2 L1110.0 548.8 L1110.5 548.5 L1111.0 548.3 L1111.5 548.3 L1112.0 548.3 L1112.5 548.5 L1113.0 548.6 L1113.5 548.9 L1114.0 549.2 L1114.5 549.5 L1115.0 549.8 L1115.5 550.4 L1116.0 551.0 L1116.5 551.8 L1117.0 552.6 L1117.5 553.6 L1118.0 554.6 L1118.5 555.9 L1119.0 557.3 L1119.5 558.9 L1120.0 560.6 L1120.5 562.3 L1121.0 564.4 L1121.5 566.7 L1122.0 569.0 L1122.5 571.0 L1123.0 572.6 L1123.5 574.0 L1124.0 575.3 L1124.5 576.3 L1125.0 577.0 L1125.5 577.5 L1126.0 578.0 L1126.5 578.4 L1127.0 578.8 L1127.5 579.2 L1128.0 579.8 L1128.5 580.6 L1129.0 581.6 L1129.5 582.7 L1130.0 584.0 L1130.5 585.5 L1131.0 587.4 L1131.5 590.0 L1132.0 592.9 L1132.5 595.9 L1133.0 598.8 L1133.5 601.9 L1134.0 605.1 L1134.5 607.9 L1135.0 610.3 L1135.5 612.3 L1136.0 614.2 L1136.5 615.8 L1137.0 617.2 L1137.5 618.3 L1138.0 619.2 L1138.5 620.0 L1139.0 620.6 L1139.5 621.1 L1140.0 621.4 L1140.5 621.7 L1141.0 621.9 L1141.5 622.0 L1142.0 622.2 L1142.5 622.2 L1143.0 622.3 L1143.5 622.0 L1144.0 621.2 L1144.5 620.2 L1145.0 618.9 L1145.5 617.4 L1146.0 614.8 L1146.5 611.8 L1147.0 609.6 L1147.5 608.5 L1148.0 607.6 L1148.5 607.1 L1149.0 607.2 L1149.5 608.4 L1150.0 610.8 L1150.5 623.2 L1151.0 637.4 L1151.5 648.9 L1152.0 663.6 L1152.5 673.3 L1153.0 679.9 L1153.5 684.8 L1154.0 687.4 L1154.5 688.4 L1155.0 686.7 L1155.5 683.7 L1156.0 679.0 L1156.5 673.9 L1157.0 669.2 L1157.5 664.4 L1158.0 660.1 L1158.5 656.7 L1159.0 654.0 L1159.5 651.5 L1160.0 648.5 L1160.5 644.0 L1161.0 637.6 L1161.5 632.6 L1162.0 628.2 L1162.5 624.5 L1163.0 622.0 L1163.5 620.1 L1164.0 618.5 L1164.5 617.3 L1165.0 616.6 L1165.5 616.2 L1166.0 615.9 L1166.5 615.7 L1167.0 615.5 L1167.5 615.5 L1168.0 615.7 L1168.5 616.1 L1169.0 616.6 L1169.5 617.3 L1170.0 618.0 L1170.5 618.8 L1171.0 620.0 L1171.5 621.5 L1172.0 623.2 L1172.5 625.0 L1173.0 626.8 L1173.5 628.8 L1174.0 631.1 L1174.5 633.5 L1175.0 636.1 L1175.5 638.5 L1176.0 641.3 L1176.5 644.2 L1177.0 646.4 L1177.5 647.5 L1178.0 648.4 L1178.5 649.1 L1179.0 649.7 L1179.5 650.1 L1180.0 650.3 L1180.5 650.5 L1181.0 650.7 L1181.5 650.8 L1182.0 650.9 L1182.5 651.0 L1183.0 651.0 L1183.5 651.0 L1184.0 651.0 L1184.5 650.9 L1185.0 650.7 L1185.5 650.6 L1186.0 650.4 L1186.5 650.2 L1187.0 649.8 L1187.5 649.2 L1188.0 648.3 L1188.5 647.2 L1189.0 645.5 L1189.5 642.5 L1190.0 639.0 L1190.5 635.8 L1191.0 632.7 L1191.5 629.6 L1192.0 626.8 L1192.5 624.3 L1193.0 621.8 L1193.5 619.6 L1194.0 617.7 L1194.5 616.5 L1195.0 615.7 L1195.5 614.9 L1196.0 614.4 L1196.5 614.1 L1197.0 614.2 L1197.5 614.6 L1198.0 615.1 L1198.5 615.8 L1199.0 616.7 L1199.5 618.1 L1200.0 620.0 L1200.5 621.9 L1201.0 623.5 L1201.5 624.6 L1202.0 625.7 L1202.5 626.6 L1203.0 627.2 L1203.5 627.3 L1204.0 625.3 L1204.5 622.0 L1205.0 616.3 L1205.5 608.0 L1206.0 602.3 L1206.5 598.9 L1207.0 596.3 L1207.5 594.6 L1208.0 593.6 L1208.5 592.9 L1209.0 592.4 L1209.5 592.3 L1210.0 592.7 L1210.5 593.3 L1211.0 594.0 L1211.5 594.7 L1212.0 595.3 L1212.5 595.9 L1213.0 596.6 L1213.5 597.3 L1214.0 597.8 L1214.5 598.3 L1215.0 598.5 L1215.5 598.5 L1216.0 598.4 L1216.5 598.2 L1217.0 597.9 L1217.5 597.5 L1218.0 597.2 L1218.5 596.9 L1219.0 596.7 L1219.5 596.4 L1220.0 596.1 L1220.5 595.9 L1221.0 595.7 L1221.5 595.7 L1222.0 595.9 L1222.5 596.5 L1223.0 597.3 L1223.5 598.2 L1224.0 599.2 L1224.5 600.5 L1225.0 602.0 L1225.5 603.1 L1226.0 603.7 L1226.5 603.9 L1227.0 604.1 L1227.5 604.3 L1228.0 604.4 L1228.5 604.5 L1229.0 604.5 L1229.5 604.3 L1230.0 604.1 L1230.5 603.8 L1231.0 603.4 L1231.5 603.1 L1232.0 602.9 L1232.5 602.6 L1233.0 602.4 L1233.5 602.2 L1234.0 602.0 L1234.5 601.9 L1235.0 602.1 L1235.5 602.8 L1236.0 604.1 L1236.5 605.8 L1237.0 610.0 L1237.5 615.6 L1238.0 620.0 L1238.5 624.0 L1239.0 627.5 L1239.5 630.1 L1240.0 632.0 L1240.5 633.7 L1241.0 635.1 L1241.5 636.4 L1242.0 637.6 L1242.5 638.8 L1243.0 639.9 L1243.5 640.9 L1244.0 641.9 L1244.5 642.8 L1245.0 643.7 L1245.5 644.7 L1246.0 645.6 L1246.5 646.7 L1247.0 648.2 L1247.5 650.3 L1248.0 652.7 L1248.5 654.9 L1249.0 657.0 L1249.5 659.2 L1250.0 661.3 L1250.5 663.0 L1251.0 664.2 L1251.5 665.3 L1252.0 665.9 L1252.5 664.9 L1253.0 662.0 L1253.5 658.2 L1254.0 653.9 L1254.5 649.5 L1255.0 632.1 L1255.5 621.7 L1256.0 617.3 L1256.5 615.2 L1257.0 613.8 L1257.5 613.3 L1258.0 613.3 L1258.5 613.5 L1259.0 613.7 L1259.5 614.0 L1260.0 614.2 L1260.5 614.5 L1261.0 614.8 L1261.5 615.1 L1262.0 615.5 L1262.5 615.8 L1263.0 616.2 L1263.5 616.6 L1264.0 616.9 L1264.5 617.3 L1265.0 617.7 L1265.5 618.2 L1266.0 618.6 L1266.5 619.1 L1267.0 619.5 L1267.5 619.9 L1268.0 620.3 L1268.5 620.5 L1269.0 620.8 L1269.5 621.0 L1270.0 621.2 L1270.5 621.3 L1271.0 621.4 L1271.5 621.2 L1272.0 620.3 L1272.5 618.9 L1273.0 617.3 L1273.5 615.5 L1274.0 612.7 L1274.5 609.3 L1275.0 606.1 L1275.5 603.8 L1276.0 602.3 L1276.5 600.9 L1277.0 599.6 L1277.5 598.5 L1278.0 597.4 L1278.5 596.4 L1279.0 595.4 L1279.5 594.5 L1280.0 593.6 L1280.5 592.9 L1281.0 592.4 L1281.5 592.1 L1282.0 591.9 L1282.5 591.8 L1283.0 591.7 L1283.5 591.9 L1284.0 592.8 L1284.5 594.2 L1285.0 596.1 L1285.5 600.5 L1286.0 606.5 L1286.5 612.0 L1287.0 616.3 L1287.5 620.6 L1288.0 624.5 L1288.5 627.9 L1289.0 630.6 L1289.5 633.0 L1290.0 635.1 L1290.5 637.0 L1291.0 638.6 L1291.5 640.0 L1292.0 641.4 L1292.5 642.7 L1293.0 643.7 L1293.5 644.4 L1294.0 644.5 L1294.5 644.3 L1295.0 644.1 L1295.5 643.6 L1296.0 641.7 L1296.5 637.7 L1297.0 632.5 L1297.5 624.7 L1298.0 617.9 L1298.5 613.4 L1299.0 609.7 L1299.5 607.9 L1300.0 606.9 L1300.5 606.2 L1301.0 605.9 L1301.5 606.3 L1302.0 607.6 L1302.5 609.5 L1303.0 611.6 L1303.5 614.5 L1304.0 617.9 L1304.5 620.9 L1305.0 623.8 L1305.5 626.6 L1306.0 628.3 L1306.5 628.3 L1307.0 628.1 L1307.5 627.6 L1308.0 624.7 L1308.5 618.8 L1309.0 612.8 L1309.5 608.0 L1310.0 603.1 L1310.5 599.2 L1311.0 596.9 L1311.5 595.2 L1312.0 593.9 L1312.5 593.3 L1313.0 593.1 L1313.5 592.9 L1314.0 592.9 L1314.5 593.3 L1315.0 595.0 L1315.5 597.3 L1316.0 599.6 L1316.5 602.3 L1317.0 605.5 L1317.5 608.8 L1318.0 612.0 L1318.5 614.7 L1319.0 617.4 L1319.5 620.0 L1320.0 622.4 L1320.5 624.5 L1321.0 626.2 L1321.5 627.7 L1322.0 629.1 L1322.5 630.4 L1323.0 631.5 L1323.5 632.5 L1324.0 633.2 L1324.5 633.6 L1325.0 634.0 L1325.5 634.4 L1326.0 634.7 L1326.5 634.9 L1327.0 635.1 L1327.5 635.2 L1328.0 635.2 L1328.5 635.2 L1329.0 635.2 L1329.5 635.2 L1330.0 635.2 L1330.5 635.2 L1331.0 635.2 L1331.5 635.1 L1332.0 634.7 L1332.5 634.0 L1333.0 633.1 L1333.5 631.6 L1334.0 627.7 L1334.5 624.9 L1335.0 623.7 L1335.5 622.8 L1336.0 622.1 L1336.5 621.7 L1337.0 621.5 L1337.5 621.3 L1338.0 621.2 L1338.5 621.1 L1339.0 621.0 L1339.5 620.9 L1340.0 620.8 L1340.5 620.8 L1341.0 620.7 L1341.5 620.7 L1342.0 620.6 L1342.5 620.6 L1343.0 620.6 L1343.5 620.5 L1344.0 620.3 L1344.5 619.2 L1345.0 617.5 L1345.5 615.5 L1346.0 611.7 L1346.5 607.3 L1347.0 604.8 L1347.5 603.2 L1348.0 602.0 L1348.5 601.1 L1349.0 600.7 L1349.5 600.4 L1350.0 600.2 L1350.5 600.0 L1351.0 599.9 L1351.5 599.7 L1352.0 599.7 L1352.5 599.6 L1353.0 599.5 L1353.5 599.5 L1354.0 599.4 L1354.5 599.4 L1355.0 599.3 L1355.5 599.3 L1356.0 599.3 L1356.5 599.3 L1357.0 599.3 L1357.5 599.4 L1358.0 599.5 L1358.5 599.6 L1359.0 599.8 L1359.5 600.0 L1360.0 600.2 L1360.5 600.6 L1361.0 601.1 L1361.5 601.8 L1362.0 602.5 L1362.5 603.2 L1363.0 604.1 L1363.5 605.1 L1364.0 606.2 L1364.5 607.3 L1365.0 608.2 L1365.5 609.2 L1366.0 610.2 L1366.5 611.0 L1367.0 611.5 L1367.5 611.3 L1368.0 610.7 L1368.5 609.7 L1369.0 608.0 L1369.5 603.5 L1370.0 598.7 L1370.5 594.8 L1371.0 591.0 L1371.5 588.3 L1372.0 587.1 L1372.5 586.2 L1373.0 585.4 L1373.5 585.0 L1374.0 584.9 L1374.5 585.0 L1375.0 585.2 L1375.5 585.5 L1376.0 585.9 L1376.5 586.3 L1377.0 587.1 L1377.5 588.2 L1378.0 589.4 L1378.5 590.8 L1379.0 592.1 L1379.5 593.3 L1380.0 594.6 L1380.5 596.0 L1381.0 597.4 L1381.5 598.8 L1382.0 600.2 L1382.5 601.6 L1383.0 603.1 L1383.5 604.5 L1384.0 606.0 L1384.5 607.6 L1385.0 609.1 L1385.5 610.6 L1386.0 612.1 L1386.5 613.6 L1387.0 615.2 L1387.5 616.7 L1388.0 618.2 L1388.5 619.7 L1389.0 621.2 L1389.5 622.6 L1390.0 623.9 L1390.5 625.1 L1391.0 626.2 L1391.5 627.4 L1392.0 628.6 L1392.5 629.9 L1393.0 631.4 L1393.5 633.2 L1394.0 635.2 L1394.5 637.3 L1395.0 639.4 L1395.5 641.6 L1396.0 643.8 L1396.5 646.3 L1397.0 650.2 L1397.5 653.6 L1398.0 654.1 L1398.5 654.3 L1399.0 654.1 L1399.5 652.8 L1400.0 651.1 L1400.5 649.2 L1401.0 646.4 L1401.5 640.8 L1402.0 634.2 L1402.5 629.6 L1403.0 625.8 L1403.5 622.6 L1404.0 620.1 L1404.5 617.9 L1405.0 616.1 L1405.5 614.5 L1406.0 613.1 L1406.5 612.1 L1407.0 611.2 L1407.5 610.3 L1408.0 609.6 L1408.5 609.1 L1409.0 608.9 L1409.5 608.8 L1410.0 608.7 L1410.5 608.6 L1411.0 608.6 L1411.5 608.8 L1412.0 609.6 L1412.5 610.7 L1413.0 612.0 L1413.5 613.3 L1414.0 614.9 L1414.5 616.7 L1415.0 618.0 L1415.5 618.6 L1416.0 619.2 L1416.5 619.6 L1417.0 619.9 L1417.5 619.9 L1418.0 619.0 L1418.5 617.4 L1419.0 615.9 L1419.5 614.7 L1420.0 613.5 L1420.5 612.5 L1421.0 611.7 L1421.5 611.4 L1422.0 611.1 L1422.5 610.9 L1423.0 610.8 L1423.5 610.7 L1424.0 610.6 L1424.5 610.7 L1425.0 610.9 L1425.5 611.2 L1426.0 611.6 L1426.5 611.9 L1427.0 612.2 L1427.5 612.3 L1428.0 612.3 L1428.5 612.3 L1429.0 612.2 L1429.5 612.1 L1430.0 612.0 L1430.5 611.4 L1431.0 609.6 L1431.5 607.5 L1432.0 605.4 L1432.5 602.8 L1433.0 600.3 L1433.5 598.7 L1434.0 597.8 L1434.5 597.0 L1435.0 596.6 L1435.5 596.7 L1436.0 597.0 L1436.5 597.5 L1437.0 598.1 L1437.5 599.3 L1438.0 600.9 L1438.5 602.7 L1439.0 604.4 L1439.5 605.8 L1440.0 607.0 L1440.5 608.0 L1441.0 609.1 L1441.5 610.0 L1442.0 611.0 L1442.5 611.8 L1443.0 612.7 L1443.5 613.4 L1444.0 614.1 L1444.5 614.8 L1445.0 615.5 L1445.5 616.2 L1446.0 617.1 L1446.5 618.1 L1447.0 619.2 L1447.5 620.5 L1448.0 621.9 L1448.5 623.5 L1449.0 625.3 L1449.5 627.7 L1450.0 630.4 L1450.5 633.1 L1451.0 635.8 L1451.5 638.7 L1452.0 641.4 L1452.5 642.9 L1453.0 643.8 L1453.5 644.4 L1454.0 644.4 L1454.5 643.3 L1455.0 641.5 L1455.5 639.3 L1456.0 636.0 L1456.5 631.4 L1457.0 626.0 L1457.5 619.8 L1458.0 612.0 L1458.5 604.1 L1459.0 595.8 L1459.5 591.6 L1460.0 590.7 L1460.0 590.7" fill="none" stroke="#56b9a3" stroke-width="1.1" stroke-linejoin="round" clip-path="url(#cpos)"/>
  <path d="M93.0 600.9 L93.5 611.3 L94.0 620.0 L94.5 626.2 L95.0 631.3 L95.5 635.3 L96.0 638.0 L96.5 639.6 L97.0 640.9 L97.5 642.0 L98.0 642.8 L98.5 643.2 L99.0 643.4 L99.5 643.6 L100.0 643.8 L100.5 643.9 L101.0 644.0 L101.5 644.1 L102.0 644.1 L102.5 644.1 L103.0 644.1 L103.5 644.1 L104.0 644.1 L104.5 644.1 L105.0 644.1 L105.5 644.1 L106.0 644.1 L106.5 644.0 L107.0 643.6 L107.5 643.0 L108.0 642.3 L108.5 641.8 L109.0 641.4 L109.5 641.0 L110.0 640.7 L110.5 640.4 L111.0 640.2 L111.5 640.2 L112.0 640.3 L112.5 640.5 L113.0 640.8 L113.5 641.0 L114.0 641.3 L114.5 641.8 L115.0 642.5 L115.5 643.1 L116.0 643.7 L116.5 644.2 L117.0 644.7 L117.5 645.1 L118.0 645.5 L118.5 645.7 L119.0 645.8 L119.5 645.4 L120.0 644.5 L120.5 643.5 L121.0 641.9 L121.5 639.2 L122.0 635.8 L122.5 632.2 L123.0 628.8 L123.5 625.7 L124.0 622.5 L124.5 619.3 L125.0 616.3 L125.5 613.6 L126.0 611.3 L126.5 609.0 L127.0 606.8 L127.5 605.1 L128.0 603.8 L128.5 603.1 L129.0 602.6 L129.5 602.2 L130.0 602.1 L130.5 602.6 L131.0 603.6 L131.5 604.9 L132.0 606.8 L132.5 609.7 L133.0 612.8 L133.5 615.7 L134.0 618.7 L134.5 621.4 L135.0 623.0 L135.5 623.6 L136.0 624.0 L136.5 624.0 L137.0 622.3 L137.5 619.7 L138.0 615.9 L138.5 610.8 L139.0 605.9 L139.5 602.4 L140.0 599.2 L140.5 596.7 L141.0 595.4 L141.5 594.7 L142.0 594.2 L142.5 594.2 L143.0 594.8 L143.5 595.8 L144.0 596.8 L144.5 598.0 L145.0 599.6 L145.5 601.2 L146.0 602.7 L146.5 604.1 L147.0 605.4 L147.5 606.8 L148.0 608.2 L148.5 609.5 L149.0 610.9 L149.5 612.3 L150.0 613.9 L150.5 615.5 L151.0 617.2 L151.5 618.8 L152.0 620.3 L152.5 621.6 L153.0 622.6 L153.5 623.6 L154.0 624.4 L154.5 624.6 L155.0 623.6 L155.5 621.3 L156.0 617.4 L156.5 607.7 L157.0 599.1 L157.5 594.0 L158.0 590.5 L158.5 589.1 L159.0 588.1 L159.5 587.4 L160.0 587.0 L160.5 586.9 L161.0 586.9 L161.5 586.9 L162.0 586.9 L162.5 587.0 L163.0 587.0 L163.5 587.0 L164.0 587.1 L164.5 587.2 L165.0 587.5 L165.5 587.8 L166.0 588.1 L166.5 588.5 L167.0 589.0 L167.5 589.5 L168.0 590.2 L168.5 591.1 L169.0 592.1 L169.5 593.0 L170.0 593.9 L170.5 595.0 L171.0 596.1 L171.5 597.0 L172.0 597.5 L172.5 597.5 L173.0 597.2 L173.5 596.6 L174.0 596.0 L174.5 595.3 L175.0 594.7 L175.5 593.9 L176.0 593.0 L176.5 592.2 L177.0 591.5 L177.5 591.2 L178.0 590.9 L178.5 590.7 L179.0 590.5 L179.5 590.4 L180.0 590.7 L180.5 591.5 L181.0 592.4 L181.5 593.6 L182.0 595.6 L182.5 597.9 L183.0 600.1 L183.5 601.9 L184.0 603.5 L184.5 605.1 L185.0 606.5 L185.5 608.0 L186.0 609.4 L186.5 610.8 L187.0 612.2 L187.5 613.7 L188.0 615.2 L188.5 616.5 L189.0 617.6 L189.5 618.5 L190.0 619.2 L190.5 619.8 L191.0 619.9 L191.5 619.3 L192.0 618.3 L192.5 617.1 L193.0 615.3 L193.5 612.7 L194.0 610.2 L194.5 608.5 L195.0 606.9 L195.5 605.7 L196.0 605.1 L196.5 605.0 L197.0 604.8 L197.5 604.9 L198.0 605.8 L198.5 607.0 L199.0 608.2 L199.5 609.8 L200.0 611.5 L200.5 613.2 L201.0 614.5 L201.5 615.5 L202.0 616.5 L202.5 617.2 L203.0 617.5 L203.5 617.4 L204.0 617.2 L204.5 616.8 L205.0 616.4 L205.5 615.9 L206.0 615.4 L206.5 614.7 L207.0 614.0 L207.5 613.1 L208.0 612.3 L208.5 611.3 L209.0 610.3 L209.5 609.1 L210.0 607.8 L210.5 606.4 L211.0 604.8 L211.5 603.0 L212.0 600.8 L212.5 598.6 L213.0 597.2 L213.5 595.9 L214.0 594.9 L214.5 594.5 L215.0 594.6 L215.5 594.7 L216.0 594.9 L216.5 595.2 L217.0 595.8 L217.5 596.5 L218.0 597.4 L218.5 598.1 L219.0 598.6 L219.5 599.2 L220.0 599.6 L220.5 600.0 L221.0 600.1 L221.5 599.9 L222.0 599.3 L222.5 598.4 L223.0 595.2 L223.5 590.8 L224.0 587.4 L224.5 584.6 L225.0 583.5 L225.5 582.7 L226.0 582.1 L226.5 581.7 L227.0 581.5 L227.5 581.5 L228.0 581.5 L228.5 581.5 L229.0 581.5 L229.5 581.5 L230.0 581.5 L230.5 581.5 L231.0 581.5 L231.5 581.7 L232.0 582.0 L232.5 582.4 L233.0 582.9 L233.5 583.4 L234.0 584.0 L234.5 584.9 L235.0 586.1 L235.5 587.6 L236.0 589.3 L236.5 591.1 L237.0 593.4 L237.5 595.8 L238.0 597.8 L238.5 598.9 L239.0 599.8 L239.5 600.1 L240.0 599.2 L240.5 597.6 L241.0 595.9 L241.5 593.4 L242.0 590.9 L242.5 589.0 L243.0 587.7 L243.5 586.5 L244.0 585.7 L244.5 585.4 L245.0 585.4 L245.5 585.5 L246.0 585.7 L246.5 585.9 L247.0 586.3 L247.5 587.2 L248.0 588.3 L248.5 589.3 L249.0 590.1 L249.5 590.6 L250.0 591.1 L250.5 591.5 L251.0 591.6 L251.5 591.4 L252.0 591.0 L252.5 590.4 L253.0 589.7 L253.5 589.1 L254.0 588.3 L254.5 587.4 L255.0 586.5 L255.5 585.7 L256.0 585.4 L256.5 585.2 L257.0 585.1 L257.5 585.1 L258.0 585.0 L258.5 585.3 L259.0 586.3 L259.5 587.6 L260.0 589.5 L260.5 593.2 L261.0 596.4 L261.5 597.9 L262.0 599.2 L262.5 600.0 L263.0 600.1 L263.5 600.1 L264.0 600.1 L264.5 600.1 L265.0 600.1 L265.5 600.1 L266.0 600.0 L266.5 599.8 L267.0 599.4 L267.5 599.1 L268.0 598.7 L268.5 598.3 L269.0 597.9 L269.5 597.6 L270.0 597.3 L270.5 597.0 L271.0 596.6 L271.5 596.3 L272.0 596.0 L272.5 595.7 L273.0 595.4 L273.5 595.1 L274.0 594.9 L274.5 594.7 L275.0 594.5 L275.5 594.3 L276.0 594.2 L276.5 594.2 L277.0 594.4 L277.5 594.9 L278.0 595.6 L278.5 596.2 L279.0 596.9 L279.5 597.6 L280.0 598.5 L280.5 599.4 L281.0 600.4 L281.5 601.3 L282.0 602.2 L282.5 603.0 L283.0 603.9 L283.5 604.7 L284.0 605.6 L284.5 606.3 L285.0 607.0 L285.5 607.6 L286.0 608.1 L286.5 608.5 L287.0 608.9 L287.5 609.2 L288.0 609.4 L288.5 609.3 L289.0 608.6 L289.5 607.6 L290.0 606.6 L290.5 605.0 L291.0 603.3 L291.5 601.9 L292.0 601.0 L292.5 600.2 L293.0 599.5 L293.5 599.3 L294.0 599.3 L294.5 599.4 L295.0 599.7 L295.5 599.9 L296.0 600.2 L296.5 600.6 L297.0 601.1 L297.5 601.7 L298.0 602.2 L298.5 602.6 L299.0 602.9 L299.5 603.1 L300.0 603.2 L300.5 603.3 L301.0 603.4 L301.5 603.4 L302.0 603.5 L302.5 603.5 L303.0 603.4 L303.5 603.2 L304.0 602.9 L304.5 602.5 L305.0 602.1 L305.5 601.6 L306.0 601.2 L306.5 600.8 L307.0 600.4 L307.5 599.9 L308.0 599.4 L308.5 599.0 L309.0 598.6 L309.5 598.3 L310.0 598.1 L310.5 597.8 L311.0 597.6 L311.5 597.4 L312.0 597.3 L312.5 597.2 L313.0 597.3 L313.5 597.5 L314.0 598.0 L314.5 598.6 L315.0 599.4 L315.5 601.7 L316.0 605.3 L316.5 608.8 L317.0 611.8 L317.5 615.1 L318.0 617.6 L318.5 618.3 L319.0 618.6 L319.5 618.7 L320.0 617.3 L320.5 614.1 L321.0 608.6 L321.5 599.9 L322.0 594.5 L322.5 590.6 L323.0 588.8 L323.5 587.9 L324.0 587.2 L324.5 586.8 L325.0 586.6 L325.5 586.5 L326.0 586.5 L326.5 586.4 L327.0 586.4 L327.5 586.4 L328.0 586.4 L328.5 586.4 L329.0 586.6 L329.5 586.8 L330.0 587.1 L330.5 587.5 L331.0 587.9 L331.5 588.5 L332.0 589.5 L332.5 590.8 L333.0 592.4 L333.5 595.4 L334.0 600.3 L334.5 607.0 L335.0 616.4 L335.5 622.3 L336.0 626.6 L336.5 629.9 L337.0 632.7 L337.5 635.0 L338.0 637.0 L338.5 638.7 L339.0 640.0 L339.5 641.1 L340.0 642.0 L340.5 642.8 L341.0 643.5 L341.5 644.1 L342.0 644.6 L342.5 645.0 L343.0 645.4 L343.5 645.7 L344.0 646.0 L344.5 646.2 L345.0 646.3 L345.5 646.4 L346.0 646.5 L346.5 646.5 L347.0 646.6 L347.5 646.6 L348.0 646.6 L348.5 646.6 L349.0 646.6 L349.5 646.4 L350.0 646.2 L350.5 645.9 L351.0 645.5 L351.5 645.2 L352.0 644.8 L352.5 644.4 L353.0 643.8 L353.5 643.2 L354.0 642.5 L354.5 641.8 L355.0 641.0 L355.5 640.2 L356.0 639.3 L356.5 638.4 L357.0 637.3 L357.5 636.1 L358.0 634.8 L358.5 633.4 L359.0 631.7 L359.5 629.6 L360.0 627.2 L360.5 624.6 L361.0 621.8 L361.5 618.9 L362.0 616.0 L362.5 612.8 L363.0 609.2 L363.5 605.5 L364.0 602.1 L364.5 599.3 L365.0 597.0 L365.5 594.7 L366.0 592.8 L366.5 591.2 L367.0 590.0 L367.5 589.3 L368.0 588.6 L368.5 588.1 L369.0 587.6 L369.5 587.2 L370.0 586.9 L370.5 586.5 L371.0 586.2 L371.5 585.9 L372.0 585.6 L372.5 585.3 L373.0 585.1 L373.5 584.9 L374.0 584.6 L374.5 584.4 L375.0 584.2 L375.5 583.9 L376.0 583.7 L376.5 583.4 L377.0 583.2 L377.5 582.9 L378.0 582.8 L378.5 582.7 L379.0 582.7 L379.5 582.7 L380.0 582.7 L380.5 582.8 L381.0 582.9 L381.5 583.0 L382.0 583.1 L382.5 583.2 L383.0 583.5 L383.5 583.9 L384.0 584.4 L384.5 585.0 L385.0 585.6 L385.5 586.3 L386.0 587.0 L386.5 587.8 L387.0 588.8 L387.5 589.9 L388.0 591.1 L388.5 592.6 L389.0 594.8 L389.5 597.0 L390.0 598.7 L390.5 600.0 L391.0 601.2 L391.5 601.8 L392.0 601.7 L392.5 601.5 L393.0 601.2 L393.5 600.5 L394.0 598.1 L394.5 595.0 L395.0 592.4 L395.5 590.5 L396.0 588.9 L396.5 587.7 L397.0 587.0 L397.5 586.4 L398.0 586.0 L398.5 585.7 L399.0 585.8 L399.5 586.3 L400.0 587.1 L400.5 588.1 L401.0 589.3 L401.5 591.1 L402.0 593.2 L402.5 595.4 L403.0 597.8 L403.5 600.6 L404.0 603.6 L404.5 606.8 L405.0 610.2 L405.5 613.8 L406.0 617.9 L406.5 622.1 L407.0 626.0 L407.5 630.0 L408.0 633.8 L408.5 636.4 L409.0 638.0 L409.5 639.4 L410.0 640.1 L410.5 640.0 L411.0 638.7 L411.5 636.7 L412.0 634.3 L412.5 629.9 L413.0 624.4 L413.5 620.1 L414.0 617.8 L414.5 615.9 L415.0 614.7 L415.5 614.4 L416.0 614.3 L416.5 614.2 L417.0 614.2 L417.5 614.1 L418.0 614.2 L418.5 614.3 L419.0 614.7 L419.5 615.2 L420.0 615.7 L420.5 616.3 L421.0 617.2 L421.5 618.3 L422.0 619.5 L422.5 620.9 L423.0 622.4 L423.5 623.9 L424.0 625.6 L424.5 627.5 L425.0 629.5 L425.5 631.6 L426.0 634.3 L426.5 637.2 L427.0 639.5 L427.5 640.7 L428.0 641.6 L428.5 642.3 L429.0 642.3 L429.5 641.2 L430.0 639.1 L430.5 636.6 L431.0 633.0 L431.5 628.0 L432.0 623.0 L432.5 619.3 L433.0 616.0 L433.5 612.9 L434.0 610.1 L434.5 607.4 L435.0 604.7 L435.5 602.1 L436.0 599.6 L436.5 597.3 L437.0 595.2 L437.5 593.5 L438.0 591.8 L438.5 590.2 L439.0 589.0 L439.5 588.2 L440.0 587.9 L440.5 587.6 L441.0 587.4 L441.5 587.6 L442.0 588.4 L442.5 589.6 L443.0 591.2 L443.5 594.2 L444.0 598.3 L444.5 602.1 L445.0 605.4 L445.5 608.7 L446.0 611.7 L446.5 614.1 L447.0 615.7 L447.5 617.2 L448.0 618.5 L448.5 619.6 L449.0 620.6 L449.5 621.4 L450.0 622.1 L450.5 622.8 L451.0 623.4 L451.5 624.0 L452.0 624.5 L452.5 624.9 L453.0 625.1 L453.5 625.1 L454.0 622.8 L454.5 617.2 L455.0 572.5 L455.5 533.3 L456.0 514.6 L456.5 499.7 L457.0 493.3 L457.5 490.1 L458.0 488.4 L458.5 487.8 L459.0 487.3 L459.5 487.0 L460.0 486.9 L460.5 486.9 L461.0 486.9 L461.5 487.0 L462.0 487.1 L462.5 487.3 L463.0 487.5 L463.5 487.7 L464.0 488.0 L464.5 488.4 L465.0 489.0 L465.5 490.3 L466.0 494.1 L466.5 504.9 L467.0 529.5 L467.5 554.4 L468.0 583.7 L468.5 622.6 L469.0 657.2 L469.5 674.2 L470.0 682.5 L470.5 687.1 L471.0 689.7 L471.5 689.6 L472.0 686.4 L472.5 680.4 L473.0 672.8 L473.5 665.2 L474.0 658.1 L474.5 651.7 L475.0 646.0 L475.5 641.0 L476.0 637.6 L476.5 635.2 L477.0 633.5 L477.5 633.0 L478.0 634.2 L478.5 636.3 L479.0 638.4 L479.5 640.4 L480.0 642.4 L480.5 644.2 L481.0 645.7 L481.5 647.3 L482.0 649.3 L482.5 650.9 L483.0 651.9 L483.5 652.6 L484.0 652.6 L484.5 651.7 L485.0 650.6 L485.5 649.3 L486.0 647.0 L486.5 636.6 L487.0 609.5 L487.5 601.5 L488.0 597.9 L488.5 596.1 L489.0 594.9 L489.5 594.5 L490.0 595.1 L490.5 596.3 L491.0 597.7 L491.5 599.2 L492.0 601.1 L492.5 603.0 L493.0 604.7 L493.5 606.1 L494.0 607.5 L494.5 608.7 L495.0 609.5 L495.5 609.7 L496.0 609.0 L496.5 607.8 L497.0 605.0 L497.5 600.1 L498.0 595.5 L498.5 593.1 L499.0 591.3 L499.5 589.9 L500.0 588.8 L500.5 588.2 L501.0 587.7 L501.5 587.3 L502.0 587.0 L502.5 586.7 L503.0 586.6 L503.5 586.6 L504.0 586.6 L504.5 586.8 L505.0 587.0 L505.5 587.2 L506.0 587.4 L506.5 587.6 L507.0 587.8 L507.5 587.9 L508.0 588.0 L508.5 588.0 L509.0 588.1 L509.5 588.1 L510.0 588.1 L510.5 588.2 L511.0 588.2 L511.5 588.2 L512.0 588.2 L512.5 588.2 L513.0 588.2 L513.5 588.2 L514.0 588.2 L514.5 588.2 L515.0 588.2 L515.5 588.1 L516.0 588.1 L516.5 588.0 L517.0 588.0 L517.5 587.9 L518.0 587.8 L518.5 587.7 L519.0 587.4 L519.5 587.0 L520.0 586.7 L520.5 586.2 L521.0 585.8 L521.5 585.3 L522.0 584.7 L522.5 584.0 L523.0 583.3 L523.5 582.5 L524.0 581.7 L524.5 580.8 L525.0 579.8 L525.5 578.7 L526.0 577.7 L526.5 576.6 L527.0 575.6 L527.5 574.5 L528.0 573.4 L528.5 572.2 L529.0 571.1 L529.5 570.1 L530.0 569.3 L530.5 568.7 L531.0 568.1 L531.5 567.6 L532.0 567.3 L532.5 567.1 L533.0 567.2 L533.5 567.7 L534.0 568.5 L534.5 569.4 L535.0 570.6 L535.5 572.4 L536.0 574.7 L536.5 576.8 L537.0 578.5 L537.5 579.6 L538.0 580.6 L538.5 581.3 L539.0 581.4 L539.5 580.3 L540.0 578.3 L540.5 573.3 L541.0 565.2 L541.5 559.5 L542.0 555.9 L542.5 553.0 L543.0 551.2 L543.5 550.4 L544.0 549.7 L544.5 549.4 L545.0 549.4 L545.5 549.7 L546.0 550.4 L546.5 551.3 L547.0 552.2 L547.5 553.7 L548.0 555.7 L548.5 557.9 L549.0 560.2 L549.5 562.6 L550.0 565.1 L550.5 568.0 L551.0 571.2 L551.5 575.1 L552.0 580.4 L552.5 587.6 L553.0 595.6 L553.5 603.2 L554.0 610.3 L554.5 617.3 L555.0 621.6 L555.5 623.9 L556.0 625.7 L556.5 626.6 L557.0 626.3 L557.5 624.9 L558.0 622.8 L558.5 620.2 L559.0 616.0 L559.5 610.4 L560.0 604.5 L560.5 598.3 L561.0 591.3 L561.5 584.1 L562.0 577.1 L562.5 571.1 L563.0 566.0 L563.5 561.2 L564.0 556.8 L564.5 552.8 L565.0 549.1 L565.5 545.7 L566.0 542.3 L566.5 539.2 L567.0 536.6 L567.5 534.6 L568.0 533.3 L568.5 532.2 L569.0 531.3 L569.5 530.6 L570.0 530.1 L570.5 529.9 L571.0 529.7 L571.5 529.6 L572.0 529.4 L572.5 529.3 L573.0 529.3 L573.5 529.2 L574.0 529.1 L574.5 529.0 L575.0 528.9 L575.5 528.8 L576.0 528.7 L576.5 528.7 L577.0 528.6 L577.5 528.5 L578.0 528.5 L578.5 528.5 L579.0 528.5 L579.5 528.5 L580.0 528.5 L580.5 528.5 L581.0 528.5 L581.5 528.5 L582.0 528.5 L582.5 528.6 L583.0 529.1 L583.5 529.8 L584.0 530.7 L584.5 532.8 L585.0 536.4 L585.5 539.9 L586.0 542.9 L586.5 545.9 L587.0 548.9 L587.5 551.9 L588.0 554.9 L588.5 558.1 L589.0 561.5 L589.5 564.8 L590.0 567.7 L590.5 569.8 L591.0 571.5 L591.5 573.1 L592.0 574.4 L592.5 575.3 L593.0 575.7 L593.5 575.5 L594.0 575.1 L594.5 574.4 L595.0 573.6 L595.5 572.6 L596.0 571.3 L596.5 569.5 L597.0 567.6 L597.5 565.5 L598.0 563.4 L598.5 561.4 L599.0 559.2 L599.5 556.9 L600.0 554.6 L600.5 552.2 L601.0 549.9 L601.5 547.7 L602.0 545.5 L602.5 543.1 L603.0 540.8 L603.5 538.9 L604.0 537.7 L604.5 536.9 L605.0 536.5 L605.5 536.5 L606.0 537.0 L606.5 537.7 L607.0 540.0 L607.5 543.9 L608.0 548.4 L608.5 554.1 L609.0 559.5 L609.5 563.0 L610.0 565.6 L610.5 567.9 L611.0 569.4 L611.5 569.8 L612.0 569.2 L612.5 568.2 L613.0 567.0 L613.5 565.8 L614.0 564.2 L614.5 562.6 L615.0 561.1 L615.5 560.0 L616.0 559.0 L616.5 558.1 L617.0 557.5 L617.5 557.4 L618.0 557.6 L618.5 557.9 L619.0 558.3 L619.5 558.8 L620.0 559.6 L620.5 561.1 L621.0 563.0 L621.5 565.3 L622.0 568.7 L622.5 572.6 L623.0 576.5 L623.5 580.3 L624.0 584.2 L624.5 588.5 L625.0 593.3 L625.5 599.7 L626.0 608.0 L626.5 615.3 L627.0 619.4 L627.5 622.2 L628.0 624.2 L628.5 625.1 L629.0 625.4 L629.5 625.5 L630.0 625.6 L630.5 625.6 L631.0 625.5 L631.5 625.3 L632.0 624.9 L632.5 624.4 L633.0 624.0 L633.5 623.6 L634.0 623.1 L634.5 622.6 L635.0 621.9 L635.5 620.8 L636.0 618.5 L636.5 615.2 L637.0 610.7 L637.5 600.8 L638.0 588.5 L638.5 578.7 L639.0 569.9 L639.5 565.1 L640.0 562.1 L640.5 560.4 L641.0 559.8 L641.5 559.5 L642.0 559.2 L642.5 559.1 L643.0 559.2 L643.5 559.9 L644.0 560.9 L644.5 562.1 L645.0 563.2 L645.5 564.3 L646.0 565.6 L646.5 566.9 L647.0 568.3 L647.5 569.6 L648.0 570.8 L648.5 572.0 L649.0 573.1 L649.5 574.3 L650.0 575.4 L650.5 576.5 L651.0 577.4 L651.5 578.1 L652.0 578.6 L652.5 579.0 L653.0 579.4 L653.5 579.8 L654.0 579.9 L654.5 579.9 L655.0 579.7 L655.5 579.4 L656.0 578.9 L656.5 578.5 L657.0 577.9 L657.5 577.1 L658.0 576.1 L658.5 575.3 L659.0 574.8 L659.5 574.6 L660.0 574.5 L660.5 574.4 L661.0 574.3 L661.5 574.9 L662.0 576.3 L662.5 578.3 L663.0 581.8 L663.5 588.6 L664.0 594.1 L664.5 597.0 L665.0 599.3 L665.5 600.6 L666.0 600.7 L666.5 600.7 L667.0 600.5 L667.5 600.3 L668.0 600.1 L668.5 599.8 L669.0 599.5 L669.5 599.1 L670.0 598.6 L670.5 598.0 L671.0 597.4 L671.5 596.7 L672.0 596.0 L672.5 595.1 L673.0 594.1 L673.5 593.0 L674.0 591.7 L674.5 590.5 L675.0 589.3 L675.5 588.1 L676.0 586.9 L676.5 585.7 L677.0 584.5 L677.5 583.4 L678.0 582.3 L678.5 581.3 L679.0 580.3 L679.5 579.5 L680.0 578.6 L680.5 577.8 L681.0 577.0 L681.5 576.4 L682.0 575.8 L682.5 575.4 L683.0 574.9 L683.5 574.5 L684.0 574.2 L684.5 574.0 L685.0 574.1 L685.5 574.6 L686.0 575.6 L686.5 577.2 L687.0 583.5 L687.5 593.2 L688.0 607.2 L688.5 619.6 L689.0 626.9 L689.5 631.9 L690.0 634.0 L690.5 635.2 L691.0 635.8 L691.5 635.4 L692.0 634.1 L692.5 632.2 L693.0 630.3 L693.5 628.7 L694.0 627.0 L694.5 625.3 L695.0 623.5 L695.5 621.7 L696.0 619.9 L696.5 618.1 L697.0 616.4 L697.5 614.6 L698.0 612.8 L698.5 611.1 L699.0 609.3 L699.5 607.6 L700.0 605.9 L700.5 604.2 L701.0 602.5 L701.5 600.8 L702.0 599.2 L702.5 597.6 L703.0 596.1 L703.5 594.6 L704.0 593.0 L704.5 591.5 L705.0 590.0 L705.5 588.9 L706.0 588.2 L706.5 587.6 L707.0 587.1 L707.5 586.7 L708.0 586.5 L708.5 586.4 L709.0 586.3 L709.5 586.3 L710.0 586.2 L710.5 586.2 L711.0 586.2 L711.5 586.2 L712.0 586.2 L712.5 586.3 L713.0 586.6 L713.5 586.9 L714.0 587.3 L714.5 587.8 L715.0 588.7 L715.5 590.2 L716.0 592.1 L716.5 594.3 L717.0 598.1 L717.5 603.5 L718.0 609.3 L718.5 614.5 L719.0 620.0 L719.5 622.5 L720.0 623.5 L720.5 624.3 L721.0 624.9 L721.5 625.2 L722.0 625.3 L722.5 625.3 L723.0 625.3 L723.5 625.2 L724.0 625.2 L724.5 625.1 L725.0 625.0 L725.5 624.9 L726.0 624.8 L726.5 624.7 L727.0 624.5 L727.5 624.2 L728.0 623.9 L728.5 623.4 L729.0 622.9 L729.5 622.3 L730.0 621.2 L730.5 619.4 L731.0 617.0 L731.5 614.3 L732.0 611.3 L732.5 607.4 L733.0 602.9 L733.5 598.3 L734.0 594.1 L734.5 589.6 L735.0 585.5 L735.5 582.3 L736.0 579.8 L736.5 577.7 L737.0 576.3 L737.5 575.6 L738.0 575.2 L738.5 574.8 L739.0 574.5 L739.5 574.4 L740.0 574.4 L740.5 574.5 L741.0 574.6 L741.5 574.8 L742.0 575.0 L742.5 575.2 L743.0 575.4 L743.5 575.4 L744.0 575.5 L744.5 575.6 L745.0 575.6 L745.5 575.7 L746.0 575.7 L746.5 575.7 L747.0 574.9 L747.5 573.2 L748.0 571.2 L748.5 569.2 L749.0 566.7 L749.5 564.0 L750.0 561.7 L750.5 560.1 L751.0 558.8 L751.5 557.7 L752.0 556.7 L752.5 555.9 L753.0 555.3 L753.5 554.8 L754.0 554.5 L754.5 554.1 L755.0 553.8 L755.5 553.6 L756.0 553.4 L756.5 553.4 L757.0 553.4 L757.5 553.5 L758.0 553.6 L758.5 553.9 L759.0 554.1 L759.5 554.5 L760.0 555.3 L760.5 556.3 L761.0 557.3 L761.5 558.2 L762.0 558.8 L762.5 559.4 L763.0 560.0 L763.5 560.4 L764.0 560.5 L764.5 560.1 L765.0 559.5 L765.5 558.7 L766.0 557.8 L766.5 556.7 L767.0 555.4 L767.5 554.0 L768.0 552.8 L768.5 552.0 L769.0 551.4 L769.5 550.9 L770.0 550.7 L770.5 550.8 L771.0 551.3 L771.5 552.2 L772.0 553.2 L772.5 554.9 L773.0 557.2 L773.5 559.4 L774.0 561.6 L774.5 563.9 L775.0 566.2 L775.5 568.4 L776.0 570.3 L776.5 571.9 L777.0 573.4 L777.5 574.8 L778.0 576.0 L778.5 577.1 L779.0 578.1 L779.5 578.9 L780.0 579.7 L780.5 580.5 L781.0 581.3 L781.5 582.3 L782.0 583.3 L782.5 584.5 L783.0 585.7 L783.5 587.0 L784.0 588.5 L784.5 590.5 L785.0 592.6 L785.5 594.6 L786.0 596.3 L786.5 597.4 L787.0 598.4 L787.5 599.2 L788.0 599.7 L788.5 599.7 L789.0 599.0 L789.5 598.0 L790.0 596.8 L790.5 595.0 L791.0 592.5 L791.5 590.0 L792.0 588.0 L792.5 586.8 L793.0 585.7 L793.5 584.9 L794.0 584.3 L794.5 584.2 L795.0 584.5 L795.5 585.0 L796.0 585.8 L796.5 587.3 L797.0 590.2 L797.5 593.1 L798.0 595.3 L798.5 597.4 L799.0 599.3 L799.5 600.7 L800.0 601.3 L800.5 601.7 L801.0 601.9 L801.5 601.5 L802.0 599.9 L802.5 597.7 L803.0 593.7 L803.5 588.3 L804.0 584.2 L804.5 582.0 L805.0 580.1 L805.5 579.0 L806.0 578.6 L806.5 578.4 L807.0 578.3 L807.5 578.3 L808.0 580.1 L808.5 583.5 L809.0 589.5 L809.5 599.1 L810.0 606.9 L810.5 612.9 L811.0 617.5 L811.5 619.3 L812.0 620.3 L812.5 620.9 L813.0 621.1 L813.5 620.9 L814.0 620.5 L814.5 620.0 L815.0 619.3 L815.5 618.6 L816.0 617.8 L816.5 616.9 L817.0 615.9 L817.5 614.7 L818.0 613.4 L818.5 611.9 L819.0 610.4 L819.5 608.6 L820.0 606.4 L820.5 603.8 L821.0 601.2 L821.5 598.8 L822.0 596.9 L822.5 595.1 L823.0 593.4 L823.5 592.2 L824.0 591.6 L824.5 591.3 L825.0 591.0 L825.5 590.9 L826.0 591.3 L826.5 592.4 L827.0 593.8 L827.5 595.3 L828.0 597.6 L828.5 600.2 L829.0 602.4 L829.5 603.8 L830.0 604.7 L830.5 605.5 L831.0 605.8 L831.5 605.4 L832.0 603.9 L832.5 602.0 L833.0 600.5 L833.5 598.8 L834.0 597.2 L834.5 595.9 L835.0 595.2 L835.5 594.9 L836.0 594.6 L836.5 594.4 L837.0 594.2 L837.5 594.1 L838.0 594.0 L838.5 594.0 L839.0 594.0 L839.5 594.0 L840.0 594.0 L840.5 594.0 L841.0 594.0 L841.5 594.0 L842.0 594.0 L842.5 594.0 L843.0 594.0 L843.5 594.0 L844.0 593.8 L844.5 592.3 L845.0 590.0 L845.5 587.5 L846.0 584.6 L846.5 581.3 L847.0 578.8 L847.5 577.6 L848.0 576.7 L848.5 576.1 L849.0 575.7 L849.5 575.7 L850.0 575.8 L850.5 576.1 L851.0 576.3 L851.5 576.6 L852.0 577.0 L852.5 577.6 L853.0 578.3 L853.5 579.0 L854.0 579.7 L854.5 580.4 L855.0 581.0 L855.5 581.5 L856.0 582.0 L856.5 582.5 L857.0 583.0 L857.5 583.5 L858.0 584.0 L858.5 584.5 L859.0 585.0 L859.5 585.6 L860.0 586.1 L860.5 586.3 L861.0 586.4 L861.5 586.5 L862.0 586.6 L862.5 586.7 L863.0 586.8 L863.5 586.9 L864.0 587.1 L864.5 587.2 L865.0 587.3 L865.5 587.4 L866.0 587.5 L866.5 587.7 L867.0 587.8 L867.5 588.1 L868.0 588.4 L868.5 588.8 L869.0 589.3 L869.5 589.7 L870.0 590.1 L870.5 590.6 L871.0 591.2 L871.5 591.8 L872.0 592.5 L872.5 593.1 L873.0 593.5 L873.5 593.7 L874.0 593.6 L874.5 593.1 L875.0 592.4 L875.5 591.6 L876.0 590.6 L876.5 589.2 L877.0 586.9 L877.5 584.3 L878.0 582.0 L878.5 580.6 L879.0 579.4 L879.5 578.4 L880.0 577.8 L880.5 577.6 L881.0 578.1 L881.5 578.9 L882.0 580.0 L882.5 582.2 L883.0 586.2 L883.5 591.2 L884.0 596.6 L884.5 603.6 L885.0 611.2 L885.5 618.2 L886.0 624.9 L886.5 631.2 L887.0 636.6 L887.5 640.5 L888.0 643.6 L888.5 646.8 L889.0 650.9 L889.5 654.7 L890.0 656.6 L890.5 658.0 L891.0 659.0 L891.5 659.5 L892.0 659.8 L892.5 660.0 L893.0 660.2 L893.5 660.2 L894.0 660.2 L894.5 660.0 L895.0 659.8 L895.5 659.5 L896.0 659.2 L896.5 658.8 L897.0 658.4 L897.5 657.8 L898.0 657.0 L898.5 655.8 L899.0 653.8 L899.5 649.8 L900.0 644.7 L900.5 637.2 L901.0 628.7 L901.5 620.3 L902.0 611.5 L902.5 606.2 L903.0 603.0 L903.5 601.0 L904.0 600.8 L904.5 600.8 L905.0 600.8 L905.5 602.3 L906.0 606.4 L906.5 611.4 L907.0 618.1 L907.5 626.0 L908.0 633.3 L908.5 639.8 L909.0 645.4 L909.5 649.7 L910.0 653.2 L910.5 656.2 L911.0 658.9 L911.5 661.5 L912.0 663.9 L912.5 666.1 L913.0 667.9 L913.5 669.4 L914.0 670.8 L914.5 672.0 L915.0 673.0 L915.5 673.6 L916.0 673.8 L916.5 674.0 L917.0 674.1 L917.5 673.9 L918.0 672.2 L918.5 669.5 L919.0 663.0 L919.5 653.6 L920.0 641.9 L920.5 630.8 L921.0 627.0 L921.5 625.0 L922.0 624.4 L922.5 624.3 L923.0 624.2 L923.5 624.2 L924.0 624.4 L924.5 625.1 L925.0 626.0 L925.5 627.1 L926.0 628.3 L926.5 629.4 L927.0 630.7 L927.5 632.2 L928.0 633.9 L928.5 635.6 L929.0 637.6 L929.5 639.8 L930.0 642.2 L930.5 644.9 L931.0 648.0 L931.5 652.2 L932.0 656.6 L932.5 659.7 L933.0 661.9 L933.5 663.7 L934.0 665.1 L934.5 665.6 L935.0 665.4 L935.5 664.7 L936.0 663.6 L936.5 660.3 L937.0 655.3 L937.5 648.2 L938.0 623.6 L938.5 607.3 L939.0 600.5 L939.5 597.9 L940.0 596.5 L940.5 595.7 L941.0 595.4 L941.5 595.4 L942.0 595.6 L942.5 595.7 L943.0 595.9 L943.5 596.1 L944.0 596.3 L944.5 596.6 L945.0 596.9 L945.5 597.2 L946.0 597.5 L946.5 597.8 L947.0 597.9 L947.5 597.8 L948.0 597.2 L948.5 596.3 L949.0 595.2 L949.5 594.1 L950.0 593.3 L950.5 592.3 L951.0 591.4 L951.5 590.6 L952.0 590.1 L952.5 590.0 L953.0 590.0 L953.5 590.1 L954.0 590.1 L954.5 590.2 L955.0 590.4 L955.5 590.7 L956.0 591.1 L956.5 591.6 L957.0 592.2 L957.5 592.6 L958.0 592.8 L958.5 592.8 L959.0 592.8 L959.5 592.7 L960.0 592.6 L960.5 592.4 L961.0 592.3 L961.5 592.1 L962.0 591.7 L962.5 591.1 L963.0 590.3 L963.5 589.3 L964.0 588.2 L964.5 587.1 L965.0 586.1 L965.5 585.0 L966.0 583.8 L966.5 582.6 L967.0 581.4 L967.5 580.2 L968.0 579.2 L968.5 578.2 L969.0 577.3 L969.5 576.3 L970.0 575.5 L970.5 574.9 L971.0 574.7 L971.5 574.8 L972.0 574.8 L972.5 574.9 L973.0 575.0 L973.5 575.4 L974.0 576.3 L974.5 577.6 L975.0 578.9 L975.5 580.2 L976.0 581.6 L976.5 583.1 L977.0 584.7 L977.5 586.3 L978.0 587.9 L978.5 589.5 L979.0 591.1 L979.5 592.8 L980.0 594.6 L980.5 596.5 L981.0 598.9 L981.5 601.3 L982.0 603.2 L982.5 604.3 L983.0 605.1 L983.5 605.7 L984.0 605.9 L984.5 605.4 L985.0 604.2 L985.5 602.6 L986.0 600.4 L986.5 596.8 L987.0 592.7 L987.5 589.3 L988.0 585.9 L988.5 583.2 L989.0 582.1 L989.5 581.3 L990.0 581.0 L990.5 581.6 L991.0 583.4 L991.5 586.6 L992.0 593.8 L992.5 601.8 L993.0 611.0 L993.5 619.6 L994.0 624.1 L994.5 627.2 L995.0 629.4 L995.5 630.1 L996.0 629.9 L996.5 629.5 L997.0 629.0 L997.5 628.4 L998.0 627.7 L998.5 626.7 L999.0 625.6 L999.5 624.3 L1000.0 623.0 L1000.5 621.6 L1001.0 620.1 L1001.5 618.4 L1002.0 616.5 L1002.5 614.6 L1003.0 612.6 L1003.5 610.4 L1004.0 607.9 L1004.5 605.4 L1005.0 603.1 L1005.5 601.5 L1006.0 599.9 L1006.5 598.5 L1007.0 597.6 L1007.5 597.4 L1008.0 597.4 L1008.5 597.4 L1009.0 597.4 L1009.5 597.5 L1010.0 598.2 L1010.5 599.5 L1011.0 601.1 L1011.5 602.9 L1012.0 604.7 L1012.5 607.0 L1013.0 609.6 L1013.5 612.5 L1014.0 615.7 L1014.5 619.4 L1015.0 623.6 L1015.5 628.2 L1016.0 634.2 L1016.5 640.0 L1017.0 643.5 L1017.5 647.0 L1018.0 656.5 L1018.5 663.0 L1019.0 666.5 L1019.5 668.2 L1020.0 668.7 L1020.5 669.0 L1021.0 668.9 L1021.5 667.8 L1022.0 665.7 L1022.5 662.9 L1023.0 658.4 L1023.5 653.6 L1024.0 649.0 L1024.5 644.0 L1025.0 638.8 L1025.5 633.5 L1026.0 628.6 L1026.5 623.7 L1027.0 619.0 L1027.5 614.9 L1028.0 611.4 L1028.5 608.1 L1029.0 605.6 L1029.5 604.4 L1030.0 603.6 L1030.5 603.0 L1031.0 602.5 L1031.5 602.2 L1032.0 602.2 L1032.5 602.3 L1033.0 602.5 L1033.5 602.7 L1034.0 603.1 L1034.5 603.4 L1035.0 603.7 L1035.5 604.0 L1036.0 604.4 L1036.5 604.9 L1037.0 605.3 L1037.5 605.5 L1038.0 605.5 L1038.5 605.0 L1039.0 604.2 L1039.5 603.0 L1040.0 601.4 L1040.5 597.4 L1041.0 592.1 L1041.5 587.0 L1042.0 581.9 L1042.5 577.1 L1043.0 574.6 L1043.5 573.3 L1044.0 572.4 L1044.5 572.0 L1045.0 572.2 L1045.5 572.5 L1046.0 573.1 L1046.5 573.9 L1047.0 575.6 L1047.5 578.0 L1048.0 580.5 L1048.5 583.2 L1049.0 586.3 L1049.5 589.8 L1050.0 593.5 L1050.5 597.3 L1051.0 601.4 L1051.5 605.8 L1052.0 610.6 L1052.5 615.6 L1053.0 621.1 L1053.5 627.6 L1054.0 633.8 L1054.5 638.9 L1055.0 643.3 L1055.5 646.5 L1056.0 648.2 L1056.5 649.4 L1057.0 649.4 L1057.5 648.6 L1058.0 647.0 L1058.5 641.6 L1059.0 631.6 L1059.5 622.0 L1060.0 612.2 L1060.5 604.1 L1061.0 596.8 L1061.5 590.6 L1062.0 586.2 L1062.5 583.5 L1063.0 581.2 L1063.5 579.4 L1064.0 578.0 L1064.5 576.7 L1065.0 575.7 L1065.5 574.8 L1066.0 574.0 L1066.5 573.2 L1067.0 572.6 L1067.5 572.0 L1068.0 571.4 L1068.5 570.9 L1069.0 570.4 L1069.5 570.0 L1070.0 569.5 L1070.5 569.1 L1071.0 568.8 L1071.5 568.5 L1072.0 568.2 L1072.5 568.0 L1073.0 567.7 L1073.5 567.5 L1074.0 567.3 L1074.5 567.3 L1075.0 567.3 L1075.5 567.5 L1076.0 568.0 L1076.5 568.6 L1077.0 569.4 L1077.5 571.3 L1078.0 574.5 L1078.5 578.1 L1079.0 582.1 L1079.5 587.1 L1080.0 591.6 L1080.5 594.1 L1081.0 595.8 L1081.5 596.8 L1082.0 596.6 L1082.5 595.4 L1083.0 593.5 L1083.5 591.0 L1084.0 586.9 L1084.5 582.2 L1085.0 578.4 L1085.5 575.3 L1086.0 572.4 L1086.5 569.8 L1087.0 567.4 L1087.5 565.3 L1088.0 563.4 L1088.5 561.7 L1089.0 560.1 L1089.5 558.8 L1090.0 557.9 L1090.5 557.2 L1091.0 556.5 L1091.5 555.9 L1092.0 555.4 L1092.5 555.1 L1093.0 555.1 L1093.5 555.2 L1094.0 555.4 L1094.5 555.7 L1095.0 556.2 L1095.5 557.3 L1096.0 559.6 L1096.5 562.4 L1097.0 565.5 L1097.5 569.8 L1098.0 574.0 L1098.5 576.8 L1099.0 578.4 L1099.5 579.4 L1100.0 579.1 L1100.5 578.0 L1101.0 576.5 L1101.5 574.4 L1102.0 571.4 L1102.5 568.3 L1103.0 565.6 L1103.5 563.4 L1104.0 561.3 L1104.5 559.3 L1105.0 557.5 L1105.5 556.0 L1106.0 554.7 L1106.5 553.5 L1107.0 552.4 L1107.5 551.5 L1108.0 550.7 L1108.5 550.1 L1109.0 549.6 L1109.5 549.2 L1110.0 548.8 L1110.5 548.5 L1111.0 548.3 L1111.5 548.3 L1112.0 548.3 L1112.5 548.5 L1113.0 548.6 L1113.5 548.9 L1114.0 549.2 L1114.5 549.5 L1115.0 549.8 L1115.5 550.4 L1116.0 551.0 L1116.5 551.8 L1117.0 552.6 L1117.5 553.6 L1118.0 554.6 L1118.5 555.9 L1119.0 557.3 L1119.5 558.9 L1120.0 560.6 L1120.5 562.3 L1121.0 564.4 L1121.5 566.7 L1122.0 569.0 L1122.5 571.0 L1123.0 572.6 L1123.5 574.0 L1124.0 575.3 L1124.5 576.3 L1125.0 577.0 L1125.5 577.5 L1126.0 578.0 L1126.5 578.4 L1127.0 578.8 L1127.5 579.2 L1128.0 579.8 L1128.5 580.6 L1129.0 581.6 L1129.5 582.7 L1130.0 584.0 L1130.5 585.5 L1131.0 587.4 L1131.5 590.0 L1132.0 592.9 L1132.5 595.9 L1133.0 598.8 L1133.5 601.9 L1134.0 605.1 L1134.5 607.9 L1135.0 610.3 L1135.5 612.3 L1136.0 614.2 L1136.5 615.8 L1137.0 617.2 L1137.5 618.3 L1138.0 619.2 L1138.5 620.0 L1139.0 620.6 L1139.5 621.1 L1140.0 621.4 L1140.5 621.7 L1141.0 621.9 L1141.5 622.0 L1142.0 622.2 L1142.5 622.2 L1143.0 622.3 L1143.5 622.0 L1144.0 621.2 L1144.5 620.2 L1145.0 618.9 L1145.5 617.4 L1146.0 614.8 L1146.5 611.8 L1147.0 609.6 L1147.5 608.5 L1148.0 607.6 L1148.5 607.1 L1149.0 607.2 L1149.5 608.4 L1150.0 610.8 L1150.5 623.2 L1151.0 637.4 L1151.5 648.9 L1152.0 663.6 L1152.5 673.3 L1153.0 679.9 L1153.5 684.8 L1154.0 687.4 L1154.5 688.4 L1155.0 686.7 L1155.5 683.7 L1156.0 679.0 L1156.5 673.9 L1157.0 669.2 L1157.5 664.4 L1158.0 660.1 L1158.5 656.7 L1159.0 654.0 L1159.5 651.5 L1160.0 648.5 L1160.5 644.0 L1161.0 637.6 L1161.5 632.6 L1162.0 628.2 L1162.5 624.5 L1163.0 622.0 L1163.5 620.1 L1164.0 618.5 L1164.5 617.3 L1165.0 616.6 L1165.5 616.2 L1166.0 615.9 L1166.5 615.7 L1167.0 615.5 L1167.5 615.5 L1168.0 615.7 L1168.5 616.1 L1169.0 616.6 L1169.5 617.3 L1170.0 618.0 L1170.5 618.8 L1171.0 620.0 L1171.5 621.5 L1172.0 623.2 L1172.5 625.0 L1173.0 626.8 L1173.5 628.8 L1174.0 631.1 L1174.5 633.5 L1175.0 636.1 L1175.5 638.5 L1176.0 641.3 L1176.5 644.2 L1177.0 646.4 L1177.5 647.5 L1178.0 648.4 L1178.5 649.1 L1179.0 649.7 L1179.5 650.1 L1180.0 650.3 L1180.5 650.5 L1181.0 650.7 L1181.5 650.8 L1182.0 650.9 L1182.5 651.0 L1183.0 651.0 L1183.5 651.0 L1184.0 651.0 L1184.5 650.9 L1185.0 650.7 L1185.5 650.6 L1186.0 650.4 L1186.5 650.2 L1187.0 649.8 L1187.5 649.2 L1188.0 648.3 L1188.5 647.2 L1189.0 645.5 L1189.5 642.5 L1190.0 639.0 L1190.5 635.8 L1191.0 632.7 L1191.5 629.6 L1192.0 626.8 L1192.5 624.3 L1193.0 621.8 L1193.5 619.6 L1194.0 617.7 L1194.5 616.5 L1195.0 615.7 L1195.5 614.9 L1196.0 614.4 L1196.5 614.1 L1197.0 614.2 L1197.5 614.6 L1198.0 615.1 L1198.5 615.8 L1199.0 616.7 L1199.5 618.1 L1200.0 620.0 L1200.5 621.9 L1201.0 623.5 L1201.5 624.6 L1202.0 625.7 L1202.5 626.6 L1203.0 627.2 L1203.5 627.3 L1204.0 625.3 L1204.5 622.0 L1205.0 616.3 L1205.5 608.0 L1206.0 602.3 L1206.5 598.9 L1207.0 596.3 L1207.5 594.6 L1208.0 593.6 L1208.5 592.9 L1209.0 592.4 L1209.5 592.3 L1210.0 592.7 L1210.5 593.3 L1211.0 594.0 L1211.5 594.7 L1212.0 595.3 L1212.5 595.9 L1213.0 596.6 L1213.5 597.3 L1214.0 597.8 L1214.5 598.3 L1215.0 598.5 L1215.5 598.5 L1216.0 598.4 L1216.5 598.2 L1217.0 597.9 L1217.5 597.5 L1218.0 597.2 L1218.5 596.9 L1219.0 596.7 L1219.5 596.4 L1220.0 596.1 L1220.5 595.9 L1221.0 595.7 L1221.5 595.7 L1222.0 595.9 L1222.5 596.5 L1223.0 597.3 L1223.5 598.2 L1224.0 599.2 L1224.5 600.5 L1225.0 602.0 L1225.5 603.1 L1226.0 603.7 L1226.5 603.9 L1227.0 604.1 L1227.5 604.3 L1228.0 604.4 L1228.5 604.5 L1229.0 604.5 L1229.5 604.3 L1230.0 604.1 L1230.5 603.8 L1231.0 603.4 L1231.5 603.1 L1232.0 602.9 L1232.5 602.6 L1233.0 602.4 L1233.5 602.2 L1234.0 602.0 L1234.5 601.9 L1235.0 602.1 L1235.5 602.8 L1236.0 604.1 L1236.5 605.8 L1237.0 610.0 L1237.5 615.6 L1238.0 620.0 L1238.5 624.0 L1239.0 627.5 L1239.5 630.1 L1240.0 632.0 L1240.5 633.7 L1241.0 635.1 L1241.5 636.4 L1242.0 637.6 L1242.5 638.8 L1243.0 639.9 L1243.5 640.9 L1244.0 641.9 L1244.5 642.8 L1245.0 643.7 L1245.5 644.7 L1246.0 645.6 L1246.5 646.7 L1247.0 648.2 L1247.5 650.3 L1248.0 652.7 L1248.5 654.9 L1249.0 657.0 L1249.5 659.2 L1250.0 661.3 L1250.5 663.0 L1251.0 664.2 L1251.5 665.3 L1252.0 665.9 L1252.5 664.9 L1253.0 662.0 L1253.5 658.2 L1254.0 653.9 L1254.5 649.5 L1255.0 632.1 L1255.5 621.7 L1256.0 617.3 L1256.5 615.2 L1257.0 613.8 L1257.5 613.3 L1258.0 613.3 L1258.5 613.5 L1259.0 613.7 L1259.5 614.0 L1260.0 614.2 L1260.5 614.5 L1261.0 614.8 L1261.5 615.1 L1262.0 615.5 L1262.5 615.8 L1263.0 616.2 L1263.5 616.6 L1264.0 616.9 L1264.5 617.3 L1265.0 617.7 L1265.5 618.2 L1266.0 618.6 L1266.5 619.1 L1267.0 619.5 L1267.5 619.9 L1268.0 620.3 L1268.5 620.5 L1269.0 620.8 L1269.5 621.0 L1270.0 621.2 L1270.5 621.3 L1271.0 621.4 L1271.5 621.2 L1272.0 620.3 L1272.5 618.9 L1273.0 617.3 L1273.5 615.5 L1274.0 612.7 L1274.5 609.3 L1275.0 606.1 L1275.5 603.8 L1276.0 602.3 L1276.5 600.9 L1277.0 599.6 L1277.5 598.5 L1278.0 597.4 L1278.5 596.4 L1279.0 595.4 L1279.5 594.5 L1280.0 593.6 L1280.5 592.9 L1281.0 592.4 L1281.5 592.1 L1282.0 591.9 L1282.5 591.8 L1283.0 591.7 L1283.5 591.9 L1284.0 592.8 L1284.5 594.2 L1285.0 596.1 L1285.5 600.5 L1286.0 606.5 L1286.5 612.0 L1287.0 616.3 L1287.5 620.6 L1288.0 624.5 L1288.5 627.9 L1289.0 630.6 L1289.5 633.0 L1290.0 635.1 L1290.5 637.0 L1291.0 638.6 L1291.5 640.0 L1292.0 641.4 L1292.5 642.7 L1293.0 643.7 L1293.5 644.4 L1294.0 644.5 L1294.5 644.3 L1295.0 644.1 L1295.5 643.6 L1296.0 641.7 L1296.5 637.7 L1297.0 632.5 L1297.5 624.7 L1298.0 617.9 L1298.5 613.4 L1299.0 609.7 L1299.5 607.9 L1300.0 606.9 L1300.5 606.2 L1301.0 605.9 L1301.5 606.3 L1302.0 607.6 L1302.5 609.5 L1303.0 611.6 L1303.5 614.5 L1304.0 617.9 L1304.5 620.9 L1305.0 623.8 L1305.5 626.6 L1306.0 628.3 L1306.5 628.3 L1307.0 628.1 L1307.5 627.6 L1308.0 624.7 L1308.5 618.8 L1309.0 612.8 L1309.5 608.0 L1310.0 603.1 L1310.5 599.2 L1311.0 596.9 L1311.5 595.2 L1312.0 593.9 L1312.5 593.3 L1313.0 593.1 L1313.5 592.9 L1314.0 592.9 L1314.5 593.3 L1315.0 595.0 L1315.5 597.3 L1316.0 599.6 L1316.5 602.3 L1317.0 605.5 L1317.5 608.8 L1318.0 612.0 L1318.5 614.7 L1319.0 617.4 L1319.5 620.0 L1320.0 622.4 L1320.5 624.5 L1321.0 626.2 L1321.5 627.7 L1322.0 629.1 L1322.5 630.4 L1323.0 631.5 L1323.5 632.5 L1324.0 633.2 L1324.5 633.6 L1325.0 634.0 L1325.5 634.4 L1326.0 634.7 L1326.5 634.9 L1327.0 635.1 L1327.5 635.2 L1328.0 635.2 L1328.5 635.2 L1329.0 635.2 L1329.5 635.2 L1330.0 635.2 L1330.5 635.2 L1331.0 635.2 L1331.5 635.1 L1332.0 634.7 L1332.5 634.0 L1333.0 633.1 L1333.5 631.6 L1334.0 627.7 L1334.5 624.9 L1335.0 623.7 L1335.5 622.8 L1336.0 622.1 L1336.5 621.7 L1337.0 621.5 L1337.5 621.3 L1338.0 621.2 L1338.5 621.1 L1339.0 621.0 L1339.5 620.9 L1340.0 620.8 L1340.5 620.8 L1341.0 620.7 L1341.5 620.7 L1342.0 620.6 L1342.5 620.6 L1343.0 620.6 L1343.5 620.5 L1344.0 620.3 L1344.5 619.2 L1345.0 617.5 L1345.5 615.5 L1346.0 611.7 L1346.5 607.3 L1347.0 604.8 L1347.5 603.2 L1348.0 602.0 L1348.5 601.1 L1349.0 600.7 L1349.5 600.4 L1350.0 600.2 L1350.5 600.0 L1351.0 599.9 L1351.5 599.7 L1352.0 599.7 L1352.5 599.6 L1353.0 599.5 L1353.5 599.5 L1354.0 599.4 L1354.5 599.4 L1355.0 599.3 L1355.5 599.3 L1356.0 599.3 L1356.5 599.3 L1357.0 599.3 L1357.5 599.4 L1358.0 599.5 L1358.5 599.6 L1359.0 599.8 L1359.5 600.0 L1360.0 600.2 L1360.5 600.6 L1361.0 601.1 L1361.5 601.8 L1362.0 602.5 L1362.5 603.2 L1363.0 604.1 L1363.5 605.1 L1364.0 606.2 L1364.5 607.3 L1365.0 608.2 L1365.5 609.2 L1366.0 610.2 L1366.5 611.0 L1367.0 611.5 L1367.5 611.3 L1368.0 610.7 L1368.5 609.7 L1369.0 608.0 L1369.5 603.5 L1370.0 598.7 L1370.5 594.8 L1371.0 591.0 L1371.5 588.3 L1372.0 587.1 L1372.5 586.2 L1373.0 585.4 L1373.5 585.0 L1374.0 584.9 L1374.5 585.0 L1375.0 585.2 L1375.5 585.5 L1376.0 585.9 L1376.5 586.3 L1377.0 587.1 L1377.5 588.2 L1378.0 589.4 L1378.5 590.8 L1379.0 592.1 L1379.5 593.3 L1380.0 594.6 L1380.5 596.0 L1381.0 597.4 L1381.5 598.8 L1382.0 600.2 L1382.5 601.6 L1383.0 603.1 L1383.5 604.5 L1384.0 606.0 L1384.5 607.6 L1385.0 609.1 L1385.5 610.6 L1386.0 612.1 L1386.5 613.6 L1387.0 615.2 L1387.5 616.7 L1388.0 618.2 L1388.5 619.7 L1389.0 621.2 L1389.5 622.6 L1390.0 623.9 L1390.5 625.1 L1391.0 626.2 L1391.5 627.4 L1392.0 628.6 L1392.5 629.9 L1393.0 631.4 L1393.5 633.2 L1394.0 635.2 L1394.5 637.3 L1395.0 639.4 L1395.5 641.6 L1396.0 643.8 L1396.5 646.3 L1397.0 650.2 L1397.5 653.6 L1398.0 654.1 L1398.5 654.3 L1399.0 654.1 L1399.5 652.8 L1400.0 651.1 L1400.5 649.2 L1401.0 646.4 L1401.5 640.8 L1402.0 634.2 L1402.5 629.6 L1403.0 625.8 L1403.5 622.6 L1404.0 620.1 L1404.5 617.9 L1405.0 616.1 L1405.5 614.5 L1406.0 613.1 L1406.5 612.1 L1407.0 611.2 L1407.5 610.3 L1408.0 609.6 L1408.5 609.1 L1409.0 608.9 L1409.5 608.8 L1410.0 608.7 L1410.5 608.6 L1411.0 608.6 L1411.5 608.8 L1412.0 609.6 L1412.5 610.7 L1413.0 612.0 L1413.5 613.3 L1414.0 614.9 L1414.5 616.7 L1415.0 618.0 L1415.5 618.6 L1416.0 619.2 L1416.5 619.6 L1417.0 619.9 L1417.5 619.9 L1418.0 619.0 L1418.5 617.4 L1419.0 615.9 L1419.5 614.7 L1420.0 613.5 L1420.5 612.5 L1421.0 611.7 L1421.5 611.4 L1422.0 611.1 L1422.5 610.9 L1423.0 610.8 L1423.5 610.7 L1424.0 610.6 L1424.5 610.7 L1425.0 610.9 L1425.5 611.2 L1426.0 611.6 L1426.5 611.9 L1427.0 612.2 L1427.5 612.3 L1428.0 612.3 L1428.5 612.3 L1429.0 612.2 L1429.5 612.1 L1430.0 612.0 L1430.5 611.4 L1431.0 609.6 L1431.5 607.5 L1432.0 605.4 L1432.5 602.8 L1433.0 600.3 L1433.5 598.7 L1434.0 597.8 L1434.5 597.0 L1435.0 596.6 L1435.5 596.7 L1436.0 597.0 L1436.5 597.5 L1437.0 598.1 L1437.5 599.3 L1438.0 600.9 L1438.5 602.7 L1439.0 604.4 L1439.5 605.8 L1440.0 607.0 L1440.5 608.0 L1441.0 609.1 L1441.5 610.0 L1442.0 611.0 L1442.5 611.8 L1443.0 612.7 L1443.5 613.4 L1444.0 614.1 L1444.5 614.8 L1445.0 615.5 L1445.5 616.2 L1446.0 617.1 L1446.5 618.1 L1447.0 619.2 L1447.5 620.5 L1448.0 621.9 L1448.5 623.5 L1449.0 625.3 L1449.5 627.7 L1450.0 630.4 L1450.5 633.1 L1451.0 635.8 L1451.5 638.7 L1452.0 641.4 L1452.5 642.9 L1453.0 643.8 L1453.5 644.4 L1454.0 644.4 L1454.5 643.3 L1455.0 641.5 L1455.5 639.3 L1456.0 636.0 L1456.5 631.4 L1457.0 626.0 L1457.5 619.8 L1458.0 612.0 L1458.5 604.1 L1459.0 595.8 L1459.5 591.6 L1460.0 590.7 L1460.0 590.7" fill="none" stroke="#f04e52" stroke-width="1.1" stroke-linejoin="round" clip-path="url(#cneg)"/>
  <path d="M93.0 664.9 L93.5 664.4 L94.0 663.8 L94.5 663.3 L95.0 662.9 L95.5 662.4 L96.0 662.1 L96.5 661.7 L97.0 661.5 L97.5 661.3 L98.0 661.1 L98.5 660.9 L99.0 660.8 L99.5 660.6 L100.0 660.5 L100.5 660.4 L101.0 660.2 L101.5 660.1 L102.0 660.0 L102.5 659.8 L103.0 659.7 L103.5 659.6 L104.0 659.5 L104.5 659.3 L105.0 659.2 L105.5 658.9 L106.0 658.5 L106.5 658.0 L107.0 657.3 L107.5 656.6 L108.0 655.9 L108.5 655.3 L109.0 654.9 L109.5 654.3 L110.0 653.8 L110.5 653.4 L111.0 653.1 L111.5 653.1 L112.0 653.3 L112.5 653.6 L113.0 654.1 L113.5 654.5 L114.0 654.9 L114.5 655.5 L115.0 656.1 L115.5 656.7 L116.0 657.0 L116.5 657.1 L117.0 657.1 L117.5 657.1 L118.0 657.1 L118.5 657.1 L119.0 657.1 L119.5 657.1 L120.0 656.9 L120.5 656.7 L121.0 656.4 L121.5 656.1 L122.0 655.8 L122.5 655.5 L123.0 655.2 L123.5 654.9 L124.0 654.6 L124.5 654.3 L125.0 654.0 L125.5 653.7 L126.0 653.4 L126.5 653.2 L127.0 653.0 L127.5 652.9 L128.0 652.8 L128.5 652.7 L129.0 652.7 L129.5 652.6 L130.0 652.6 L130.5 652.6 L131.0 652.8 L131.5 653.1 L132.0 653.6 L132.5 654.2 L133.0 654.6 L133.5 654.9 L134.0 655.1 L134.5 655.4 L135.0 655.6 L135.5 655.8 L136.0 655.9 L136.5 655.9 L137.0 655.9 L137.5 655.9 L138.0 655.9 L138.5 655.8 L139.0 655.7 L139.5 655.6 L140.0 655.5 L140.5 655.3 L141.0 655.0 L141.5 654.7 L142.0 654.3 L142.5 653.8 L143.0 653.2 L143.5 652.4 L144.0 651.3 L144.5 650.3 L145.0 649.4 L145.5 648.6 L146.0 647.9 L146.5 647.2 L147.0 646.7 L147.5 646.6 L148.0 646.7 L148.5 646.8 L149.0 647.0 L149.5 647.2 L150.0 647.6 L150.5 648.0 L151.0 648.5 L151.5 649.0 L152.0 649.2 L152.5 649.4 L153.0 649.5 L153.5 649.6 L154.0 649.7 L154.5 649.7 L155.0 649.6 L155.5 649.3 L156.0 648.9 L156.5 648.4 L157.0 648.0 L157.5 647.5 L158.0 646.9 L158.5 646.2 L159.0 645.7 L159.5 645.3 L160.0 645.0 L160.5 644.8 L161.0 644.7 L161.5 644.5 L162.0 644.4 L162.5 644.2 L163.0 644.1 L163.5 643.9 L164.0 643.8 L164.5 643.7 L165.0 643.6 L165.5 643.5 L166.0 643.3 L166.5 643.2 L167.0 643.0 L167.5 642.7 L168.0 642.5 L168.5 642.2 L169.0 641.9 L169.5 641.7 L170.0 641.4 L170.5 641.1 L171.0 640.8 L171.5 640.5 L172.0 640.2 L172.5 639.9 L173.0 639.6 L173.5 639.3 L174.0 639.0 L174.5 638.7 L175.0 638.4 L175.5 638.0 L176.0 637.7 L176.5 637.3 L177.0 636.9 L177.5 636.4 L178.0 636.0 L178.5 635.4 L179.0 634.8 L179.5 633.9 L180.0 632.9 L180.5 631.7 L181.0 630.6 L181.5 629.8 L182.0 629.0 L182.5 628.2 L183.0 627.6 L183.5 627.2 L184.0 627.2 L184.5 627.3 L185.0 627.4 L185.5 627.6 L186.0 627.8 L186.5 628.4 L187.0 629.2 L187.5 630.0 L188.0 630.9 L188.5 631.7 L189.0 632.5 L189.5 633.2 L190.0 634.0 L190.5 634.8 L191.0 635.5 L191.5 636.2 L192.0 636.9 L192.5 637.6 L193.0 638.3 L193.5 638.9 L194.0 639.4 L194.5 639.7 L195.0 640.1 L195.5 640.4 L196.0 640.7 L196.5 640.9 L197.0 640.9 L197.5 640.8 L198.0 640.7 L198.5 640.5 L199.0 640.3 L199.5 640.1 L200.0 639.8 L200.5 639.4 L201.0 638.8 L201.5 638.3 L202.0 637.6 L202.5 636.9 L203.0 636.0 L203.5 635.0 L204.0 633.9 L204.5 632.8 L205.0 631.6 L205.5 630.2 L206.0 628.7 L206.5 627.4 L207.0 626.1 L207.5 625.0 L208.0 623.9 L208.5 622.9 L209.0 622.0 L209.5 621.2 L210.0 620.5 L210.5 619.9 L211.0 619.3 L211.5 618.8 L212.0 618.2 L212.5 617.7 L213.0 617.2 L213.5 616.6 L214.0 616.1 L214.5 615.4 L215.0 614.5 L215.5 613.4 L216.0 612.2 L216.5 610.9 L217.0 609.5 L217.5 607.7 L218.0 605.9 L218.5 604.2 L219.0 602.9 L219.5 601.7 L220.0 600.7 L220.5 600.1 L221.0 599.6 L221.5 599.2 L222.0 598.9 L222.5 598.6 L223.0 598.4 L223.5 598.2 L224.0 598.1 L224.5 597.9 L225.0 597.8 L225.5 597.6 L226.0 597.3 L226.5 597.0 L227.0 596.6 L227.5 596.2 L228.0 595.8 L228.5 595.4 L229.0 594.9 L229.5 594.4 L230.0 593.9 L230.5 593.3 L231.0 592.9 L231.5 592.8 L232.0 592.8 L232.5 592.8 L233.0 592.8 L233.5 592.8 L234.0 592.8 L234.5 593.2 L235.0 594.1 L235.5 595.3 L236.0 597.1 L236.5 600.2 L237.0 603.2 L237.5 605.8 L238.0 608.0 L238.5 608.9 L239.0 609.4 L239.5 609.7 L240.0 609.7 L240.5 609.3 L241.0 608.3 L241.5 607.1 L242.0 605.8 L242.5 603.9 L243.0 602.0 L243.5 600.4 L244.0 599.0 L244.5 597.7 L245.0 596.6 L245.5 595.6 L246.0 594.8 L246.5 594.1 L247.0 593.5 L247.5 593.0 L248.0 592.5 L248.5 592.1 L249.0 591.8 L249.5 591.5 L250.0 591.3 L250.5 591.1 L251.0 590.9 L251.5 590.7 L252.0 590.6 L252.5 590.5 L253.0 590.4 L253.5 590.3 L254.0 590.2 L254.5 590.2 L255.0 590.1 L255.5 590.0 L256.0 589.9 L256.5 589.8 L257.0 589.7 L257.5 589.6 L258.0 589.5 L258.5 589.3 L259.0 589.2 L259.5 589.1 L260.0 588.9 L260.5 588.7 L261.0 588.5 L261.5 588.3 L262.0 588.2 L262.5 588.1 L263.0 588.1 L263.5 588.2 L264.0 588.4 L264.5 588.6 L265.0 588.9 L265.5 589.6 L266.0 590.6 L266.5 591.6 L267.0 592.5 L267.5 593.1 L268.0 593.8 L268.5 594.4 L269.0 594.8 L269.5 595.0 L270.0 594.9 L270.5 594.7 L271.0 594.3 L271.5 593.8 L272.0 593.4 L272.5 592.9 L273.0 592.3 L273.5 591.7 L274.0 591.2 L274.5 590.8 L275.0 590.7 L275.5 590.6 L276.0 590.5 L276.5 590.4 L277.0 590.5 L277.5 590.8 L278.0 591.3 L278.5 591.8 L279.0 592.3 L279.5 592.8 L280.0 593.3 L280.5 593.8 L281.0 594.3 L281.5 594.6 L282.0 594.8 L282.5 594.9 L283.0 595.1 L283.5 595.2 L284.0 595.3 L284.5 595.4 L285.0 595.6 L285.5 595.7 L286.0 595.9 L286.5 596.0 L287.0 596.2 L287.5 596.4 L288.0 596.6 L288.5 596.9 L289.0 597.3 L289.5 597.8 L290.0 598.4 L290.5 599.0 L291.0 599.6 L291.5 600.4 L292.0 601.3 L292.5 602.1 L293.0 602.7 L293.5 603.3 L294.0 603.8 L294.5 604.3 L295.0 604.7 L295.5 605.0 L296.0 605.3 L296.5 605.5 L297.0 605.8 L297.5 606.0 L298.0 606.2 L298.5 606.3 L299.0 606.3 L299.5 606.4 L300.0 606.4 L300.5 606.4 L301.0 606.4 L301.5 606.4 L302.0 606.4 L302.5 606.4 L303.0 606.3 L303.5 606.2 L304.0 606.1 L304.5 605.9 L305.0 605.7 L305.5 605.4 L306.0 605.1 L306.5 604.7 L307.0 604.0 L307.5 603.1 L308.0 602.0 L308.5 600.9 L309.0 599.2 L309.5 597.1 L310.0 595.4 L310.5 594.5 L311.0 593.7 L311.5 593.2 L312.0 592.8 L312.5 592.9 L313.0 593.2 L313.5 593.7 L314.0 594.3 L314.5 595.6 L315.0 597.3 L315.5 599.0 L316.0 600.4 L316.5 601.9 L317.0 603.1 L317.5 603.7 L318.0 604.2 L318.5 604.5 L319.0 604.7 L319.5 604.4 L320.0 603.7 L320.5 602.9 L321.0 602.0 L321.5 600.7 L322.0 599.1 L322.5 597.7 L323.0 596.4 L323.5 595.3 L324.0 594.2 L324.5 593.1 L325.0 592.2 L325.5 591.5 L326.0 590.9 L326.5 590.3 L327.0 589.8 L327.5 589.4 L328.0 589.1 L328.5 588.8 L329.0 588.6 L329.5 588.4 L330.0 588.3 L330.5 588.2 L331.0 588.3 L331.5 588.4 L332.0 588.6 L332.5 588.8 L333.0 589.1 L333.5 589.4 L334.0 589.8 L334.5 590.3 L335.0 590.9 L335.5 591.5 L336.0 592.2 L336.5 593.1 L337.0 594.0 L337.5 594.9 L338.0 595.9 L338.5 596.8 L339.0 597.6 L339.5 598.4 L340.0 599.2 L340.5 600.0 L341.0 600.7 L341.5 601.4 L342.0 602.0 L342.5 602.4 L343.0 602.8 L343.5 603.2 L344.0 603.5 L344.5 603.8 L345.0 604.0 L345.5 604.1 L346.0 604.1 L346.5 604.2 L347.0 604.2 L347.5 604.3 L348.0 604.5 L348.5 604.9 L349.0 605.4 L349.5 606.0 L350.0 606.7 L350.5 607.5 L351.0 608.8 L351.5 610.2 L352.0 611.5 L352.5 612.6 L353.0 613.2 L353.5 613.8 L354.0 614.4 L354.5 614.8 L355.0 615.0 L355.5 615.0 L356.0 614.9 L356.5 614.7 L357.0 614.5 L357.5 614.3 L358.0 614.0 L358.5 613.7 L359.0 613.3 L359.5 612.9 L360.0 612.3 L360.5 611.6 L361.0 610.9 L361.5 610.1 L362.0 609.4 L362.5 608.5 L363.0 607.5 L363.5 606.4 L364.0 605.3 L364.5 604.2 L365.0 603.2 L365.5 602.4 L366.0 601.7 L366.5 600.9 L367.0 600.3 L367.5 599.6 L368.0 599.1 L368.5 598.6 L369.0 598.2 L369.5 597.8 L370.0 597.4 L370.5 597.0 L371.0 596.7 L371.5 596.5 L372.0 596.4 L372.5 596.4 L373.0 596.4 L373.5 596.4 L374.0 596.4 L374.5 596.4 L375.0 596.4 L375.5 596.4 L376.0 596.4 L376.5 596.6 L377.0 596.9 L377.5 597.3 L378.0 597.7 L378.5 598.1 L379.0 598.5 L379.5 598.9 L380.0 599.3 L380.5 599.7 L381.0 600.2 L381.5 600.6 L382.0 601.0 L382.5 601.5 L383.0 602.0 L383.5 602.5 L384.0 603.0 L384.5 603.5 L385.0 603.8 L385.5 604.0 L386.0 604.0 L386.5 603.8 L387.0 603.5 L387.5 603.2 L388.0 602.8 L388.5 602.3 L389.0 601.5 L389.5 600.5 L390.0 599.7 L390.5 599.2 L391.0 598.9 L391.5 598.7 L392.0 598.5 L392.5 598.4 L393.0 598.4 L393.5 598.5 L394.0 598.7 L394.5 599.1 L395.0 599.4 L395.5 599.8 L396.0 600.2 L396.5 600.6 L397.0 601.1 L397.5 601.6 L398.0 602.1 L398.5 602.7 L399.0 603.2 L399.5 603.8 L400.0 604.5 L400.5 605.3 L401.0 606.1 L401.5 606.8 L402.0 607.3 L402.5 607.7 L403.0 607.8 L403.5 607.9 L404.0 608.0 L404.5 608.1 L405.0 608.2 L405.5 608.2 L406.0 608.2 L406.5 608.2 L407.0 608.1 L407.5 608.0 L408.0 607.9 L408.5 607.8 L409.0 607.7 L409.5 607.7 L410.0 607.8 L410.5 607.9 L411.0 608.1 L411.5 608.4 L412.0 608.6 L412.5 608.9 L413.0 609.2 L413.5 609.6 L414.0 610.0 L414.5 610.5 L415.0 611.0 L415.5 611.5 L416.0 611.8 L416.5 612.2 L417.0 612.5 L417.5 612.8 L418.0 613.1 L418.5 613.4 L419.0 613.6 L419.5 613.9 L420.0 614.0 L420.5 614.2 L421.0 614.3 L421.5 614.4 L422.0 614.4 L422.5 614.5 L423.0 614.6 L423.5 614.6 L424.0 614.7 L424.5 614.8 L425.0 614.9 L425.5 615.0 L426.0 615.1 L426.5 615.2 L427.0 615.3 L427.5 615.4 L428.0 615.5 L428.5 615.7 L429.0 615.9 L429.5 616.2 L430.0 616.7 L430.5 617.2 L431.0 617.8 L431.5 618.4 L432.0 619.1 L432.5 620.0 L433.0 620.8 L433.5 621.4 L434.0 621.6 L434.5 621.5 L435.0 621.4 L435.5 621.3 L436.0 621.1 L436.5 620.9 L437.0 620.3 L437.5 619.2 L438.0 618.0 L438.5 616.9 L439.0 616.2 L439.5 615.7 L440.0 615.4 L440.5 615.1 L441.0 615.0 L441.5 615.4 L442.0 616.4 L442.5 617.7 L443.0 619.1 L443.5 621.1 L444.0 623.3 L444.5 625.3 L445.0 626.5 L445.5 627.2 L446.0 627.9 L446.5 628.4 L447.0 628.8 L447.5 628.9 L448.0 628.8 L448.5 628.6 L449.0 628.4 L449.5 628.2 L450.0 628.0 L450.5 627.8 L451.0 627.6 L451.5 627.5 L452.0 627.4 L452.5 627.3 L453.0 627.3 L453.5 627.2 L454.0 627.2 L454.5 627.2 L455.0 627.3 L455.5 627.5 L456.0 627.8 L456.5 628.1 L457.0 628.5 L457.5 628.8 L458.0 629.1 L458.5 629.5 L459.0 629.9 L459.5 630.4 L460.0 630.9 L460.5 631.3 L461.0 631.7 L461.5 632.1 L462.0 632.3 L462.5 632.6 L463.0 632.9 L463.5 633.1 L464.0 633.4 L464.5 633.5 L465.0 633.6 L465.5 633.6 L466.0 633.3 L466.5 632.9 L467.0 632.4 L467.5 631.8 L468.0 631.0 L468.5 629.4 L469.0 627.6 L469.5 626.2 L470.0 625.3 L470.5 624.5 L471.0 623.7 L471.5 623.1 L472.0 622.6 L472.5 622.1 L473.0 621.7 L473.5 621.3 L474.0 620.9 L474.5 620.6 L475.0 620.4 L475.5 620.4 L476.0 620.4 L476.5 620.5 L477.0 620.6 L477.5 620.8 L478.0 620.9 L478.5 621.1 L479.0 621.4 L479.5 622.1 L480.0 623.0 L480.5 624.0 L481.0 625.0 L481.5 625.8 L482.0 626.5 L482.5 627.2 L483.0 627.9 L483.5 628.3 L484.0 628.4 L484.5 628.3 L485.0 628.2 L485.5 628.0 L486.0 627.7 L486.5 627.4 L487.0 627.1 L487.5 626.6 L488.0 625.8 L488.5 624.9 L489.0 623.8 L489.5 622.7 L490.0 621.6 L490.5 620.3 L491.0 618.8 L491.5 617.2 L492.0 615.5 L492.5 613.8 L493.0 611.8 L493.5 609.8 L494.0 607.7 L494.5 605.7 L495.0 603.6 L495.5 601.7 L496.0 599.8 L496.5 598.0 L497.0 596.2 L497.5 594.6 L498.0 593.1 L498.5 591.8 L499.0 590.8 L499.5 589.9 L500.0 589.0 L500.5 588.0 L501.0 586.9 L501.5 585.6 L502.0 584.3 L502.5 582.9 L503.0 581.5 L503.5 580.1 L504.0 578.5 L504.5 576.8 L505.0 575.2 L505.5 573.8 L506.0 572.7 L506.5 571.8 L507.0 570.9 L507.5 570.1 L508.0 569.4 L508.5 568.8 L509.0 568.2 L509.5 567.6 L510.0 567.1 L510.5 566.5 L511.0 566.0 L511.5 565.5 L512.0 565.2 L512.5 565.1 L513.0 565.1 L513.5 565.1 L514.0 565.2 L514.5 565.3 L515.0 565.4 L515.5 565.5 L516.0 565.9 L516.5 566.5 L517.0 567.1 L517.5 567.7 L518.0 568.2 L518.5 568.4 L519.0 568.5 L519.5 568.6 L520.0 568.7 L520.5 568.7 L521.0 568.7 L521.5 568.8 L522.0 568.8 L522.5 568.7 L523.0 568.6 L523.5 568.5 L524.0 568.3 L524.5 568.0 L525.0 567.8 L525.5 567.5 L526.0 567.2 L526.5 566.8 L527.0 566.3 L527.5 565.7 L528.0 565.1 L528.5 564.3 L529.0 563.6 L529.5 562.9 L530.0 562.2 L530.5 561.5 L531.0 560.7 L531.5 560.1 L532.0 559.5 L532.5 559.2 L533.0 558.9 L533.5 558.6 L534.0 558.4 L534.5 558.2 L535.0 558.0 L535.5 557.8 L536.0 557.6 L536.5 557.4 L537.0 557.2 L537.5 557.0 L538.0 556.8 L538.5 556.5 L539.0 556.1 L539.5 555.4 L540.0 554.4 L540.5 553.0 L541.0 551.4 L541.5 548.8 L542.0 544.8 L542.5 540.8 L543.0 538.0 L543.5 535.6 L544.0 534.6 L544.5 534.4 L545.0 534.3 L545.5 534.5 L546.0 536.5 L546.5 539.5 L547.0 543.8 L547.5 548.5 L548.0 551.2 L548.5 553.4 L549.0 555.0 L549.5 555.9 L550.0 556.2 L550.5 556.4 L551.0 556.5 L551.5 556.6 L552.0 556.5 L552.5 556.4 L553.0 556.1 L553.5 555.7 L554.0 555.3 L554.5 554.9 L555.0 554.5 L555.5 554.1 L556.0 553.5 L556.5 552.9 L557.0 552.3 L557.5 551.6 L558.0 550.8 L558.5 550.0 L559.0 549.1 L559.5 548.0 L560.0 546.8 L560.5 545.6 L561.0 544.4 L561.5 543.2 L562.0 542.1 L562.5 540.9 L563.0 539.7 L563.5 538.6 L564.0 537.4 L564.5 536.3 L565.0 535.3 L565.5 534.3 L566.0 533.2 L566.5 532.2 L567.0 531.3 L567.5 530.7 L568.0 530.2 L568.5 529.8 L569.0 529.6 L569.5 529.6 L570.0 530.4 L570.5 531.7 L571.0 533.3 L571.5 535.5 L572.0 538.5 L572.5 541.1 L573.0 542.7 L573.5 544.0 L574.0 545.1 L574.5 546.0 L575.0 546.7 L575.5 547.1 L576.0 547.5 L576.5 547.7 L577.0 547.9 L577.5 548.1 L578.0 548.3 L578.5 548.6 L579.0 548.8 L579.5 549.1 L580.0 549.4 L580.5 549.8 L581.0 550.2 L581.5 550.6 L582.0 551.2 L582.5 551.8 L583.0 552.5 L583.5 553.2 L584.0 553.9 L584.5 554.5 L585.0 555.1 L585.5 555.8 L586.0 556.5 L586.5 557.1 L587.0 557.5 L587.5 557.6 L588.0 557.5 L588.5 557.1 L589.0 556.6 L589.5 556.1 L590.0 555.4 L590.5 554.3 L591.0 552.9 L591.5 551.5 L592.0 550.0 L592.5 548.6 L593.0 547.1 L593.5 545.6 L594.0 544.1 L594.5 542.5 L595.0 541.0 L595.5 539.2 L596.0 537.5 L596.5 536.0 L597.0 535.0 L597.5 534.2 L598.0 533.5 L598.5 533.0 L599.0 532.9 L599.5 532.9 L600.0 533.0 L600.5 533.1 L601.0 533.2 L601.5 533.4 L602.0 533.6 L602.5 533.9 L603.0 534.2 L603.5 534.7 L604.0 535.2 L604.5 536.2 L605.0 537.4 L605.5 538.3 L606.0 539.1 L606.5 539.8 L607.0 540.4 L607.5 540.9 L608.0 541.2 L608.5 541.5 L609.0 541.7 L609.5 541.9 L610.0 542.0 L610.5 542.1 L611.0 542.2 L611.5 542.2 L612.0 542.1 L612.5 542.1 L613.0 542.0 L613.5 542.0 L614.0 541.9 L614.5 541.9 L615.0 541.9 L615.5 541.9 L616.0 541.9 L616.5 541.9 L617.0 541.9 L617.5 542.0 L618.0 542.1 L618.5 542.2 L619.0 542.4 L619.5 543.4 L620.0 544.8 L620.5 546.8 L621.0 551.1 L621.5 555.8 L622.0 558.4 L622.5 560.6 L623.0 562.1 L623.5 562.5 L624.0 562.2 L624.5 561.7 L625.0 561.0 L625.5 560.4 L626.0 559.6 L626.5 558.7 L627.0 557.8 L627.5 557.1 L628.0 556.7 L628.5 556.6 L629.0 556.4 L629.5 556.3 L630.0 556.3 L630.5 556.2 L631.0 556.5 L631.5 557.3 L632.0 558.3 L632.5 559.6 L633.0 561.7 L633.5 563.7 L634.0 564.8 L634.5 565.5 L635.0 566.0 L635.5 566.3 L636.0 566.4 L636.5 566.0 L637.0 565.2 L637.5 564.2 L638.0 563.2 L638.5 562.4 L639.0 561.4 L639.5 560.5 L640.0 559.7 L640.5 559.2 L641.0 559.0 L641.5 558.8 L642.0 558.7 L642.5 558.6 L643.0 558.5 L643.5 558.5 L644.0 558.4 L644.5 558.5 L645.0 558.7 L645.5 558.9 L646.0 559.3 L646.5 559.7 L647.0 560.1 L647.5 560.5 L648.0 561.0 L648.5 561.6 L649.0 562.3 L649.5 563.1 L650.0 563.9 L650.5 564.9 L651.0 566.0 L651.5 567.3 L652.0 568.6 L652.5 569.7 L653.0 570.8 L653.5 571.9 L654.0 573.0 L654.5 574.0 L655.0 575.0 L655.5 575.9 L656.0 576.7 L656.5 577.4 L657.0 578.1 L657.5 578.7 L658.0 579.3 L658.5 579.9 L659.0 580.5 L659.5 581.0 L660.0 581.6 L660.5 582.2 L661.0 582.8 L661.5 583.4 L662.0 583.8 L662.5 584.1 L663.0 584.3 L663.5 584.4 L664.0 584.6 L664.5 584.7 L665.0 584.8 L665.5 584.9 L666.0 585.0 L666.5 585.0 L667.0 585.0 L667.5 585.0 L668.0 585.0 L668.5 584.9 L669.0 584.8 L669.5 584.8 L670.0 584.7 L670.5 584.6 L671.0 584.5 L671.5 584.5 L672.0 584.4 L672.5 584.3 L673.0 584.2 L673.5 584.1 L674.0 584.0 L674.5 583.8 L675.0 583.5 L675.5 582.9 L676.0 582.1 L676.5 581.1 L677.0 580.1 L677.5 578.8 L678.0 577.0 L678.5 575.0 L679.0 572.9 L679.5 571.0 L680.0 569.2 L680.5 567.3 L681.0 565.4 L681.5 563.8 L682.0 562.5 L682.5 561.5 L683.0 560.5 L683.5 559.7 L684.0 559.2 L684.5 559.1 L685.0 559.2 L685.5 559.3 L686.0 559.5 L686.5 559.7 L687.0 560.2 L687.5 560.9 L688.0 561.9 L688.5 562.9 L689.0 564.1 L689.5 565.4 L690.0 567.0 L690.5 568.8 L691.0 570.7 L691.5 572.5 L692.0 574.4 L692.5 576.5 L693.0 578.7 L693.5 580.7 L694.0 582.5 L694.5 584.4 L695.0 586.1 L695.5 587.3 L696.0 587.8 L696.5 588.0 L697.0 588.2 L697.5 588.4 L698.0 588.4 L698.5 588.1 L699.0 587.6 L699.5 586.9 L700.0 586.2 L700.5 585.4 L701.0 584.7 L701.5 583.9 L702.0 583.0 L702.5 582.0 L703.0 581.1 L703.5 580.2 L704.0 579.3 L704.5 578.5 L705.0 577.8 L705.5 577.0 L706.0 576.2 L706.5 575.5 L707.0 574.8 L707.5 574.2 L708.0 573.6 L708.5 573.0 L709.0 572.5 L709.5 572.1 L710.0 571.6 L710.5 571.2 L711.0 570.8 L711.5 570.5 L712.0 570.2 L712.5 569.8 L713.0 569.5 L713.5 569.2 L714.0 568.9 L714.5 568.7 L715.0 568.6 L715.5 568.7 L716.0 569.0 L716.5 569.6 L717.0 570.3 L717.5 571.4 L718.0 573.3 L718.5 575.4 L719.0 576.8 L719.5 577.9 L720.0 578.9 L720.5 579.6 L721.0 579.9 L721.5 579.9 L722.0 579.7 L722.5 579.5 L723.0 579.2 L723.5 578.9 L724.0 578.5 L724.5 578.2 L725.0 577.9 L725.5 577.5 L726.0 577.1 L726.5 576.7 L727.0 576.2 L727.5 575.8 L728.0 575.4 L728.5 575.0 L729.0 574.7 L729.5 574.3 L730.0 574.1 L730.5 573.8 L731.0 573.5 L731.5 573.2 L732.0 573.0 L732.5 572.6 L733.0 572.3 L733.5 571.8 L734.0 571.4 L734.5 570.9 L735.0 570.3 L735.5 569.7 L736.0 569.0 L736.5 568.1 L737.0 567.1 L737.5 566.4 L738.0 565.9 L738.5 565.6 L739.0 565.3 L739.5 565.1 L740.0 564.9 L740.5 564.8 L741.0 564.7 L741.5 564.7 L742.0 564.7 L742.5 564.7 L743.0 564.7 L743.5 564.7 L744.0 564.7 L744.5 564.7 L745.0 564.7 L745.5 564.7 L746.0 564.7 L746.5 564.6 L747.0 564.5 L747.5 564.4 L748.0 564.2 L748.5 564.1 L749.0 563.9 L749.5 563.5 L750.0 563.0 L750.5 562.3 L751.0 561.5 L751.5 560.6 L752.0 559.1 L752.5 557.1 L753.0 554.8 L753.5 552.8 L754.0 551.3 L754.5 550.0 L755.0 548.8 L755.5 548.0 L756.0 547.6 L756.5 547.4 L757.0 547.2 L757.5 547.0 L758.0 546.9 L758.5 546.9 L759.0 547.0 L759.5 547.2 L760.0 547.5 L760.5 547.7 L761.0 548.0 L761.5 548.2 L762.0 548.4 L762.5 548.5 L763.0 548.7 L763.5 548.8 L764.0 548.9 L764.5 549.1 L765.0 549.2 L765.5 549.3 L766.0 549.5 L766.5 549.6 L767.0 549.8 L767.5 549.9 L768.0 550.1 L768.5 550.3 L769.0 550.5 L769.5 550.8 L770.0 551.2 L770.5 551.7 L771.0 552.4 L771.5 553.1 L772.0 553.9 L772.5 554.9 L773.0 556.0 L773.5 557.2 L774.0 558.6 L774.5 559.9 L775.0 561.4 L775.5 563.1 L776.0 564.8 L776.5 566.6 L777.0 568.3 L777.5 570.2 L778.0 572.1 L778.5 573.9 L779.0 575.4 L779.5 576.5 L780.0 577.6 L780.5 578.5 L781.0 579.2 L781.5 579.4 L782.0 579.3 L782.5 579.0 L783.0 578.7 L783.5 578.2 L784.0 577.8 L784.5 577.4 L785.0 577.1 L785.5 576.8 L786.0 576.5 L786.5 576.2 L787.0 575.9 L787.5 575.8 L788.0 575.7 L788.5 575.7 L789.0 575.7 L789.5 575.7 L790.0 575.7 L790.5 575.7 L791.0 575.7 L791.5 575.7 L792.0 575.8 L792.5 576.0 L793.0 576.2 L793.5 576.5 L794.0 576.9 L794.5 577.2 L795.0 577.7 L795.5 578.2 L796.0 579.0 L796.5 579.7 L797.0 580.5 L797.5 581.1 L798.0 581.8 L798.5 582.5 L799.0 583.1 L799.5 583.6 L800.0 583.9 L800.5 584.2 L801.0 584.4 L801.5 584.5 L802.0 584.7 L802.5 584.8 L803.0 585.0 L803.5 585.1 L804.0 585.2 L804.5 585.3 L805.0 585.4 L805.5 585.5 L806.0 585.7 L806.5 585.8 L807.0 586.1 L807.5 586.5 L808.0 587.1 L808.5 587.7 L809.0 588.3 L809.5 589.0 L810.0 589.9 L810.5 590.9 L811.0 591.6 L811.5 591.9 L812.0 592.1 L812.5 592.2 L813.0 592.3 L813.5 592.3 L814.0 591.8 L814.5 591.0 L815.0 590.0 L815.5 588.9 L816.0 587.6 L816.5 585.9 L817.0 584.1 L817.5 582.2 L818.0 580.4 L818.5 578.8 L819.0 577.3 L819.5 575.7 L820.0 574.3 L820.5 573.1 L821.0 572.2 L821.5 571.5 L822.0 570.9 L822.5 570.4 L823.0 570.0 L823.5 569.8 L824.0 569.6 L824.5 569.5 L825.0 569.4 L825.5 569.3 L826.0 569.3 L826.5 569.3 L827.0 569.5 L827.5 569.9 L828.0 570.2 L828.5 570.6 L829.0 571.0 L829.5 571.6 L830.0 572.2 L830.5 572.9 L831.0 573.6 L831.5 574.3 L832.0 574.9 L832.5 575.6 L833.0 576.3 L833.5 576.9 L834.0 577.6 L834.5 578.1 L835.0 578.6 L835.5 578.8 L836.0 579.0 L836.5 579.2 L837.0 579.3 L837.5 579.4 L838.0 579.4 L838.5 579.2 L839.0 578.9 L839.5 578.4 L840.0 577.8 L840.5 577.3 L841.0 576.7 L841.5 575.9 L842.0 575.1 L842.5 574.3 L843.0 573.5 L843.5 572.7 L844.0 572.1 L844.5 571.4 L845.0 570.7 L845.5 570.1 L846.0 569.5 L846.5 569.1 L847.0 568.7 L847.5 568.4 L848.0 568.2 L848.5 568.0 L849.0 567.8 L849.5 567.7 L850.0 567.6 L850.5 567.6 L851.0 567.6 L851.5 567.8 L852.0 568.0 L852.5 568.2 L853.0 568.5 L853.5 568.7 L854.0 569.0 L854.5 569.2 L855.0 569.4 L855.5 569.7 L856.0 569.9 L856.5 570.1 L857.0 570.3 L857.5 570.3 L858.0 570.2 L858.5 570.2 L859.0 570.1 L859.5 570.0 L860.0 570.0 L860.5 570.2 L861.0 570.9 L861.5 571.9 L862.0 573.0 L862.5 574.1 L863.0 575.2 L863.5 576.5 L864.0 577.8 L864.5 579.1 L865.0 580.0 L865.5 580.6 L866.0 581.2 L866.5 581.6 L867.0 582.0 L867.5 582.2 L868.0 582.1 L868.5 581.7 L869.0 581.0 L869.5 580.3 L870.0 579.6 L870.5 578.9 L871.0 578.3 L871.5 577.6 L872.0 576.9 L872.5 576.2 L873.0 575.6 L873.5 575.1 L874.0 574.7 L874.5 574.4 L875.0 574.0 L875.5 573.7 L876.0 573.4 L876.5 573.2 L877.0 573.0 L877.5 572.9 L878.0 572.8 L878.5 572.7 L879.0 572.6 L879.5 572.6 L880.0 572.5 L880.5 572.6 L881.0 572.8 L881.5 573.2 L882.0 573.8 L882.5 574.5 L883.0 575.2 L883.5 576.2 L884.0 577.4 L884.5 578.7 L885.0 580.0 L885.5 581.1 L886.0 582.1 L886.5 583.0 L887.0 583.9 L887.5 584.8 L888.0 585.6 L888.5 586.4 L889.0 587.2 L889.5 588.0 L890.0 588.7 L890.5 589.4 L891.0 590.1 L891.5 590.8 L892.0 591.6 L892.5 592.6 L893.0 593.6 L893.5 594.7 L894.0 595.9 L894.5 597.1 L895.0 598.3 L895.5 599.4 L896.0 600.5 L896.5 601.6 L897.0 602.7 L897.5 603.7 L898.0 604.7 L898.5 605.6 L899.0 606.4 L899.5 607.1 L900.0 607.8 L900.5 608.4 L901.0 608.9 L901.5 609.5 L902.0 610.0 L902.5 610.6 L903.0 611.2 L903.5 611.9 L904.0 612.5 L904.5 613.2 L905.0 614.0 L905.5 614.7 L906.0 615.4 L906.5 616.1 L907.0 616.8 L907.5 617.5 L908.0 618.1 L908.5 618.8 L909.0 619.4 L909.5 620.0 L910.0 620.6 L910.5 621.2 L911.0 621.8 L911.5 622.3 L912.0 622.8 L912.5 623.4 L913.0 624.0 L913.5 624.6 L914.0 625.0 L914.5 625.4 L915.0 625.5 L915.5 625.5 L916.0 625.5 L916.5 625.5 L917.0 625.5 L917.5 625.5 L918.0 625.4 L918.5 625.1 L919.0 624.7 L919.5 624.1 L920.0 623.5 L920.5 622.9 L921.0 622.5 L921.5 622.0 L922.0 621.6 L922.5 621.2 L923.0 620.8 L923.5 620.4 L924.0 620.1 L924.5 619.9 L925.0 619.6 L925.5 619.4 L926.0 619.2 L926.5 619.0 L927.0 618.8 L927.5 618.8 L928.0 618.8 L928.5 618.8 L929.0 618.9 L929.5 619.0 L930.0 619.1 L930.5 619.2 L931.0 619.4 L931.5 619.6 L932.0 619.9 L932.5 620.4 L933.0 620.8 L933.5 621.2 L934.0 621.5 L934.5 621.6 L935.0 621.6 L935.5 621.6 L936.0 621.5 L936.5 621.4 L937.0 621.3 L937.5 621.2 L938.0 621.1 L938.5 620.9 L939.0 620.7 L939.5 620.5 L940.0 620.2 L940.5 619.9 L941.0 619.6 L941.5 619.3 L942.0 618.9 L942.5 618.5 L943.0 618.1 L943.5 617.7 L944.0 617.3 L944.5 617.1 L945.0 617.0 L945.5 616.9 L946.0 616.8 L946.5 616.7 L947.0 616.6 L947.5 616.6 L948.0 616.5 L948.5 616.6 L949.0 616.9 L949.5 617.2 L950.0 617.7 L950.5 618.2 L951.0 618.7 L951.5 619.1 L952.0 619.6 L952.5 620.1 L953.0 620.6 L953.5 621.1 L954.0 621.6 L954.5 622.1 L955.0 622.6 L955.5 623.2 L956.0 623.8 L956.5 624.4 L957.0 624.9 L957.5 625.3 L958.0 625.5 L958.5 625.5 L959.0 625.4 L959.5 625.2 L960.0 625.0 L960.5 624.7 L961.0 624.2 L961.5 622.8 L962.0 621.1 L962.5 619.8 L963.0 618.9 L963.5 618.0 L964.0 617.2 L964.5 616.6 L965.0 616.2 L965.5 616.0 L966.0 615.9 L966.5 615.8 L967.0 615.7 L967.5 615.6 L968.0 615.5 L968.5 615.3 L969.0 615.2 L969.5 615.0 L970.0 614.8 L970.5 614.6 L971.0 614.4 L971.5 614.2 L972.0 613.9 L972.5 613.4 L973.0 612.9 L973.5 612.3 L974.0 611.7 L974.5 611.2 L975.0 610.7 L975.5 610.4 L976.0 610.1 L976.5 609.8 L977.0 609.6 L977.5 609.5 L978.0 609.5 L978.5 609.8 L979.0 610.2 L979.5 610.7 L980.0 611.2 L980.5 611.8 L981.0 612.5 L981.5 613.4 L982.0 614.1 L982.5 614.7 L983.0 614.9 L983.5 615.1 L984.0 615.2 L984.5 615.3 L985.0 615.4 L985.5 615.0 L986.0 614.3 L986.5 613.5 L987.0 612.7 L987.5 612.2 L988.0 611.7 L988.5 611.3 L989.0 611.0 L989.5 610.7 L990.0 610.6 L990.5 610.7 L991.0 610.7 L991.5 610.9 L992.0 611.1 L992.5 611.3 L993.0 611.5 L993.5 611.8 L994.0 612.2 L994.5 612.7 L995.0 613.3 L995.5 613.9 L996.0 614.5 L996.5 615.1 L997.0 615.8 L997.5 616.6 L998.0 617.4 L998.5 618.3 L999.0 619.0 L999.5 619.7 L1000.0 620.3 L1000.5 620.8 L1001.0 621.3 L1001.5 621.7 L1002.0 622.1 L1002.5 622.5 L1003.0 622.8 L1003.5 623.0 L1004.0 623.2 L1004.5 623.4 L1005.0 623.6 L1005.5 623.8 L1006.0 623.9 L1006.5 624.0 L1007.0 624.1 L1007.5 624.2 L1008.0 624.2 L1008.5 624.3 L1009.0 624.3 L1009.5 624.3 L1010.0 624.4 L1010.5 624.4 L1011.0 624.4 L1011.5 624.5 L1012.0 624.6 L1012.5 624.8 L1013.0 625.0 L1013.5 625.4 L1014.0 625.8 L1014.5 626.6 L1015.0 628.1 L1015.5 629.9 L1016.0 631.9 L1016.5 634.5 L1017.0 637.3 L1017.5 639.5 L1018.0 641.4 L1018.5 643.0 L1019.0 644.2 L1019.5 645.0 L1020.0 645.6 L1020.5 646.1 L1021.0 646.2 L1021.5 645.9 L1022.0 645.4 L1022.5 644.8 L1023.0 644.1 L1023.5 643.5 L1024.0 642.8 L1024.5 641.9 L1025.0 641.0 L1025.5 640.1 L1026.0 639.1 L1026.5 638.2 L1027.0 637.3 L1027.5 636.4 L1028.0 635.4 L1028.5 634.4 L1029.0 633.5 L1029.5 632.7 L1030.0 632.0 L1030.5 631.4 L1031.0 630.8 L1031.5 630.3 L1032.0 629.9 L1032.5 629.6 L1033.0 629.5 L1033.5 629.5 L1034.0 629.4 L1034.5 629.4 L1035.0 629.4 L1035.5 629.3 L1036.0 629.3 L1036.5 629.1 L1037.0 628.9 L1037.5 628.6 L1038.0 628.2 L1038.5 627.7 L1039.0 627.0 L1039.5 626.0 L1040.0 624.7 L1040.5 623.3 L1041.0 622.0 L1041.5 620.5 L1042.0 619.1 L1042.5 618.3 L1043.0 618.0 L1043.5 617.7 L1044.0 617.5 L1044.5 617.4 L1045.0 617.4 L1045.5 617.5 L1046.0 617.8 L1046.5 618.1 L1047.0 618.5 L1047.5 618.8 L1048.0 619.1 L1048.5 619.3 L1049.0 619.5 L1049.5 619.7 L1050.0 619.9 L1050.5 620.1 L1051.0 620.3 L1051.5 620.5 L1052.0 620.7 L1052.5 620.9 L1053.0 621.2 L1053.5 621.4 L1054.0 621.7 L1054.5 621.9 L1055.0 622.2 L1055.5 622.4 L1056.0 622.6 L1056.5 622.9 L1057.0 623.1 L1057.5 623.4 L1058.0 623.6 L1058.5 623.9 L1059.0 624.1 L1059.5 624.3 L1060.0 624.4 L1060.5 624.5 L1061.0 624.5 L1061.5 624.5 L1062.0 624.5 L1062.5 624.5 L1063.0 624.5 L1063.5 624.5 L1064.0 624.5 L1064.5 624.5 L1065.0 624.5 L1065.5 624.5 L1066.0 624.5 L1066.5 624.4 L1067.0 624.4 L1067.5 624.3 L1068.0 624.3 L1068.5 624.2 L1069.0 624.2 L1069.5 624.2 L1070.0 624.2 L1070.5 624.2 L1071.0 624.2 L1071.5 624.3 L1072.0 624.4 L1072.5 624.5 L1073.0 624.6 L1073.5 624.7 L1074.0 624.8 L1074.5 624.9 L1075.0 625.0 L1075.5 625.1 L1076.0 625.3 L1076.5 625.5 L1077.0 625.7 L1077.5 626.0 L1078.0 626.1 L1078.5 626.3 L1079.0 626.4 L1079.5 626.4 L1080.0 626.3 L1080.5 626.3 L1081.0 626.2 L1081.5 626.1 L1082.0 626.0 L1082.5 625.9 L1083.0 625.7 L1083.5 625.4 L1084.0 624.9 L1084.5 624.4 L1085.0 623.8 L1085.5 623.1 L1086.0 622.5 L1086.5 621.8 L1087.0 621.0 L1087.5 620.1 L1088.0 619.2 L1088.5 618.2 L1089.0 617.3 L1089.5 616.4 L1090.0 615.5 L1090.5 614.5 L1091.0 613.6 L1091.5 612.6 L1092.0 611.8 L1092.5 611.0 L1093.0 610.4 L1093.5 609.8 L1094.0 609.2 L1094.5 608.7 L1095.0 608.3 L1095.5 608.0 L1096.0 607.7 L1096.5 607.5 L1097.0 607.3 L1097.5 607.1 L1098.0 606.8 L1098.5 606.5 L1099.0 606.2 L1099.5 605.6 L1100.0 605.0 L1100.5 604.3 L1101.0 603.5 L1101.5 602.5 L1102.0 601.4 L1102.5 600.0 L1103.0 598.6 L1103.5 597.1 L1104.0 595.6 L1104.5 594.1 L1105.0 592.6 L1105.5 591.1 L1106.0 589.6 L1106.5 588.2 L1107.0 586.8 L1107.5 585.5 L1108.0 584.6 L1108.5 583.7 L1109.0 582.8 L1109.5 582.2 L1110.0 581.7 L1110.5 581.6 L1111.0 581.5 L1111.5 581.4 L1112.0 581.4 L1112.5 581.3 L1113.0 581.3 L1113.5 581.3 L1114.0 581.3 L1114.5 581.5 L1115.0 581.8 L1115.5 582.1 L1116.0 582.5 L1116.5 582.7 L1117.0 582.8 L1117.5 582.8 L1118.0 582.6 L1118.5 582.3 L1119.0 582.0 L1119.5 581.6 L1120.0 581.2 L1120.5 580.7 L1121.0 580.1 L1121.5 579.2 L1122.0 578.3 L1122.5 577.7 L1123.0 577.4 L1123.5 577.5 L1124.0 577.6 L1124.5 577.9 L1125.0 578.2 L1125.5 578.9 L1126.0 580.2 L1126.5 581.8 L1127.0 583.4 L1127.5 585.1 L1128.0 587.1 L1128.5 589.3 L1129.0 591.4 L1129.5 593.4 L1130.0 595.1 L1130.5 596.7 L1131.0 598.3 L1131.5 599.7 L1132.0 601.0 L1132.5 602.2 L1133.0 603.2 L1133.5 604.0 L1134.0 604.8 L1134.5 605.6 L1135.0 606.2 L1135.5 606.8 L1136.0 607.3 L1136.5 607.8 L1137.0 608.2 L1137.5 608.6 L1138.0 609.0 L1138.5 609.4 L1139.0 609.7 L1139.5 610.1 L1140.0 610.5 L1140.5 610.9 L1141.0 611.2 L1141.5 611.6 L1142.0 612.0 L1142.5 612.4 L1143.0 612.8 L1143.5 613.2 L1144.0 613.6 L1144.5 614.1 L1145.0 614.7 L1145.5 615.2 L1146.0 615.8 L1146.5 616.4 L1147.0 617.2 L1147.5 618.0 L1148.0 618.9 L1148.5 620.0 L1149.0 621.3 L1149.5 622.8 L1150.0 624.5 L1150.5 627.3 L1151.0 631.0 L1151.5 633.5 L1152.0 635.1 L1152.5 636.3 L1153.0 637.0 L1153.5 637.0 L1154.0 636.9 L1154.5 636.8 L1155.0 636.8 L1155.5 636.6 L1156.0 636.4 L1156.5 636.0 L1157.0 635.6 L1157.5 635.0 L1158.0 634.5 L1158.5 634.1 L1159.0 633.8 L1159.5 633.4 L1160.0 633.0 L1160.5 632.7 L1161.0 632.4 L1161.5 632.2 L1162.0 632.1 L1162.5 632.0 L1163.0 631.9 L1163.5 631.8 L1164.0 631.7 L1164.5 631.7 L1165.0 631.6 L1165.5 631.6 L1166.0 631.6 L1166.5 631.6 L1167.0 631.7 L1167.5 631.9 L1168.0 632.2 L1168.5 632.5 L1169.0 632.9 L1169.5 633.2 L1170.0 633.6 L1170.5 634.2 L1171.0 634.8 L1171.5 635.5 L1172.0 636.2 L1172.5 636.9 L1173.0 637.6 L1173.5 638.2 L1174.0 638.9 L1174.5 639.6 L1175.0 640.3 L1175.5 640.9 L1176.0 641.4 L1176.5 641.9 L1177.0 642.3 L1177.5 642.8 L1178.0 643.1 L1178.5 643.4 L1179.0 643.4 L1179.5 643.3 L1180.0 643.0 L1180.5 642.7 L1181.0 642.3 L1181.5 642.0 L1182.0 641.5 L1182.5 640.9 L1183.0 640.3 L1183.5 639.9 L1184.0 639.7 L1184.5 639.6 L1185.0 639.5 L1185.5 639.4 L1186.0 639.3 L1186.5 639.3 L1187.0 639.2 L1187.5 639.2 L1188.0 639.2 L1188.5 639.2 L1189.0 639.2 L1189.5 639.2 L1190.0 639.2 L1190.5 639.2 L1191.0 639.2 L1191.5 639.2 L1192.0 639.2 L1192.5 639.2 L1193.0 639.2 L1193.5 639.2 L1194.0 639.2 L1194.5 639.1 L1195.0 639.1 L1195.5 639.0 L1196.0 638.9 L1196.5 638.8 L1197.0 638.7 L1197.5 638.5 L1198.0 638.4 L1198.5 638.3 L1199.0 638.1 L1199.5 637.9 L1200.0 637.6 L1200.5 637.3 L1201.0 637.0 L1201.5 636.6 L1202.0 636.3 L1202.5 635.8 L1203.0 635.3 L1203.5 634.7 L1204.0 633.9 L1204.5 633.1 L1205.0 632.2 L1205.5 631.4 L1206.0 630.6 L1206.5 629.8 L1207.0 629.0 L1207.5 628.2 L1208.0 627.4 L1208.5 626.6 L1209.0 626.0 L1209.5 625.5 L1210.0 624.9 L1210.5 624.4 L1211.0 624.0 L1211.5 623.6 L1212.0 623.3 L1212.5 623.1 L1213.0 623.1 L1213.5 623.1 L1214.0 623.1 L1214.5 623.1 L1215.0 623.1 L1215.5 623.1 L1216.0 623.1 L1216.5 623.3 L1217.0 623.8 L1217.5 624.5 L1218.0 625.3 L1218.5 626.0 L1219.0 626.5 L1219.5 627.0 L1220.0 627.5 L1220.5 628.0 L1221.0 628.4 L1221.5 628.8 L1222.0 629.0 L1222.5 629.2 L1223.0 629.4 L1223.5 629.5 L1224.0 629.6 L1224.5 629.7 L1225.0 629.8 L1225.5 629.9 L1226.0 630.1 L1226.5 630.4 L1227.0 630.8 L1227.5 631.4 L1228.0 632.1 L1228.5 632.8 L1229.0 633.6 L1229.5 634.6 L1230.0 635.7 L1230.5 636.8 L1231.0 637.8 L1231.5 638.6 L1232.0 639.3 L1232.5 640.0 L1233.0 640.6 L1233.5 641.1 L1234.0 641.6 L1234.5 641.9 L1235.0 642.2 L1235.5 642.4 L1236.0 642.7 L1236.5 642.9 L1237.0 643.1 L1237.5 643.2 L1238.0 643.3 L1238.5 643.4 L1239.0 643.4 L1239.5 643.4 L1240.0 643.3 L1240.5 643.1 L1241.0 643.0 L1241.5 642.8 L1242.0 642.6 L1242.5 642.3 L1243.0 642.1 L1243.5 641.9 L1244.0 641.6 L1244.5 641.2 L1245.0 640.8 L1245.5 640.5 L1246.0 640.4 L1246.5 640.4 L1247.0 640.9 L1247.5 641.5 L1248.0 642.2 L1248.5 642.9 L1249.0 643.7 L1249.5 644.5 L1250.0 645.2 L1250.5 645.8 L1251.0 646.0 L1251.5 646.2 L1252.0 646.3 L1252.5 646.4 L1253.0 646.5 L1253.5 646.1 L1254.0 645.2 L1254.5 644.1 L1255.0 643.1 L1255.5 642.4 L1256.0 641.9 L1256.5 641.5 L1257.0 641.0 L1257.5 640.7 L1258.0 640.5 L1258.5 640.4 L1259.0 640.3 L1259.5 640.2 L1260.0 640.2 L1260.5 640.1 L1261.0 640.1 L1261.5 640.1 L1262.0 640.0 L1262.5 640.0 L1263.0 640.0 L1263.5 640.1 L1264.0 640.2 L1264.5 640.3 L1265.0 640.5 L1265.5 640.7 L1266.0 640.9 L1266.5 641.2 L1267.0 641.8 L1267.5 642.4 L1268.0 643.0 L1268.5 643.5 L1269.0 643.8 L1269.5 643.9 L1270.0 644.0 L1270.5 644.1 L1271.0 644.2 L1271.5 644.2 L1272.0 644.3 L1272.5 644.1 L1273.0 643.8 L1273.5 643.4 L1274.0 642.8 L1274.5 642.2 L1275.0 641.7 L1275.5 641.2 L1276.0 640.8 L1276.5 640.5 L1277.0 640.2 L1277.5 639.9 L1278.0 639.7 L1278.5 639.5 L1279.0 639.2 L1279.5 639.0 L1280.0 638.8 L1280.5 638.6 L1281.0 638.4 L1281.5 638.3 L1282.0 638.2 L1282.5 638.3 L1283.0 638.5 L1283.5 638.7 L1284.0 639.0 L1284.5 639.4 L1285.0 639.9 L1285.5 640.6 L1286.0 641.5 L1286.5 642.5 L1287.0 643.5 L1287.5 644.6 L1288.0 645.8 L1288.5 647.1 L1289.0 648.3 L1289.5 649.4 L1290.0 650.4 L1290.5 651.4 L1291.0 652.4 L1291.5 653.2 L1292.0 653.7 L1292.5 654.0 L1293.0 654.2 L1293.5 654.4 L1294.0 654.6 L1294.5 654.6 L1295.0 654.6 L1295.5 654.4 L1296.0 654.0 L1296.5 653.6 L1297.0 653.2 L1297.5 652.8 L1298.0 652.6 L1298.5 652.5 L1299.0 652.4 L1299.5 652.3 L1300.0 652.2 L1300.5 652.1 L1301.0 652.1 L1301.5 652.1 L1302.0 652.2 L1302.5 652.5 L1303.0 652.9 L1303.5 653.3 L1304.0 653.8 L1304.5 654.4 L1305.0 655.2 L1305.5 656.1 L1306.0 657.1 L1306.5 658.0 L1307.0 659.0 L1307.5 660.0 L1308.0 661.1 L1308.5 662.1 L1309.0 663.0 L1309.5 663.8 L1310.0 664.6 L1310.5 665.3 L1311.0 665.9 L1311.5 666.4 L1312.0 666.8 L1312.5 667.1 L1313.0 667.3 L1313.5 667.6 L1314.0 667.8 L1314.5 668.0 L1315.0 668.2 L1315.5 668.4 L1316.0 668.6 L1316.5 668.7 L1317.0 668.9 L1317.5 669.1 L1318.0 669.3 L1318.5 669.6 L1319.0 670.1 L1319.5 670.8 L1320.0 671.6 L1320.5 672.5 L1321.0 673.5 L1321.5 674.9 L1322.0 676.6 L1322.5 678.1 L1323.0 679.4 L1323.5 680.6 L1324.0 681.5 L1324.5 681.8 L1325.0 681.9 L1325.5 682.0 L1326.0 682.0 L1326.5 682.1 L1327.0 681.9 L1327.5 681.5 L1328.0 680.9 L1328.5 680.2 L1329.0 679.6 L1329.5 679.0 L1330.0 678.5 L1330.5 678.0 L1331.0 677.5 L1331.5 677.0 L1332.0 676.5 L1332.5 676.0 L1333.0 675.5 L1333.5 675.0 L1334.0 674.4 L1334.5 673.9 L1335.0 673.5 L1335.5 673.1 L1336.0 672.8 L1336.5 672.4 L1337.0 672.1 L1337.5 671.9 L1338.0 671.7 L1338.5 671.6 L1339.0 671.6 L1339.5 671.7 L1340.0 671.9 L1340.5 672.1 L1341.0 672.3 L1341.5 672.5 L1342.0 672.7 L1342.5 672.9 L1343.0 673.1 L1343.5 673.2 L1344.0 673.2 L1344.5 672.5 L1345.0 671.3 L1345.5 669.7 L1346.0 665.8 L1346.5 660.5 L1347.0 656.8 L1347.5 653.8 L1348.0 651.4 L1348.5 649.5 L1349.0 648.2 L1349.5 647.0 L1350.0 646.1 L1350.5 645.4 L1351.0 644.8 L1351.5 644.4 L1352.0 644.1 L1352.5 643.8 L1353.0 643.5 L1353.5 643.1 L1354.0 642.7 L1354.5 642.2 L1355.0 641.6 L1355.5 640.9 L1356.0 640.3 L1356.5 639.6 L1357.0 638.9 L1357.5 638.3 L1358.0 637.6 L1358.5 636.9 L1359.0 636.1 L1359.5 635.5 L1360.0 634.9 L1360.5 634.4 L1361.0 634.1 L1361.5 633.9 L1362.0 633.6 L1362.5 633.4 L1363.0 633.3 L1363.5 633.1 L1364.0 633.0 L1364.5 632.9 L1365.0 632.8 L1365.5 632.7 L1366.0 632.6 L1366.5 632.6 L1367.0 632.5 L1367.5 632.4 L1368.0 632.3 L1368.5 632.3 L1369.0 632.1 L1369.5 632.0 L1370.0 631.9 L1370.5 631.8 L1371.0 631.6 L1371.5 631.5 L1372.0 631.5 L1372.5 631.4 L1373.0 631.5 L1373.5 631.6 L1374.0 631.9 L1374.5 632.2 L1375.0 632.6 L1375.5 633.3 L1376.0 634.8 L1376.5 636.2 L1377.0 637.4 L1377.5 638.5 L1378.0 639.6 L1378.5 640.4 L1379.0 641.0 L1379.5 641.1 L1380.0 641.1 L1380.5 641.1 L1381.0 641.1 L1381.5 641.1 L1382.0 641.1 L1382.5 641.1 L1383.0 641.1 L1383.5 640.9 L1384.0 640.5 L1384.5 640.1 L1385.0 639.6 L1385.5 639.1 L1386.0 638.6 L1386.5 638.2 L1387.0 637.7 L1387.5 637.1 L1388.0 636.6 L1388.5 636.1 L1389.0 635.6 L1389.5 635.1 L1390.0 634.7 L1390.5 634.3 L1391.0 633.9 L1391.5 633.6 L1392.0 633.5 L1392.5 633.6 L1393.0 633.8 L1393.5 634.2 L1394.0 634.7 L1394.5 635.1 L1395.0 635.7 L1395.5 636.3 L1396.0 637.0 L1396.5 637.8 L1397.0 638.5 L1397.5 639.1 L1398.0 639.8 L1398.5 640.5 L1399.0 641.2 L1399.5 641.9 L1400.0 642.4 L1400.5 642.8 L1401.0 643.2 L1401.5 643.5 L1402.0 643.8 L1402.5 644.1 L1403.0 644.3 L1403.5 644.5 L1404.0 644.5 L1404.5 644.4 L1405.0 644.3 L1405.5 644.2 L1406.0 644.0 L1406.5 643.9 L1407.0 643.7 L1407.5 643.6 L1408.0 643.4 L1408.5 643.3 L1409.0 643.1 L1409.5 642.9 L1410.0 642.8 L1410.5 642.6 L1411.0 642.5 L1411.5 642.4 L1412.0 642.4 L1412.5 642.3 L1413.0 642.3 L1413.5 642.2 L1414.0 642.2 L1414.5 642.1 L1415.0 642.1 L1415.5 642.0 L1416.0 642.0 L1416.5 641.9 L1417.0 641.9 L1417.5 641.8 L1418.0 641.8 L1418.5 641.8 L1419.0 641.7 L1419.5 641.7 L1420.0 641.6 L1420.5 641.6 L1421.0 641.5 L1421.5 641.4 L1422.0 641.4 L1422.5 641.3 L1423.0 641.2 L1423.5 641.1 L1424.0 641.0 L1424.5 640.9 L1425.0 640.8 L1425.5 640.5 L1426.0 640.3 L1426.5 639.9 L1427.0 639.5 L1427.5 639.1 L1428.0 638.8 L1428.5 638.5 L1429.0 638.2 L1429.5 638.0 L1430.0 637.8 L1430.5 637.6 L1431.0 637.4 L1431.5 637.2 L1432.0 637.0 L1432.5 636.8 L1433.0 636.6 L1433.5 636.3 L1434.0 636.1 L1434.5 635.9 L1435.0 635.6 L1435.5 635.4 L1436.0 635.1 L1436.5 634.9 L1437.0 634.6 L1437.5 634.4 L1438.0 634.2 L1438.5 634.0 L1439.0 633.8 L1439.5 633.6 L1440.0 633.4 L1440.5 633.2 L1441.0 633.1 L1441.5 632.9 L1442.0 632.8 L1442.5 632.7 L1443.0 632.6 L1443.5 632.5 L1444.0 632.5 L1444.5 632.4 L1445.0 632.3 L1445.5 632.3 L1446.0 632.3 L1446.5 632.3 L1447.0 632.3 L1447.5 632.4 L1448.0 632.5 L1448.5 632.6 L1449.0 632.8 L1449.5 633.2 L1450.0 633.8 L1450.5 634.5 L1451.0 635.0 L1451.5 635.3 L1452.0 635.6 L1452.5 635.8 L1453.0 636.0 L1453.5 636.0 L1454.0 635.7 L1454.5 635.1 L1455.0 634.2 L1455.5 633.4 L1456.0 632.6 L1456.5 631.5 L1457.0 630.5 L1457.5 629.4 L1458.0 628.4 L1458.5 627.5 L1459.0 626.7 L1459.5 625.9 L1460.0 625.1 L1460.0 625.0" fill="none" stroke="#e8ba50" stroke-width="1.15" stroke-linejoin="round"/>

  <!-- select caret -->
  <path d="M1407.4 401.3h8.8l-4.4 5z" fill="#c4c7cb"/>
  <path d="M1514.2 400.9l3.2-3.5 3.2 3.5 M1514.2 406.9l3.2 3.5 3.2-3.5" fill="none" stroke="#d0d3d7" stroke-width="1.6" stroke-linecap="round" stroke-linejoin="round"/>

  <!-- Binance icon -->
  <g transform="translate(1319.37 75.74) scale(0.2133)" fill="#ecb842">
    <path d="M38.73 53.2l24.59-24.58 24.6 24.6 14.3-14.31L63.32 0 24.42 38.9z"/>
    <path d="M0 63.31l14.3-14.31 14.31 14.31-14.31 14.3z"/>
    <path d="M38.73 73.41l24.59 24.59 24.6-24.6 14.31 14.29-38.9 38.91-38.91-38.88z"/>
    <path d="M98 63.31l14.3-14.31 14.31 14.3-14.31 14.32z"/>
    <path d="M77.83 63.3L63.32 48.78 52.59 59.51l-1.24 1.23-2.54 2.54 14.51 14.5 14.51-14.47z"/>
  </g>
  <!-- OKX icon -->
  <rect x="1319.2" y="134.2" width="27.5" height="27.5" rx="4.2" fill="#ffffff"/>
  <g fill="#06080c">
    <rect x="1325.2" y="140.3" width="5.1" height="5.1"/>
    <rect x="1335.4" y="140.3" width="5.1" height="5.1"/>
    <rect x="1330.3" y="145.4" width="5.1" height="5.1"/>
    <rect x="1325.2" y="150.5" width="5.1" height="5.1"/>
    <rect x="1335.4" y="150.5" width="5.1" height="5.1"/>
  </g>
  <!-- Bybit icon -->
  <rect x="1319.2" y="192.8" width="27.5" height="27.5" rx="4.2" fill="#ffffff"/>
  <text x="1322.6" y="210.3" font-family="Liberation Sans, sans-serif" font-weight="700" font-size="8.2" fill="#15171c" stroke="#15171c" stroke-width="0.35" textLength="13.6" lengthAdjust="spacingAndGlyphs">BYB</text>
  <rect x="1337" y="203.4" width="1.5" height="6.9" fill="#f5a623"/>
  <text x="1339.2" y="210.3" font-family="Liberation Sans, sans-serif" font-weight="700" font-size="8.2" fill="#15171c" stroke="#15171c" stroke-width="0.35" textLength="4.3" lengthAdjust="spacingAndGlyphs">T</text>
  <!-- Bitfinex icon -->
  <g>
    <path d="M1320.2 270.5 C1320 260 1330 252.5 1345.6 252 C1341 258 1333 266.5 1320.2 270.5 Z" fill="#3f9f5c"/>
    <path d="M1321.5 274.8 C1333 271.5 1342.5 262 1345.9 253.2 C1347.5 264 1342 279 1329 278.8 C1325.5 278.8 1322.8 277 1321.5 274.8 Z" fill="#97cf5c"/>
  </g>

  <!-- coinglass watermark -->
  <g fill="#ffffff" opacity="0.7">
    <path d="M1338.96 668.67 C1339.26 668.52 1340.02 669.77 1340.51 670.04 C1340.99 670.31 1341.27 670.39 1341.88 670.31 C1342.48 670.24 1343.24 669.70 1344.15 669.58 C1345.07 669.46 1346.43 669.51 1347.34 669.58 C1348.26 669.66 1349.01 670.04 1349.62 670.04 C1350.23 670.04 1350.61 669.84 1350.99 669.58 C1351.37 669.33 1351.63 668.41 1351.90 668.49 C1352.17 668.57 1352.45 669.40 1352.63 670.04 C1352.81 670.68 1352.66 671.79 1352.99 672.32 C1353.33 672.85 1354.06 672.89 1354.64 673.23 C1355.21 673.56 1355.93 673.79 1356.46 674.32 C1356.99 674.85 1357.90 675.92 1357.83 676.42 C1357.75 676.92 1356.53 677.10 1356.00 677.33 C1355.47 677.56 1354.79 677.33 1354.64 677.79 C1354.48 678.24 1355.09 679.31 1355.09 680.07 C1355.09 680.82 1354.83 681.66 1354.64 682.34 C1354.44 683.03 1354.18 683.63 1353.91 684.17 C1353.63 684.70 1352.95 685.08 1352.99 685.53 C1353.04 685.99 1353.88 686.29 1354.18 686.90 C1354.48 687.51 1354.77 688.42 1354.82 689.18 C1354.86 689.94 1354.67 690.77 1354.45 691.46 C1354.24 692.14 1353.78 692.67 1353.54 693.28 C1353.30 693.89 1353.27 694.53 1352.99 695.10 C1352.72 695.68 1352.39 696.41 1351.90 696.74 C1351.41 697.08 1350.56 697.20 1350.08 697.11 C1349.59 697.02 1349.44 696.46 1348.98 696.20 C1348.53 695.94 1347.85 695.56 1347.34 695.56 C1346.84 695.56 1346.40 695.94 1345.98 696.20 C1345.55 696.46 1345.32 696.96 1344.79 697.11 C1344.26 697.26 1343.39 697.29 1342.79 697.11 C1342.18 696.93 1341.57 696.35 1341.15 696.02 C1340.72 695.68 1340.64 695.26 1340.23 695.10 C1339.82 694.95 1339.32 694.92 1338.68 695.10 C1338.05 695.29 1336.56 696.35 1336.41 696.20 C1336.25 696.05 1337.47 694.83 1337.77 694.19 C1338.08 693.55 1338.27 692.98 1338.23 692.37 C1338.18 691.76 1337.65 691.23 1337.50 690.55 C1337.35 689.86 1337.20 688.95 1337.32 688.27 C1337.44 687.58 1337.89 686.90 1338.23 686.45 C1338.56 685.99 1339.40 685.91 1339.32 685.53 C1339.25 685.15 1338.18 684.70 1337.77 684.17 C1337.36 683.63 1337.09 683.03 1336.86 682.34 C1336.63 681.66 1336.45 680.82 1336.41 680.07 C1336.36 679.31 1336.82 678.32 1336.59 677.79 C1336.36 677.25 1335.53 677.36 1335.04 676.88 C1334.55 676.39 1333.60 675.40 1333.67 674.87 C1333.75 674.34 1334.81 674.03 1335.49 673.68 C1336.18 673.34 1337.24 673.23 1337.77 672.77 C1338.31 672.32 1338.49 671.63 1338.68 670.95 C1338.88 670.27 1338.65 668.82 1338.96 668.67Z"/>
    <text x="1364.3" y="688.8" font-family="Liberation Sans, sans-serif" font-weight="700" font-size="21" textLength="80.7" lengthAdjust="spacingAndGlyphs" stroke="#ffffff" stroke-width="0.5">coinglass</text>
  </g>
</svg>
</body>
</html>
